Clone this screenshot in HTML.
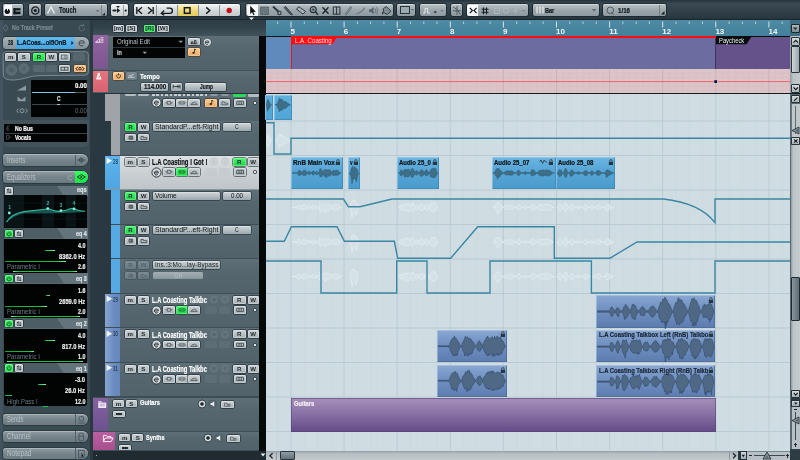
<!DOCTYPE html>
<html><head><meta charset="utf-8"><title>Project</title>
<style>
html,body{margin:0;padding:0;background:#33434c;}
body{width:800px;height:460px;position:relative;overflow:hidden;font-family:"Liberation Sans",sans-serif;}
div{position:absolute;box-sizing:border-box;}
svg{position:absolute;overflow:visible;}
.t{white-space:nowrap;font-size:9px;line-height:10px;color:#fff;font-weight:bold;letter-spacing:-0.2px;}
.b{border-radius:1.5px;background:linear-gradient(#cdd3d6,#a5afb4);box-shadow:0 0 0 0.7px rgba(24,34,40,.75),inset 0 0 0 0.7px rgba(255,255,255,.45);}
.bd{border-radius:1.5px;background:linear-gradient(#7d8c92,#6b7a81);box-shadow:0 0 0 0.7px rgba(60,75,82,.7);}
.bg{border-radius:1.5px;background:linear-gradient(#4cf672,#19d645);box-shadow:0 0 0 0.7px rgba(16,70,34,.8),inset 0 0 0 0.7px rgba(190,255,200,.5);}
.bo{border-radius:1.5px;background:linear-gradient(#f9cc94,#eda968);box-shadow:0 0 0 0.7px rgba(80,52,26,.8),inset 0 0 0 0.7px rgba(255,235,200,.5);}
.tb{border-radius:2px;background:linear-gradient(#b9c1c5,#9ca7ac 50%,#8d999e);box-shadow:0 0 0 0.8px #1a252b,inset 0 0.8px 0 rgba(255,255,255,.5);}
.pb{border-radius:1.5px;background:linear-gradient(#d0d6d9,#9ca8ad);box-shadow:0 0 0 0.7px rgba(34,46,52,.75),inset 0 0.7px 0 rgba(255,255,255,.4);}
.tab{border-radius:3px 6px 6px 3px;background:linear-gradient(#909ca1,#77858b 50%,#6b7a80);box-shadow:0 0 0 0.7px #27343b,inset 0 1px 0 rgba(255,255,255,.28);}
.bt{font-size:7px;line-height:7px;font-weight:bold;color:#1c262b;text-align:center;white-space:nowrap;letter-spacing:0;}
</style></head><body><div id="app" style="left:0;top:0;width:800px;height:460px;will-change:transform;">

<div style="left:0px;top:0px;width:800px;height:20px;background:linear-gradient(#26333b,#3a4a53 18%,#2f3e46 70%,#25323a);"></div>
<div style="left:0px;top:19px;width:800px;height:1px;background:#1b262c;"></div>
<div class="tb" style="left:3px;top:4.4px;width:20px;height:11.8px;"></div>
<div style="left:3.5px;top:5px;width:8px;height:11px;background:linear-gradient(#fff,#e4e8ea);border-radius:2px 0 0 2px;"></div>
<svg style="left:3px;top:3.6px" width="20" height="14" viewBox="0 0 20 14"><circle cx="4.3" cy="7.3" r="2.6" fill="#0c1114"/><rect x="4" y="4.2" width="1" height="2.4" fill="#fff"/><rect x="10.5" y="4.2" width="7" height="2.2" fill="#10171b"/><rect x="10.5" y="7.6" width="7" height="2.6" fill="#10171b"/><rect x="10.5" y="4.2" width="2" height="6" fill="#10171b"/></svg>
<div class="tb" style="left:28.5px;top:4.4px;width:12.5px;height:11.8px;"></div>
<svg style="left:28.5px;top:4.2px" width="13" height="13" viewBox="0 0 13 13"><circle cx="6.3" cy="6.5" r="3.6" fill="none" stroke="#151d21" stroke-width="1.3"/><circle cx="6.3" cy="6.5" r="1.6" fill="#151d21"/></svg>
<div class="tb" style="left:45px;top:4.4px;width:61.5px;height:11.8px;"></div>
<div style="left:100.6px;top:5px;width:0.8px;height:11px;background:#78868c;"></div>
<svg style="left:46px;top:4.2px" width="12" height="12" viewBox="0 0 12 12"><path d="M1.5 9.5 L5 3 L8.5 9.5" fill="none" stroke="#e6ebed" stroke-width="1.4"/></svg>
<div class="t" style="left:58.6px;top:5.61px;font-size:8.208px;letter-spacing:0;font-weight:bold;-webkit-text-stroke:0.2px;color:#10181c;transform-origin:0 0;transform:scaleX(0.725);">Touch</div>
<svg style="left:95px;top:8.5px" width="11" height="8" viewBox="0 0 11 8"><path d="M0.6 1 L4.6 1 L2.6 3.2Z" fill="#66757b"/><path d="M10 3.6 L10 6.6 L7 6.6Z" fill="#1b2428"/></svg>
<div class="tb" style="left:110.5px;top:4.4px;width:17.5px;height:11.8px;background:linear-gradient(#f4f6f7,#d8dddf 50%,#c9cfd2);"></div>
<div style="left:122.6px;top:5px;width:0.8px;height:11px;background:#98a3a8;"></div>
<svg style="left:110.5px;top:4.2px" width="18" height="13" viewBox="0 0 18 13"><path d="M2 6.5 h3 M4 5 l-0 0" stroke="#161e22" stroke-width="1.4"/><path d="M6 4 L9.2 6.5 L6 9Z" fill="#161e22"/><path d="M5 2 h4 l-2 2Z" fill="#161e22"/><rect x="1.5" y="5.7" width="4" height="1.6" fill="#161e22"/><circle cx="14.7" cy="6.6" r="1.1" fill="#161e22"/></svg>
<div class="tb" style="left:133.8px;top:4.4px;width:106.2px;height:11.8px;background:linear-gradient(#f4f6f7,#d5dadc 50%,#c3cacd);"></div>
<div style="left:177px;top:5px;width:20.5px;height:11px;background:linear-gradient(#fdf2b8,#ecd56f 60%,#e4cb63);"></div>
<div style="left:155.7px;top:5px;width:0.8px;height:11px;background:#8a959a;"></div>
<div style="left:177px;top:5px;width:0.8px;height:11px;background:#8a959a;"></div>
<div style="left:197.5px;top:5px;width:0.8px;height:11px;background:#8a959a;"></div>
<div style="left:218.5px;top:5px;width:0.8px;height:11px;background:#8a959a;"></div>
<svg style="left:133.8px;top:4.2px" width="107" height="13" viewBox="0 0 107 13"><path d="M2.8 3 v7 M8 3.2 L4.2 6.5 L8 9.8" fill="none" stroke="#12191d" stroke-width="1.3"/><path d="M19.2 3 v7 M14 3.2 L17.8 6.5 L14 9.8" fill="none" stroke="#12191d" stroke-width="1.3"/><path d="M27.5 9.3 h8.3 a2.6 2.6 0 0 0 0 -5.2 h-3.2 M30.2 6.6 L27.3 9.3 L30.2 11.2" fill="none" stroke="#12191d" stroke-width="1.3"/><rect x="50.4" y="3.7" width="5.6" height="5.6" fill="none" stroke="#12191d" stroke-width="1.5"/><path d="M72.2 3.4 L75.8 6.5 L72.2 9.6" fill="none" stroke="#12191d" stroke-width="1.4"/><circle cx="95.2" cy="6.5" r="2.7" fill="#c4101c"/></svg>
<div class="tb" style="left:246px;top:4.4px;width:147px;height:11.8px;"></div>
<div style="left:246.5px;top:5px;width:11.5px;height:11px;background:linear-gradient(#ffffff,#eef1f2);border-radius:2px 0 0 2px;"></div>
<svg style="left:246px;top:4.2px" width="147" height="13" viewBox="0 0 147 13"><path d="M4.2 1.8 L4.2 10 L6.1 8.3 L7.4 11.2 L8.5 10.7 L7.3 7.9 L9.8 7.7Z" fill="#0d1316"/><rect x="14.5" y="3" width="8" height="7.5" fill="#6a787e" stroke="#3d4b51" stroke-width="0.8" stroke-dasharray="1 0.6"/><path d="M27 2.6 L32.6 7.8" fill="none" stroke="#2d3a40" stroke-width="2"/><circle cx="33.4" cy="9" r="1.7" fill="none" stroke="#2d3a40" stroke-width="1.1"/><path d="M39.4 2.4 L45.4 9.2 L46.3 11 L44.2 10.2 L38.2 3.6Z" fill="#56646a" stroke="#27333a" stroke-width="0.9"/><path d="M50.5 5 L53 2.8 L59.5 7.5 L57 10.2Z" fill="#aab4b8" stroke="#2d393f" stroke-width="1"/><circle cx="67.2" cy="5.6" r="3" fill="none" stroke="#26323a" stroke-width="1.2"/><path d="M69.4 7.8 L72 10.8" stroke="#26323a" stroke-width="1.6"/><path d="M65.7 5.6 h3 M67.2 4.1 v3" stroke="#26323a" stroke-width="0.8"/><path d="M76.5 3.2 L82.5 9.8 M82.5 3.2 L76.5 9.8" stroke="#1b2529" stroke-width="1.3"/><rect x="87.3" y="3" width="6.6" height="7.2" fill="none" stroke="#27333a" stroke-width="1"/><path d="M90.6 3 v7.2" stroke="#27333a" stroke-width="1"/><path d="M104.5 2.5 L100 9 L99.6 11 L101.2 10 L105.8 3.5Z" fill="#8c989d" stroke="#55636a" stroke-width="0.7"/><path d="M110.5 9.8 Q115 9 118.8 3.6" fill="none" stroke="#6f7d84" stroke-width="1.3"/><path d="M123 5.2 h2 l2.6 -2.4 v7.6 l-2.6 -2.4 h-2Z" fill="#57656c"/><path d="M129 4.3 q1.6 2.3 0 4.6 M130.6 3.2 q2.4 3.4 0 6.8" fill="none" stroke="#57656c" stroke-width="0.8"/><path d="M137.3 4.5 L140.5 2.6 L145 7.2 L141.5 10.5 L137.5 8.5Z" fill="#7e8b91" stroke="#2a363c" stroke-width="0.9"/><path d="M136.3 8 q-1 1.8 0.4 2.8 q1.4 -1 0.4 -2.8" fill="#2a363c"/></svg>
<svg style="left:248px;top:17px" width="8" height="4" viewBox="0 0 8 4"><path d="M1 0.5 h5 l-2.5 2.6Z" fill="#e8edef"/></svg>
<div class="tb" style="left:397px;top:4.4px;width:18px;height:11.8px;"></div>
<div style="left:399.5px;top:6px;width:10px;height:8px;border:1px solid #27333a;background:#9ea9ae;"></div>
<svg style="left:410px;top:8px" width="5" height="4" viewBox="0 0 5 4"><path d="M0.8 1 h3.2 l-1.6 1.8Z" fill="#5b6a71"/></svg>
<div class="tb" style="left:419.5px;top:4.4px;width:26.5px;height:11.8px;"></div>
<svg style="left:419.5px;top:4.2px" width="27" height="13" viewBox="0 0 27 13"><path d="M3 9 h2 v-4.5 h2.6 v4.5 h2.4" fill="none" stroke="#dfe5e7" stroke-width="1"/><path d="M13.5 8.8 h3.4 l-1.7 -2.3Z" fill="#283338"/><path d="M20 6 h4 l-2 2Z" fill="#75848a"/></svg>
<div class="tb" style="left:450.6px;top:4.4px;width:11.9px;height:11.8px;"></div>
<svg style="left:450.6px;top:4.2px" width="12" height="13" viewBox="0 0 12 13"><path d="M2 3 Q6 4 9.5 10.5 M2 6.8 h8 M6 2 v9" fill="none" stroke="#47555b" stroke-width="0.9"/></svg>
<div class="tb" style="left:466.6px;top:4.4px;width:61.9px;height:11.8px;"></div>
<div style="left:467.1px;top:5px;width:11px;height:11px;background:linear-gradient(#ffffff,#eef1f2);border-radius:2px 0 0 2px;"></div>
<svg style="left:466.6px;top:4.2px" width="62" height="13" viewBox="0 0 62 13"><path d="M2.8 3.8 L5.4 6.5 L2.8 9.2 M9.6 3.8 L7 6.5 L9.6 9.2" fill="none" stroke="#0f161a" stroke-width="1.2"/><path d="M14.5 5.2 h7 M14.5 8.2 h7 M16.5 3.4 v6.8 M19.5 3.4 v6.8" stroke="#141c20" stroke-width="1.1"/><rect x="27.5" y="4" width="5" height="5.5" fill="none" stroke="#b0babe" stroke-width="0.9"/><circle cx="39" cy="6.7" r="2.6" fill="none" stroke="#aeb8bc" stroke-width="0.9"/><path d="M46 7 h4 M49 4 v5.6" stroke="#b0babe" stroke-width="0.9"/><path d="M54.5 6 h4 l-2 2Z" fill="#7d8b91"/></svg>
<div class="tb" style="left:533px;top:4.4px;width:66px;height:11.8px;"></div>
<svg style="left:536px;top:6px" width="9" height="8" viewBox="0 0 9 8"><path d="M1 0.5 v7 M4 0.5 v7 M7 0.5 v7" stroke="#eef2f3" stroke-width="1.1"/></svg>
<div class="t" style="left:544.5px;top:5.68px;font-size:7.992px;letter-spacing:0;font-weight:bold;-webkit-text-stroke:0.2px;color:#10181c;transform-origin:0 0;transform:scaleX(0.698);">Bar</div>
<svg style="left:591px;top:8px" width="7" height="5" viewBox="0 0 7 5"><path d="M0.8 1 h4.4 l-2.2 2.4Z" fill="#5b6a71"/></svg>
<div class="tb" style="left:603px;top:4.4px;width:63px;height:11.8px;"></div>
<svg style="left:605px;top:4.5px" width="12" height="12" viewBox="0 0 12 12"><circle cx="5.3" cy="5.3" r="3.3" fill="none" stroke="#4c5a61" stroke-width="1"/><path d="M6.4 7 L8.6 9.6" stroke="#4c5a61" stroke-width="1"/></svg>
<div class="t" style="left:617.5px;top:5.83px;font-size:7.56px;letter-spacing:0;font-weight:bold;-webkit-text-stroke:0.2px;color:#10181c;transform-origin:0 0;transform:scaleX(0.816);">1/16</div>
<div style="left:658.5px;top:4.5px;width:0.8px;height:11px;background:#737f85;"></div>
<svg style="left:660px;top:10px" width="6" height="6" viewBox="0 0 6 6"><path d="M4.5 1 v3.5 h-3.5Z" fill="#141c20"/></svg>
<div style="left:0px;top:20px;width:92px;height:440px;background:#3a4a53;"></div>
<div style="left:0px;top:20px;width:2.5px;height:440px;background:#44545f;"></div>
<div style="left:90px;top:20px;width:3px;height:440px;background:#2b3941;"></div>
<svg style="left:2px;top:22px" width="10" height="12" viewBox="0 0 10 12"><path d="M3.5 2.5 L1.5 6 L3.5 9.5 L6 6Z" fill="none" stroke="#5d6d76" stroke-width="1"/></svg>
<div class="t" style="left:12px;top:23.33px;font-size:7.56px;letter-spacing:0;font-weight:bold;-webkit-text-stroke:0.2px;color:#7d8c94;transform-origin:0 0;transform:scaleX(0.717);">No Track Preset</div>
<svg style="left:77px;top:23px" width="10" height="10" viewBox="0 0 10 10"><path d="M7.6 5 a2.8 2.8 0 1 1 -1.2 -2.3 M6.4 0.8 v2.2 h-2.2" fill="none" stroke="#5f6f78" stroke-width="1"/></svg>
<div style="left:3px;top:36.5px;width:85.5px;height:12px;border-radius:3px 6px 6px 3px;background:linear-gradient(#a9b4b9,#85929a);box-shadow:0 0 0 0.7px #27333a;"></div>
<div style="left:15.6px;top:36.5px;width:59px;height:12px;background:linear-gradient(#62b9ef,#46a6e2);"></div>
<div class="t" style="left:8.2px;top:38.22px;font-size:7.02px;letter-spacing:0;font-weight:bold;-webkit-text-stroke:0.2px;color:#11181c;transform-origin:0 0;transform:scaleX(0.640);">28</div>
<div class="t" style="left:17px;top:37.96px;font-size:7.776px;letter-spacing:0;font-weight:bold;-webkit-text-stroke:0.2px;color:#06141e;transform-origin:0 0;transform:scaleX(0.755);">L.ACoas...ol5OnB</div>
<svg style="left:70px;top:40px" width="5" height="6" viewBox="0 0 5 6"><path d="M1.3 1 L3.6 3 L1.3 5Z" fill="#10202c"/></svg>
<svg style="left:76px;top:37px" width="12" height="11" viewBox="0 0 12 11"><path d="M3.2 6 h5.2 a2.7 2.7 0 1 0 -1 2.4" fill="none" stroke="#49575e" stroke-width="1.2"/></svg>
<svg style="left:0;top:48px" width="92" height="36" viewBox="0 0 92 36"><path d="M6 3.7 H85.5 Q88.3 3.7 88.3 6.5 V24 Q88.3 27 85 27.2 L40 27.6 Q32 27.6 26 30 Q12 33.5 6 31 Q3.2 29.5 3.2 26 V6.5 Q3.2 3.7 6 3.7Z" fill="#47575f" stroke="#7a8991" stroke-width="1"/></svg>
<div class="b" style="left:5px;top:53.2px;width:11.4px;height:7.6px;"><div class="bt" style="left:0;right:0;top:-0.05px;font-size:6.1px;">m</div></div>
<div class="b" style="left:18px;top:53.2px;width:11.6px;height:7.6px;"><div class="bt" style="left:0;right:0;top:-0.05px;font-size:6.1px;">S</div></div>
<div class="bg" style="left:33px;top:53.2px;width:12px;height:7.6px;"><div class="bt" style="left:0;right:0;top:-0.05px;font-size:6.1px;">R</div></div>
<div class="b" style="left:46px;top:53.2px;width:11px;height:7.6px;"><div class="bt" style="left:0;right:0;top:-0.05px;font-size:6.1px;">W</div></div>
<div class="b" style="left:59px;top:53.2px;width:11px;height:7.6px;"></div>
<svg style="left:59px;top:53.2px" width="11" height="8" viewBox="0 0 11 8"><rect x="2.5" y="2" width="5.5" height="4" fill="none" stroke="#56646b" stroke-width="0.8"/><path d="M6 2 v4" stroke="#56646b" stroke-width="0.8"/></svg>
<div style="left:73px;top:53.2px;width:12px;height:7.6px;background:#56666e;border-radius:1.5px;"></div>
<svg style="left:4px;top:61px" width="30" height="18" viewBox="0 0 30 18"><circle cx="7.5" cy="9" r="5.2" fill="#5a6a72" stroke="#66767e" stroke-width="0.8"/><circle cx="7.5" cy="9" r="2.3" fill="#4d5d65"/><circle cx="20" cy="7.5" r="4.7" fill="#5a6a72" stroke="#66767e" stroke-width="0.8"/><path d="M18.4 7.5 l2.6 -2 v4Z" fill="#4d5d65"/></svg>
<div style="left:33px;top:64.6px;width:12px;height:7.4px;background:#586870;border-radius:1.5px;"></div>
<div style="left:46px;top:64.6px;width:11px;height:7.4px;background:#586870;border-radius:1.5px;"></div>
<div class="b" style="left:59px;top:64.6px;width:11px;height:7.4px;"></div>
<svg style="left:59px;top:64.6px" width="11" height="8" viewBox="0 0 11 8"><rect x="2" y="2.2" width="7" height="3" fill="none" stroke="#39474e" stroke-width="0.8"/><path d="M5.5 2.2 v3" stroke="#39474e" stroke-width="0.8"/></svg>
<div class="bo" style="left:73.5px;top:64.6px;width:12px;height:7.4px;"></div>
<svg style="left:73.5px;top:64.6px" width="12" height="8" viewBox="0 0 12 8"><path d="M3.8 1.8 L2 3.7 L3.8 5.6 M8.2 1.8 L10 3.7 L8.2 5.6" fill="none" stroke="#2a2016" stroke-width="1"/><circle cx="6" cy="3.7" r="1.3" fill="none" stroke="#2a2016" stroke-width="0.9"/></svg>
<svg style="left:14px;top:82px" width="16" height="36" viewBox="0 0 16 36"><path d="M3 8.5 L12 3.5 V8.5Z" fill="#8b989e"/><path d="M3.5 14.6 L7.5 17.8 L11.5 14.6 V19.2 H3.5Z" fill="#8b989e"/><path d="M4.6 26.5 L2.6 28.8 L4.6 31 M11.4 26.5 L13.4 28.8 L11.4 31" fill="none" stroke="#8b989e" stroke-width="1"/><circle cx="8" cy="28.8" r="2" fill="none" stroke="#8b989e" stroke-width="1"/></svg>
<div style="left:31px;top:80.4px;width:56px;height:36.8px;background:#020303;border-radius:1px;"></div>
<div class="t" style="left:74.6px;top:81.41px;font-size:7.344px;letter-spacing:0;font-weight:bold;-webkit-text-stroke:0.2px;color:#fff;transform-origin:0 0;transform:scaleX(0.833);">0.00</div>
<div style="left:31.5px;top:91.8px;width:43.5px;height:1.2px;background:#7cc6de;"></div>
<div style="left:75px;top:92.1px;width:11px;height:0.7px;background:#4b5960;"></div>
<div class="t" style="left:56.8px;top:93.52px;font-size:7.02px;letter-spacing:0;font-weight:bold;-webkit-text-stroke:0.2px;color:#dfe5e7;transform-origin:0 0;transform:scaleX(0.690);">C</div>
<div style="left:31.5px;top:104.1px;width:55px;height:0.7px;background:#3c4a50;"></div>
<div style="left:56.5px;top:103.8px;width:3.5px;height:1.2px;background:#8ed2c8;"></div>
<div class="t" style="left:74.6px;top:105.81px;font-size:7.344px;letter-spacing:0;font-weight:normal;color:#68747a;transform-origin:0 0;transform:scaleX(0.833);">0.00</div>
<div style="left:2.5px;top:119.5px;width:86.5px;height:27px;background:#43535c;border-radius:0 0 5px 5px;"></div>
<div style="left:4px;top:123.6px;width:83px;height:18.5px;background:#020303;border-radius:1px;"></div>
<div style="left:4.5px;top:132.8px;width:82px;height:0.7px;background:#39454b;"></div>
<svg style="left:5px;top:124px" width="8" height="18" viewBox="0 0 8 18"><path d="M4.5 2.2 h-2.5 v4 h2.5 M4.2 4.2 h-3" fill="none" stroke="#46545b" stroke-width="0.8"/><path d="M1.5 11.2 h2.5 v4 h-2.5Z M4.2 13.2 h2.4" fill="none" stroke="#46545b" stroke-width="0.8"/></svg>
<div class="t" style="left:14.9px;top:123.51px;font-size:7.344px;letter-spacing:0;font-weight:bold;-webkit-text-stroke:0.2px;color:#fff;transform-origin:0 0;transform:scaleX(0.696);">No Bus</div>
<div class="t" style="left:14.9px;top:132.91px;font-size:7.344px;letter-spacing:0;font-weight:bold;-webkit-text-stroke:0.2px;color:#fff;transform-origin:0 0;transform:scaleX(0.692);">Vocals</div>
<div class="tab" style="left:3px;top:154.2px;width:85px;height:11.6px;"></div>
<div style="left:74.5px;top:154.5px;width:0.8px;height:11px;background:#515f66;"></div>
<div class="t" style="left:7.3px;top:155.51px;font-size:8.208px;letter-spacing:0;font-weight:normal;color:#b9c3c8;transform-origin:0 0;transform:scaleX(0.747);">Inserts</div>
<svg style="left:75px;top:154.2px" width="13" height="12" viewBox="0 0 13 12"><circle cx="6.3" cy="6" r="2" fill="none" stroke="#3f4d54" stroke-width="1"/><path d="M2.5 6 h7.6 M6.3 4 v4" stroke="#3f4d54" stroke-width="0.9"/></svg>
<div class="tab" style="left:3px;top:171.2px;width:85px;height:11.6px;"></div>
<div style="left:74.5px;top:171.5px;width:0.8px;height:11px;background:#515f66;"></div>
<div style="left:75px;top:171.2px;width:13px;height:11.6px;background:linear-gradient(#3cf968,#16e548);border-radius:0 6px 6px 0;"></div>
<div class="t" style="left:7.3px;top:172.51px;font-size:8.208px;letter-spacing:0;font-weight:normal;color:#b9c3c8;transform-origin:0 0;transform:scaleX(0.746);">Equalizers</div>
<svg style="left:75px;top:171.2px" width="13" height="12" viewBox="0 0 13 12"><path d="M2.2 6 L6.3 3.6 L10.4 6 L6.3 8.4Z" fill="none" stroke="#0d4a1c" stroke-width="1"/><circle cx="6.3" cy="6" r="1.1" fill="#0d4a1c"/></svg>
<svg style="left:66px;top:173.5px" width="8" height="8" viewBox="0 0 8 8"><path d="M5.8 2.4 a2.2 2.2 0 1 0 0.2 2.6" fill="none" stroke="#9ca8ad" stroke-width="0.9"/></svg>
<div style="left:3.5px;top:185.5px;width:84px;height:10.5px;background:#64747c;"></div>
<svg style="left:3.5px;top:185.5px" width="84" height="10.5" viewBox="0 0 84 10.5"><path d="M0 0 H53 L60 10.5 H0Z" fill="#4d5d66"/></svg>
<div class="b" style="left:5px;top:187.1px;width:8.2px;height:7.8px;"></div>
<svg style="left:5px;top:187.1px" width="8.2" height="7.8" viewBox="0 0 8.2 7.8"><path d="M3 2 v4 M2 3 l1 -1 l1 0 M5.2 2 v4 M4.3 5 l0.9 1 l0.9 -1" fill="none" stroke="#222d32" stroke-width="0.8"/></svg>
<div class="t" style="left:77.2px;top:184.69px;font-size:6.804px;letter-spacing:0;font-weight:bold;-webkit-text-stroke:0.2px;color:#dfe5e8;transform-origin:0 0;transform:scaleX(0.819);">eqs</div>
<div style="left:4px;top:195.3px;width:83px;height:32.4px;background:#030607;"></div>
<svg style="left:4px;top:195.3px" width="83" height="32.4" viewBox="0 0 83 32.4"><rect x="0" y="0" width="20" height="32.4" fill="#0a1316"/><rect x="38" y="0" width="12" height="32.4" fill="#0a1417"/><rect x="62" y="0" width="10" height="32.4" fill="#091215"/><path d="M0 8 h83 M0 16 h83 M0 24 h83" stroke="#122024" stroke-width="0.6"/><path d="M2.5 27 Q8 18.5 20 16.6 Q34 15 41 14.2 Q44 13.2 47 14.8 Q52 16.8 57 16.2 Q63 15.5 66 13.8 Q69 12.8 72 14.6 Q76 16.5 81 16.2 L81 17 Q50 19 20 18.5 Q8 21 2.5 28Z" fill="#1d6b62" opacity=".75"/><path d="M2.5 27 Q8 18.5 20 16.6 Q34 15 41 14.2 Q44 13.2 47 14.8 Q52 16.8 57 16.2 Q63 15.5 66 13.8 Q69 12.8 72 14.6 Q76 16.5 81 16.2" fill="none" stroke="#36b7a0" stroke-width="1.1"/><circle cx="5.3" cy="18" r="1.4" fill="#8af0dc"/><circle cx="43.8" cy="13.6" r="1.4" fill="#8af0dc"/><circle cx="57" cy="15.6" r="1.4" fill="#8af0dc"/><circle cx="70" cy="13.8" r="1.4" fill="#8af0dc"/><text x="4.2" y="14.5" font-size="5.2" font-weight="bold" fill="#3bb5a0" font-family="Liberation Sans, sans-serif">1</text><text x="42.5" y="10" font-size="5.2" font-weight="bold" fill="#3bb5a0" font-family="Liberation Sans, sans-serif">2</text><text x="55.5" y="11.6" font-size="5.2" font-weight="bold" fill="#3bb5a0" font-family="Liberation Sans, sans-serif">3</text><text x="68.5" y="9.8" font-size="5.2" font-weight="bold" fill="#3bb5a0" font-family="Liberation Sans, sans-serif">4</text></svg>
<div style="left:3.5px;top:228px;width:84px;height:10.5px;background:#64747c;"></div>
<svg style="left:3.5px;top:228px" width="84" height="10.5" viewBox="0 0 84 10.5"><path d="M0 0 H53 L60 10.5 H0Z" fill="#4d5d66"/></svg>
<div class="bg" style="left:5px;top:229.6px;width:8.2px;height:7.8px;"></div>
<svg style="left:5px;top:229.6px" width="8.2" height="7.8" viewBox="0 0 8.2 7.8"><path d="M2.9 2.4 a2 2 0 1 0 2.4 0 M4.1 1.4 v2.4" fill="none" stroke="#0b4a1a" stroke-width="0.8"/></svg>
<div class="b" style="left:14.5px;top:229.6px;width:8.2px;height:7.8px;"></div>
<svg style="left:14.5px;top:229.6px" width="8.2" height="7.8" viewBox="0 0 8.2 7.8"><path d="M3 2 v4 M2 3 l1 -1 l1 0 M5.2 2 v4 M4.3 5 l0.9 1 l0.9 -1" fill="none" stroke="#222d32" stroke-width="0.8"/></svg>
<div class="t" style="left:75.7px;top:229.48px;font-size:7.128px;letter-spacing:0;font-weight:bold;-webkit-text-stroke:0.2px;color:#dfe5e8;transform-origin:0 0;transform:scaleX(0.750);">eq 4</div>
<div style="left:4px;top:238.5px;width:83px;height:34.5px;background:#020303;"></div>
<div class="t" style="left:77.75px;top:240.51px;font-size:7.344px;letter-spacing:0;font-weight:bold;-webkit-text-stroke:0.2px;color:#eef1f2;transform-origin:0 0;transform:scaleX(0.730);">4.0</div>
<div style="left:45px;top:249.8px;width:10px;height:1.2px;background:linear-gradient(90deg,#12b53a,#7df59a);"></div>
<div class="t" style="left:58.95px;top:251.81px;font-size:7.344px;letter-spacing:0;font-weight:bold;-webkit-text-stroke:0.2px;color:#eef1f2;transform-origin:0 0;transform:scaleX(0.784);">8362.0 Hz</div>
<div style="left:5px;top:260.7px;width:61px;height:1.3px;background:linear-gradient(90deg,#0fa834,#19c644 85%,#8cf7a6);"></div>
<div class="t" style="left:7px;top:262.16px;font-size:7.776px;letter-spacing:0;font-weight:normal;color:#6b7c88;transform-origin:0 0;transform:scaleX(0.787);">Parametric I</div>
<div class="t" style="left:77.75px;top:262.31px;font-size:7.344px;letter-spacing:0;font-weight:bold;-webkit-text-stroke:0.2px;color:#eef1f2;transform-origin:0 0;transform:scaleX(0.730);">2.6</div>
<div style="left:13px;top:271.2px;width:64px;height:1.3px;background:linear-gradient(90deg,#8cf7a6,#19c644 8%,#19c644 92%,#8cf7a6);"></div>
<div style="left:3.5px;top:273px;width:84px;height:10.5px;background:#64747c;"></div>
<svg style="left:3.5px;top:273px" width="84" height="10.5" viewBox="0 0 84 10.5"><path d="M0 0 H53 L60 10.5 H0Z" fill="#4d5d66"/></svg>
<div class="bg" style="left:5px;top:274.6px;width:8.2px;height:7.8px;"></div>
<svg style="left:5px;top:274.6px" width="8.2" height="7.8" viewBox="0 0 8.2 7.8"><path d="M2.9 2.4 a2 2 0 1 0 2.4 0 M4.1 1.4 v2.4" fill="none" stroke="#0b4a1a" stroke-width="0.8"/></svg>
<div class="b" style="left:14.5px;top:274.6px;width:8.2px;height:7.8px;"></div>
<svg style="left:14.5px;top:274.6px" width="8.2" height="7.8" viewBox="0 0 8.2 7.8"><path d="M3 2 v4 M2 3 l1 -1 l1 0 M5.2 2 v4 M4.3 5 l0.9 1 l0.9 -1" fill="none" stroke="#222d32" stroke-width="0.8"/></svg>
<div class="t" style="left:75.7px;top:274.48px;font-size:7.128px;letter-spacing:0;font-weight:bold;-webkit-text-stroke:0.2px;color:#dfe5e8;transform-origin:0 0;transform:scaleX(0.750);">eq 3</div>
<div style="left:4px;top:283.5px;width:83px;height:34.5px;background:#020303;"></div>
<div class="t" style="left:77.75px;top:285.51px;font-size:7.344px;letter-spacing:0;font-weight:bold;-webkit-text-stroke:0.2px;color:#eef1f2;transform-origin:0 0;transform:scaleX(0.730);">1.6</div>
<div style="left:46px;top:294.8px;width:4px;height:1.2px;background:linear-gradient(90deg,#12b53a,#7df59a);"></div>
<div class="t" style="left:58.95px;top:296.81px;font-size:7.344px;letter-spacing:0;font-weight:bold;-webkit-text-stroke:0.2px;color:#eef1f2;transform-origin:0 0;transform:scaleX(0.784);">2659.0 Hz</div>
<div style="left:5px;top:305.7px;width:42px;height:1.3px;background:linear-gradient(90deg,#0fa834,#19c644 85%,#8cf7a6);"></div>
<div class="t" style="left:7px;top:307.16px;font-size:7.776px;letter-spacing:0;font-weight:normal;color:#6b7c88;transform-origin:0 0;transform:scaleX(0.787);">Parametric I</div>
<div class="t" style="left:77.75px;top:307.31px;font-size:7.344px;letter-spacing:0;font-weight:bold;-webkit-text-stroke:0.2px;color:#eef1f2;transform-origin:0 0;transform:scaleX(0.730);">2.0</div>
<div style="left:11px;top:316.2px;width:69px;height:1.3px;background:linear-gradient(90deg,#8cf7a6,#19c644 8%,#19c644 92%,#8cf7a6);"></div>
<div style="left:3.5px;top:318px;width:84px;height:10.5px;background:#64747c;"></div>
<svg style="left:3.5px;top:318px" width="84" height="10.5" viewBox="0 0 84 10.5"><path d="M0 0 H53 L60 10.5 H0Z" fill="#4d5d66"/></svg>
<div class="bg" style="left:5px;top:319.6px;width:8.2px;height:7.8px;"></div>
<svg style="left:5px;top:319.6px" width="8.2" height="7.8" viewBox="0 0 8.2 7.8"><path d="M2.9 2.4 a2 2 0 1 0 2.4 0 M4.1 1.4 v2.4" fill="none" stroke="#0b4a1a" stroke-width="0.8"/></svg>
<div class="b" style="left:14.5px;top:319.6px;width:8.2px;height:7.8px;"></div>
<svg style="left:14.5px;top:319.6px" width="8.2" height="7.8" viewBox="0 0 8.2 7.8"><path d="M3 2 v4 M2 3 l1 -1 l1 0 M5.2 2 v4 M4.3 5 l0.9 1 l0.9 -1" fill="none" stroke="#222d32" stroke-width="0.8"/></svg>
<div class="t" style="left:75.7px;top:319.48px;font-size:7.128px;letter-spacing:0;font-weight:bold;-webkit-text-stroke:0.2px;color:#dfe5e8;transform-origin:0 0;transform:scaleX(0.750);">eq 2</div>
<div style="left:4px;top:328.5px;width:83px;height:34.5px;background:#020303;"></div>
<div class="t" style="left:77.75px;top:330.51px;font-size:7.344px;letter-spacing:0;font-weight:bold;-webkit-text-stroke:0.2px;color:#eef1f2;transform-origin:0 0;transform:scaleX(0.730);">4.0</div>
<div style="left:45px;top:339.8px;width:10px;height:1.2px;background:linear-gradient(90deg,#12b53a,#7df59a);"></div>
<div class="t" style="left:62.1px;top:341.81px;font-size:7.344px;letter-spacing:0;font-weight:bold;-webkit-text-stroke:0.2px;color:#eef1f2;transform-origin:0 0;transform:scaleX(0.786);">817.0 Hz</div>
<div style="left:5px;top:350.7px;width:29px;height:1.3px;background:linear-gradient(90deg,#0fa834,#19c644 85%,#8cf7a6);"></div>
<div class="t" style="left:7px;top:352.16px;font-size:7.776px;letter-spacing:0;font-weight:normal;color:#6b7c88;transform-origin:0 0;transform:scaleX(0.787);">Parametric I</div>
<div class="t" style="left:77.75px;top:352.31px;font-size:7.344px;letter-spacing:0;font-weight:bold;-webkit-text-stroke:0.2px;color:#eef1f2;transform-origin:0 0;transform:scaleX(0.730);">1.0</div>
<div style="left:7px;top:361.2px;width:76px;height:1.3px;background:linear-gradient(90deg,#8cf7a6,#19c644 8%,#19c644 92%,#8cf7a6);"></div>
<div style="left:3.5px;top:362.5px;width:84px;height:10.5px;background:#64747c;"></div>
<svg style="left:3.5px;top:362.5px" width="84" height="10.5" viewBox="0 0 84 10.5"><path d="M0 0 H53 L60 10.5 H0Z" fill="#4d5d66"/></svg>
<div class="bg" style="left:5px;top:364.1px;width:8.2px;height:7.8px;"></div>
<svg style="left:5px;top:364.1px" width="8.2" height="7.8" viewBox="0 0 8.2 7.8"><path d="M2.9 2.4 a2 2 0 1 0 2.4 0 M4.1 1.4 v2.4" fill="none" stroke="#0b4a1a" stroke-width="0.8"/></svg>
<div class="b" style="left:14.5px;top:364.1px;width:8.2px;height:7.8px;"></div>
<svg style="left:14.5px;top:364.1px" width="8.2" height="7.8" viewBox="0 0 8.2 7.8"><path d="M3 2 v4 M2 3 l1 -1 l1 0 M5.2 2 v4 M4.3 5 l0.9 1 l0.9 -1" fill="none" stroke="#222d32" stroke-width="0.8"/></svg>
<div class="t" style="left:75.7px;top:363.98px;font-size:7.128px;letter-spacing:0;font-weight:bold;-webkit-text-stroke:0.2px;color:#dfe5e8;transform-origin:0 0;transform:scaleX(0.750);">eq 1</div>
<div style="left:4px;top:373px;width:83px;height:33px;background:#020303;border-radius:0 0 3px 3px;"></div>
<div class="t" style="left:75.35px;top:375.01px;font-size:7.344px;letter-spacing:0;font-weight:bold;-webkit-text-stroke:0.2px;color:#eef1f2;transform-origin:0 0;transform:scaleX(0.778);">-3.0</div>
<div style="left:38px;top:384.3px;width:8px;height:1.2px;background:linear-gradient(90deg,#12b53a,#7df59a);"></div>
<div class="t" style="left:65.25px;top:386.31px;font-size:7.344px;letter-spacing:0;font-weight:bold;-webkit-text-stroke:0.2px;color:#eef1f2;transform-origin:0 0;transform:scaleX(0.788);">26.0 Hz</div>
<div style="left:5px;top:395.2px;width:7px;height:1.3px;background:linear-gradient(90deg,#0fa834,#19c644 85%,#8cf7a6);"></div>
<div class="t" style="left:7px;top:396.66px;font-size:7.776px;letter-spacing:0;font-weight:normal;color:#6b7c88;transform-origin:0 0;transform:scaleX(0.770);">High Pass I</div>
<div class="t" style="left:74.6px;top:396.81px;font-size:7.344px;letter-spacing:0;font-weight:bold;-webkit-text-stroke:0.2px;color:#eef1f2;transform-origin:0 0;transform:scaleX(0.742);">12.0</div>
<div style="left:43px;top:405.7px;width:5px;height:1.3px;background:linear-gradient(90deg,#8cf7a6,#19c644 8%,#19c644 92%,#8cf7a6);"></div>
<div class="tab" style="left:3px;top:413.7px;width:85px;height:11.6px;"></div>
<div style="left:74.5px;top:414px;width:0.8px;height:11px;background:#515f66;"></div>
<div class="t" style="left:7.3px;top:415.01px;font-size:8.208px;letter-spacing:0;font-weight:normal;color:#b9c3c8;transform-origin:0 0;transform:scaleX(0.705);">Sends</div>
<svg style="left:75px;top:413.7px" width="13" height="12" viewBox="0 0 13 12"><rect x="4" y="2.5" width="4.5" height="4.5" rx="1.5" fill="none" stroke="#46545b" stroke-width="0.9"/><path d="M3.5 9 h6" stroke="#46545b" stroke-width="0.9"/></svg>
<div class="tab" style="left:3px;top:430.7px;width:85px;height:11.6px;"></div>
<div style="left:74.5px;top:431px;width:0.8px;height:11px;background:#515f66;"></div>
<div class="t" style="left:7.3px;top:432.01px;font-size:8.208px;letter-spacing:0;font-weight:normal;color:#b9c3c8;transform-origin:0 0;transform:scaleX(0.772);">Channel</div>
<svg style="left:75px;top:430.7px" width="13" height="12" viewBox="0 0 13 12"><rect x="4" y="2.2" width="4.6" height="7.6" rx="1" fill="none" stroke="#46545b" stroke-width="0.9"/><path d="M4 5 h4.6" stroke="#46545b" stroke-width="0.9"/></svg>
<div class="tab" style="left:3px;top:447.7px;width:85px;height:11.6px;"></div>
<div style="left:74.5px;top:448px;width:0.8px;height:11px;background:#515f66;"></div>
<div class="t" style="left:7.3px;top:449.01px;font-size:8.208px;letter-spacing:0;font-weight:normal;color:#b9c3c8;transform-origin:0 0;transform:scaleX(0.786);">Notepad</div>
<svg style="left:75px;top:447.7px" width="13" height="12" viewBox="0 0 13 12"><rect x="3.6" y="2.4" width="5.6" height="7" fill="none" stroke="#46545b" stroke-width="0.9"/><path d="M6.5 5 v3.6 h2" stroke="#46545b" stroke-width="0.9"/></svg>
<div style="left:93px;top:20px;width:173px;height:15.5px;background:linear-gradient(#2c3b44,#33434c 50%,#43535c);"></div>
<div class="b" style="left:112.5px;top:24.5px;width:11.5px;height:7.6px;"><div class="bt" style="left:0;right:0;top:-0.1px;font-size:6.2px;">[m]</div></div>
<div class="b" style="left:125.5px;top:24.5px;width:11.5px;height:7.6px;"><div class="bt" style="left:0;right:0;top:-0.1px;font-size:6.2px;">[S]</div></div>
<div class="bg" style="left:143.7px;top:24.5px;width:11.8px;height:7.6px;"><div class="bt" style="left:0;right:0;top:-0.1px;font-size:6.2px;">[R]</div></div>
<div class="b" style="left:157px;top:24.5px;width:11.5px;height:7.6px;"><div class="bt" style="left:0;right:0;top:-0.1px;font-size:6.2px;">[W]</div></div>
<div style="left:93px;top:35.5px;width:166px;height:35px;background:linear-gradient(#5e6f77,#55666e 40%,#51626a);"></div>
<div style="left:93px;top:35.3px;width:15px;height:34px;background:linear-gradient(#91639f,#7c5690);"></div>
<svg style="left:94.2px;top:36.4px" width="11.2" height="8" viewBox="0 0 14 10"><path d="M2 7.8 L7 3.4 V7.8Z M2 7.8 H12 M8 2.2 H12 M8 4.2 H12 M8 6 H12" fill="none" stroke="#f1e6f4" stroke-width="0.9"/></svg>
<div style="left:112.5px;top:36.5px;width:72.5px;height:21.5px;background:#030404;"></div>
<div style="left:112.5px;top:47px;width:72.5px;height:0.8px;background:#2a363c;"></div>
<div class="t" style="left:116.6px;top:36.93px;font-size:7.56px;letter-spacing:0;font-weight:normal;color:#b9c3c8;transform-origin:0 0;transform:scaleX(0.804);">Original Edit</div>
<div class="t" style="left:116.6px;top:47.63px;font-size:7.56px;letter-spacing:0;font-weight:bold;-webkit-text-stroke:0.2px;color:#c3ccd0;transform-origin:0 0;transform:scaleX(0.729);">In</div>
<svg style="left:178px;top:40px" width="6" height="4" viewBox="0 0 6 4"><path d="M0.6 0.8 h4.4 l-2.2 2.2Z" fill="#9aa6ab"/></svg>
<svg style="left:142px;top:50.5px" width="6" height="4" viewBox="0 0 6 4"><path d="M0.6 0.8 h4.4 l-2.2 2.2Z" fill="#9aa6ab"/></svg>
<div class="b" style="left:188px;top:37.5px;width:11.7px;height:7.9px;"></div>
<svg style="left:188px;top:37.5px" width="11.7" height="7.9" viewBox="0 0 11.7 7.9"><path d="M2.5 5.8 h7 M3.5 5.8 v-2 h1.5 v2 M6.5 5.8 v-3.3 h1.5 v3.3" fill="none" stroke="#1f292e" stroke-width="0.8"/></svg>
<svg style="left:201.5px;top:36.5px" width="11" height="11" viewBox="0 0 11 11"><circle cx="5.3" cy="5.3" r="4.2" fill="#cfd6d9" stroke="#39464c" stroke-width="0.9"/><path d="M3.5 5.6 h3.4 a1.8 1.8 0 1 0 -0.7 1.5" fill="none" stroke="#1e282d" stroke-width="0.8"/></svg>
<div class="bo" style="left:188px;top:48.3px;width:11.7px;height:7.3px;"></div>
<svg style="left:188px;top:48.3px" width="11.7" height="7.3" viewBox="0 0 11.7 7.3"><path d="M6.5 1 v3.6 M6.5 1 l1.6 0.8" stroke="#2a2016" stroke-width="0.8" fill="none"/><ellipse cx="5.5" cy="4.8" rx="1.3" ry="0.9" fill="#2a2016"/></svg>
<div style="left:93px;top:70px;width:166px;height:0.8px;background:#3f4f57;"></div>
<div style="left:93px;top:70.5px;width:166px;height:23px;background:linear-gradient(#5e6f77,#55666e 40%,#51626a);"></div>
<div style="left:93px;top:70.6px;width:15px;height:21.8px;background:linear-gradient(#e67481,#d6626e);"></div>
<svg style="left:93.6px;top:71px" width="10" height="10" viewBox="0 0 10 10"><path d="M2 8.5 L4 1.8 H5.6 L7.6 8.5Z" fill="#fbeff0"/><path d="M4.6 6.6 L8 2.6" stroke="#d9626f" stroke-width="0.9"/></svg>
<div class="bo" style="left:112.5px;top:72.4px;width:11.3px;height:7.9px;"></div>
<svg style="left:112.5px;top:72.4px" width="11.3" height="7.9" viewBox="0 0 11.3 7.9"><path d="M4.4 2.3 a2 2 0 1 0 2.4 0 M5.6 1.3 v2.4" fill="none" stroke="#3a2a1a" stroke-width="0.8"/></svg>
<div class="bd" style="left:126px;top:72.4px;width:10.8px;height:7.9px;"></div>
<svg style="left:126px;top:72.4px" width="10.8" height="7.9" viewBox="0 0 10.8 7.9"><path d="M2 5.6 h7 M3 5.6 v-2.2 h2 v2.2 M6 5.6 v-3 h2" fill="none" stroke="#c6ced2" stroke-width="0.8"/></svg>
<div class="t" style="left:140px;top:71.78px;font-size:7.992px;letter-spacing:0;font-weight:bold;-webkit-text-stroke:0.2px;color:#fff;transform-origin:0 0;transform:scaleX(0.773);">Tempo</div>
<div class="pb" style="left:141.4px;top:83px;width:26.6px;height:7.6px;"></div>
<div class="t" style="left:143.6px;top:82.18px;font-size:7.128px;letter-spacing:0;font-weight:bold;-webkit-text-stroke:0.2px;color:#11181c;transform-origin:0 0;transform:scaleX(0.883);">114.000</div>
<div class="pb" style="left:171px;top:83px;width:11.3px;height:7.6px;"></div>
<svg style="left:171px;top:83px" width="11.3" height="7.6" viewBox="0 0 11.3 7.6"><path d="M2.2 1.6 v3.8 M9 1.6 v3.8 M2.2 3.5 h6.8 M7 1.8 v3.4" stroke="#1f292e" stroke-width="0.8" fill="none"/></svg>
<div class="pb" style="left:184.6px;top:83px;width:41.7px;height:7.6px;"></div>
<div class="t" style="left:199.7px;top:82.08px;font-size:7.128px;letter-spacing:0;font-weight:bold;-webkit-text-stroke:0.2px;color:#11181c;transform-origin:0 0;transform:scaleX(0.684);">Jump</div>
<div style="left:93px;top:93px;width:166px;height:1px;background:#26333a;"></div>
<div style="left:93px;top:94px;width:11.5px;height:303.5px;background:#2a3941;"></div>
<div style="left:105px;top:94px;width:154px;height:27px;background:linear-gradient(#5e6f77,#55666e 40%,#51626a);"></div>
<div style="left:104.5px;top:94px;width:15.5px;height:27px;background:#9fa4a8;"></div>
<div style="left:124.5px;top:94px;width:11px;height:2.4px;background:#b4bdc1;border-radius:0 0 1.5px 1.5px;"></div>
<div style="left:137.5px;top:94px;width:11.5px;height:2.4px;background:#b4bdc1;border-radius:0 0 1.5px 1.5px;"></div>
<div style="left:152px;top:94px;width:55px;height:2.2px;background:repeating-linear-gradient(90deg,#d8dfe2 0 2.6px,#66767e 2.6px 4.4px);opacity:.85;"></div>
<div style="left:210px;top:94px;width:8px;height:1.5px;background:#8c999f;border-radius:0 0 4px 4px;"></div>
<div style="left:221px;top:94px;width:8px;height:1.5px;background:#8c999f;border-radius:0 0 4px 4px;"></div>
<div style="left:233px;top:94px;width:12.5px;height:2.6px;background:#2edb55;border-radius:0 0 1.5px 1.5px;"></div>
<div style="left:247.5px;top:94px;width:11.5px;height:2.6px;background:#b4bdc1;border-radius:0 0 1.5px 1.5px;"></div>
<svg style="left:150.5px;top:97.25px" width="11" height="11" viewBox="0 0 11 11"><circle cx="5.5" cy="5.5" r="4.6" fill="#d3d9dc" stroke="#222d33" stroke-width="0.9"/><path d="M3.4 5.9 h4 a2 2 0 1 0 -0.7 1.6" fill="none" stroke="#1e282d" stroke-width="0.9"/></svg>
<div class="b" style="left:163px;top:98.75px;width:12px;height:7.75px;"></div>
<svg style="left:163px;top:98.75px" width="12" height="7.75" viewBox="0 0 12 7.75"><path d="M2.5 3.8 h1.6 M8 3.8 h1.6 M4.3 2.4 h3.4 v2.8 h-3.4Z" fill="none" stroke="#39464c" stroke-width="0.7"/></svg>
<div class="b" style="left:175.5px;top:98.75px;width:12px;height:7.75px;"></div>
<svg style="left:175.5px;top:98.75px" width="12" height="7.75" viewBox="0 0 12 7.75"><path d="M2.6 3.8 l1.6 -1.6 v3.2Z M9.4 3.8 l-1.6 -1.6 v3.2Z M6 1.6 v4.4" fill="none" stroke="#39464c" stroke-width="0.7"/></svg>
<div class="b" style="left:188px;top:98.75px;width:12px;height:7.75px;"></div>
<svg style="left:188px;top:98.75px" width="12" height="7.75" viewBox="0 0 12 7.75"><path d="M2.6 5.4 h6.8 M3.4 5.4 q0.8 -2.8 2.4 -1.6 q1.6 -2.6 2.6 1.6" fill="none" stroke="#39464c" stroke-width="0.7"/></svg>
<div class="bo" style="left:205px;top:98.75px;width:12px;height:7.75px;"></div>
<svg style="left:205px;top:98.75px" width="12" height="7.75" viewBox="0 0 12 7.75"><path d="M6.8 1.2 v3.6 M6.8 1.2 l1.6 0.8" stroke="#2a2016" stroke-width="0.8" fill="none"/><ellipse cx="5.8" cy="5" rx="1.3" ry="0.9" fill="#2a2016"/></svg>
<div class="b" style="left:218.75px;top:98.75px;width:11.5px;height:7.75px;"></div>
<svg style="left:218.75px;top:98.75px" width="11.5" height="7.75" viewBox="0 0 12 7.75"><path d="M3 5.8 v-3 h2.6 v1.2 h3.4 v1.8Z" fill="none" stroke="#39464c" stroke-width="0.7"/></svg>
<div class="b" style="left:233.75px;top:98.75px;width:12.25px;height:7.75px;"></div>
<svg style="left:233.75px;top:98.75px" width="12.25" height="7.75" viewBox="0 0 12 7.75"><path d="M2.6 2.2 h6.8 v3.2 h-6.8Z M4.9 2.2 v3.2 M7.1 2.2 v3.2" fill="none" stroke="#27333a" stroke-width="0.7"/></svg>
<svg style="left:252px;top:99.75px" width="6" height="6" viewBox="0 0 6 6"><circle cx="3" cy="3" r="1.7" fill="#dfe5e7" stroke="#27333a" stroke-width="0.8"/></svg>
<div style="left:105px;top:120.6px;width:154px;height:0.8px;background:#3c4b53;"></div>
<div style="left:105px;top:121px;width:154px;height:34.5px;background:linear-gradient(#5e6f77,#55666e 40%,#51626a);"></div>
<div style="left:105px;top:121px;width:6px;height:34.5px;background:#2a3941;"></div>
<div style="left:111px;top:121px;width:9px;height:34.5px;background:#a0a5a9;"></div>
<div class="bg" style="left:124.5px;top:122.5px;width:11.75px;height:8px;"><div class="bt" style="left:0;right:0;top:0.15px;font-size:6.1px;">R</div></div>
<div class="b" style="left:138.25px;top:122.5px;width:11px;height:8px;"><div class="bt" style="left:0;right:0;top:0.15px;font-size:6.1px;">W</div></div>
<div class="pb" style="left:152.5px;top:122.5px;width:67.5px;height:8px;"></div>
<div class="t" style="left:154.5px;top:121.56px;font-size:7.776px;letter-spacing:0;font-weight:normal;color:#0e1518;transform-origin:0 0;transform:scaleX(0.887);">StandardP...eft-Right</div>
<div class="pb" style="left:222.5px;top:122.5px;width:28.5px;height:8px;"></div>
<div class="t" style="left:234.95px;top:121.56px;font-size:7.776px;letter-spacing:0;font-weight:normal;color:#0e1518;transform-origin:0 0;transform:scaleX(0.641);">C</div>
<div class="b" style="left:124.5px;top:133.75px;width:11.75px;height:7.5px;"></div>
<div class="b" style="left:138.25px;top:133.75px;width:11px;height:7.5px;"></div>
<svg style="left:124.5px;top:133.75px" width="25" height="7.5" viewBox="0 0 25 7.5"><path d="M4 2.2 h3.6 v3 h-3.6Z M5.2 2.2 v3 M6.4 2.2 v3" fill="none" stroke="#2a363c" stroke-width="0.7"/><path d="M16 5.6 v-3.2 h2.4 v1.2 h3.4 v2Z" fill="none" stroke="#2a363c" stroke-width="0.7"/></svg>
<div style="left:111px;top:154.9px;width:148px;height:0.8px;background:#3f4e56;"></div>
<div style="left:105px;top:155.5px;width:154px;height:34.5px;background:linear-gradient(#dde1e3,#cad0d3 50%,#bec5c8);"></div>
<div style="left:104.5px;top:155.5px;width:15.5px;height:34.5px;background:linear-gradient(#5fb3ea,#4ca6e2);"></div>
<svg style="left:105.5px;top:157px" width="7" height="8" viewBox="0 0 7 8"><path d="M0.6 0.6 L6 3.8 L0.6 7Z" fill="#f3f8fb"/></svg>
<div class="t" style="left:113px;top:156.83px;font-size:6.696px;letter-spacing:0;font-weight:normal;color:#16242e;transform-origin:0 0;transform:scaleX(0.671);">28</div>
<div class="b" style="left:124.5px;top:157.5px;width:11.2px;height:8px;"><div class="bt" style="left:0;right:0;top:0.15px;font-size:6.1px;">m</div></div>
<div class="b" style="left:137.5px;top:157.5px;width:11.5px;height:8px;"><div class="bt" style="left:0;right:0;top:0.15px;font-size:6.1px;">S</div></div>
<div class="t" style="left:152px;top:157.07px;font-size:8.316px;letter-spacing:0;font-weight:bold;-webkit-text-stroke:0.2px;color:#0a0f12;transform-origin:0 0;transform:scaleX(0.718);">L.A Coasting I Got !</div>
<svg style="left:209px;top:157px" width="22" height="9" viewBox="0 0 22 9"><circle cx="5" cy="4.5" r="3.6" fill="#cdd3d6" stroke="#bcc4c7" stroke-width="0.7"/><circle cx="5" cy="4.5" r="1.5" fill="#bfc7ca"/><circle cx="16" cy="4.5" r="3.6" fill="#cdd3d6" stroke="#bcc4c7" stroke-width="0.7"/><path d="M14.6 4.5 l2.2 -1.7 v3.4Z" fill="#bfc7ca"/></svg>
<div class="bg" style="left:233px;top:157.5px;width:12.5px;height:8px;"><div class="bt" style="left:0;right:0;top:0.15px;font-size:6.1px;">R</div></div>
<div class="b" style="left:247.5px;top:157.5px;width:11.5px;height:8px;"><div class="bt" style="left:0;right:0;top:0.15px;font-size:6.1px;">W</div></div>
<svg style="left:150.5px;top:166.5px" width="11" height="11" viewBox="0 0 11 11"><circle cx="5.5" cy="5.5" r="4.6" fill="#d3d9dc" stroke="#222d33" stroke-width="0.9"/><path d="M3.4 5.9 h4 a2 2 0 1 0 -0.7 1.6" fill="none" stroke="#1e282d" stroke-width="0.9"/></svg>
<div class="b" style="left:163px;top:168px;width:12px;height:7.75px;"></div>
<svg style="left:163px;top:168px" width="12" height="7.75" viewBox="0 0 12 7.75"><path d="M2.5 3.8 h1.6 M8 3.8 h1.6 M4.3 2.4 h3.4 v2.8 h-3.4Z" fill="none" stroke="#39464c" stroke-width="0.7"/></svg>
<div class="bg" style="left:175.5px;top:168px;width:12px;height:7.75px;"></div>
<svg style="left:175.5px;top:168px" width="12" height="7.75" viewBox="0 0 12 7.75"><path d="M2.6 3.8 l1.6 -1.6 v3.2Z M9.4 3.8 l-1.6 -1.6 v3.2Z M6 1.6 v4.4" fill="none" stroke="#0c4a1b" stroke-width="0.7"/></svg>
<div class="b" style="left:188px;top:168px;width:12px;height:7.75px;"></div>
<svg style="left:188px;top:168px" width="12" height="7.75" viewBox="0 0 12 7.75"><path d="M2.6 5.4 h6.8 M3.4 5.4 q0.8 -2.8 2.4 -1.6 q1.6 -2.6 2.6 1.6" fill="none" stroke="#39464c" stroke-width="0.7"/></svg>
<div style="left:205px;top:168px;width:12px;height:7.75px;background:#c3cacd;border-radius:1.5px;opacity:.75;"></div>
<div style="left:218.75px;top:168px;width:11.5px;height:7.75px;background:#c3cacd;border-radius:1.5px;opacity:.75;"></div>
<div class="b" style="left:233.75px;top:168px;width:12.25px;height:7.75px;"></div>
<svg style="left:233.75px;top:168px" width="12.25" height="7.75" viewBox="0 0 12 7.75"><path d="M2.6 2.2 h6.8 v3.2 h-6.8Z M4.9 2.2 v3.2 M7.1 2.2 v3.2" fill="none" stroke="#27333a" stroke-width="0.7"/></svg>
<svg style="left:252px;top:169px" width="6" height="6" viewBox="0 0 6 6"><circle cx="3" cy="3" r="1.7" fill="#dfe5e7" stroke="#27333a" stroke-width="0.8"/></svg>
<div style="left:105px;top:189.4px;width:154px;height:0.8px;background:#8b969b;"></div>
<div style="left:105px;top:190px;width:154px;height:34.5px;background:linear-gradient(#5e6f77,#55666e 40%,#51626a);"></div>
<div style="left:105px;top:190px;width:6px;height:34.5px;background:#2a3941;"></div>
<div style="left:111px;top:190px;width:9px;height:34.5px;background:#55aae3;"></div>
<div class="bg" style="left:124.5px;top:191.5px;width:11.75px;height:8px;"><div class="bt" style="left:0;right:0;top:0.15px;font-size:6.1px;">R</div></div>
<div class="b" style="left:138.25px;top:191.5px;width:11px;height:8px;"><div class="bt" style="left:0;right:0;top:0.15px;font-size:6.1px;">W</div></div>
<div class="pb" style="left:152.5px;top:191.5px;width:67.5px;height:8px;"></div>
<div class="t" style="left:154.5px;top:190.56px;font-size:7.776px;letter-spacing:0;font-weight:normal;color:#0e1518;transform-origin:0 0;transform:scaleX(0.839);">Volume</div>
<div class="pb" style="left:222.5px;top:191.5px;width:28.5px;height:8px;"></div>
<div class="t" style="left:230.75px;top:190.56px;font-size:7.776px;letter-spacing:0;font-weight:normal;color:#0e1518;transform-origin:0 0;transform:scaleX(0.793);">0.00</div>
<div class="b" style="left:124.5px;top:202.75px;width:11.75px;height:7.5px;"></div>
<div class="b" style="left:138.25px;top:202.75px;width:11px;height:7.5px;"></div>
<svg style="left:124.5px;top:202.75px" width="25" height="7.5" viewBox="0 0 25 7.5"><path d="M4 2.2 h3.6 v3 h-3.6Z M5.2 2.2 v3 M6.4 2.2 v3" fill="none" stroke="#2a363c" stroke-width="0.7"/><path d="M16 5.6 v-3.2 h2.4 v1.2 h3.4 v2Z" fill="none" stroke="#2a363c" stroke-width="0.7"/></svg>
<div style="left:111px;top:223.9px;width:148px;height:0.8px;background:#3f4e56;"></div>
<div style="left:105px;top:224.5px;width:154px;height:34.5px;background:linear-gradient(#5e6f77,#55666e 40%,#51626a);"></div>
<div style="left:105px;top:224.5px;width:6px;height:34.5px;background:#2a3941;"></div>
<div style="left:111px;top:224.5px;width:9px;height:34.5px;background:#55aae3;"></div>
<div class="bg" style="left:124.5px;top:226px;width:11.75px;height:8px;"><div class="bt" style="left:0;right:0;top:0.15px;font-size:6.1px;">R</div></div>
<div class="b" style="left:138.25px;top:226px;width:11px;height:8px;"><div class="bt" style="left:0;right:0;top:0.15px;font-size:6.1px;">W</div></div>
<div class="pb" style="left:152.5px;top:226px;width:67.5px;height:8px;"></div>
<div class="t" style="left:154.5px;top:225.06px;font-size:7.776px;letter-spacing:0;font-weight:normal;color:#0e1518;transform-origin:0 0;transform:scaleX(0.887);">StandardP...eft-Right</div>
<div class="pb" style="left:222.5px;top:226px;width:28.5px;height:8px;"></div>
<div class="t" style="left:234.95px;top:225.06px;font-size:7.776px;letter-spacing:0;font-weight:normal;color:#0e1518;transform-origin:0 0;transform:scaleX(0.641);">C</div>
<div class="b" style="left:124.5px;top:237.25px;width:11.75px;height:7.5px;"></div>
<div class="b" style="left:138.25px;top:237.25px;width:11px;height:7.5px;"></div>
<svg style="left:124.5px;top:237.25px" width="25" height="7.5" viewBox="0 0 25 7.5"><path d="M4 2.2 h3.6 v3 h-3.6Z M5.2 2.2 v3 M6.4 2.2 v3" fill="none" stroke="#2a363c" stroke-width="0.7"/><path d="M16 5.6 v-3.2 h2.4 v1.2 h3.4 v2Z" fill="none" stroke="#2a363c" stroke-width="0.7"/></svg>
<div style="left:111px;top:258.4px;width:148px;height:0.8px;background:#3f4e56;"></div>
<div style="left:105px;top:259px;width:154px;height:34.5px;background:linear-gradient(#5e6f77,#55666e 40%,#51626a);"></div>
<div style="left:105px;top:259px;width:6px;height:34.5px;background:#2a3941;"></div>
<div style="left:111px;top:259px;width:9px;height:34.5px;background:#55aae3;"></div>
<div class="bd" style="left:124.5px;top:260.5px;width:11.75px;height:8px;"><div class="bt" style="left:0;right:0;top:0.15px;font-size:6.1px;color:#55656d;">R</div></div>
<div class="bd" style="left:138.25px;top:260.5px;width:11px;height:8px;"><div class="bt" style="left:0;right:0;top:0.15px;font-size:6.1px;color:#55656d;">W</div></div>
<div class="pb" style="left:152.5px;top:260.5px;width:67.5px;height:8px;"></div>
<div class="t" style="left:154.5px;top:259.56px;font-size:7.776px;letter-spacing:0;font-weight:normal;color:#1a2428;transform-origin:0 0;transform:scaleX(0.830);">Ins.:3:Mo...lay-Bypass</div>
<div class="bd" style="left:124.5px;top:271.75px;width:11.75px;height:7.5px;"></div>
<div class="bd" style="left:138.25px;top:271.75px;width:11px;height:7.5px;"></div>
<svg style="left:124.5px;top:271.75px" width="25" height="7.5" viewBox="0 0 25 7.5"><path d="M4 2.2 h3.6 v3 h-3.6Z M5.2 2.2 v3 M6.4 2.2 v3" fill="none" stroke="#56666e" stroke-width="0.7"/><path d="M16 5.6 v-3.2 h2.4 v1.2 h3.4 v2Z" fill="none" stroke="#56666e" stroke-width="0.7"/></svg>
<div style="left:152.5px;top:271.75px;width:50.5px;height:7.5px;background:linear-gradient(#a4afb4,#8a979c);box-shadow:0 0 0 0.7px #56656c;border-radius:1.5px;"></div>
<div class="t" style="left:173.5px;top:270.61px;font-size:7.776px;letter-spacing:0;font-weight:normal;color:#b9c3c7;transform-origin:0 0;transform:scaleX(0.771);">On</div>
<div style="left:111px;top:292.9px;width:148px;height:0.8px;background:#3f4e56;"></div>
<div style="left:105px;top:293.5px;width:154px;height:34.5px;background:linear-gradient(#5e6f77,#55666e 40%,#51626a);"></div>
<div style="left:104.5px;top:293.5px;width:15.5px;height:34.5px;background:linear-gradient(90deg,#88a4cf,#6a8cc0 60%,#6487bc);"></div>
<svg style="left:105.5px;top:295px" width="7" height="8" viewBox="0 0 7 8"><path d="M0.6 0.6 L6 3.8 L0.6 7Z" fill="#f3f6fb"/></svg>
<div class="t" style="left:113px;top:294.83px;font-size:6.696px;letter-spacing:0;font-weight:normal;color:#16202c;transform-origin:0 0;transform:scaleX(0.671);">29</div>
<div class="b" style="left:124.5px;top:295.5px;width:11.2px;height:8px;"><div class="bt" style="left:0;right:0;top:0.15px;font-size:6.1px;">m</div></div>
<div class="b" style="left:137.5px;top:295.5px;width:11.5px;height:8px;"><div class="bt" style="left:0;right:0;top:0.15px;font-size:6.1px;">S</div></div>
<div class="t" style="left:152px;top:295.07px;font-size:8.316px;letter-spacing:0;font-weight:bold;-webkit-text-stroke:0.2px;color:#ffffff;transform-origin:0 0;transform:scaleX(0.696);">L.A Coasting Talkbc</div>
<svg style="left:209px;top:295px" width="22" height="9" viewBox="0 0 22 9"><circle cx="5" cy="4.5" r="3.6" fill="#62727a" stroke="#6c7c84" stroke-width="0.7"/><circle cx="5" cy="4.5" r="1.5" fill="#56666e"/><circle cx="16" cy="4.5" r="3.6" fill="#62727a" stroke="#6c7c84" stroke-width="0.7"/><path d="M14.6 4.5 l2.2 -1.7 v3.4Z" fill="#56666e"/></svg>
<div class="b" style="left:233px;top:295.5px;width:12.5px;height:8px;"><div class="bt" style="left:0;right:0;top:0.15px;font-size:6.1px;">R</div></div>
<div class="b" style="left:247.5px;top:295.5px;width:11.5px;height:8px;"><div class="bt" style="left:0;right:0;top:0.15px;font-size:6.1px;">W</div></div>
<svg style="left:150.5px;top:304.5px" width="11" height="11" viewBox="0 0 11 11"><circle cx="5.5" cy="5.5" r="4.6" fill="#d3d9dc" stroke="#222d33" stroke-width="0.9"/><path d="M3.4 5.9 h4 a2 2 0 1 0 -0.7 1.6" fill="none" stroke="#1e282d" stroke-width="0.9"/></svg>
<div class="b" style="left:163px;top:306px;width:12px;height:7.75px;"></div>
<svg style="left:163px;top:306px" width="12" height="7.75" viewBox="0 0 12 7.75"><path d="M2.5 3.8 h1.6 M8 3.8 h1.6 M4.3 2.4 h3.4 v2.8 h-3.4Z" fill="none" stroke="#39464c" stroke-width="0.7"/></svg>
<div class="bg" style="left:175.5px;top:306px;width:12px;height:7.75px;"></div>
<svg style="left:175.5px;top:306px" width="12" height="7.75" viewBox="0 0 12 7.75"><path d="M2.6 3.8 l1.6 -1.6 v3.2Z M9.4 3.8 l-1.6 -1.6 v3.2Z M6 1.6 v4.4" fill="none" stroke="#0c4a1b" stroke-width="0.7"/></svg>
<div class="b" style="left:188px;top:306px;width:12px;height:7.75px;"></div>
<svg style="left:188px;top:306px" width="12" height="7.75" viewBox="0 0 12 7.75"><path d="M2.6 5.4 h6.8 M3.4 5.4 q0.8 -2.8 2.4 -1.6 q1.6 -2.6 2.6 1.6" fill="none" stroke="#39464c" stroke-width="0.7"/></svg>
<div style="left:205px;top:306px;width:12px;height:7.75px;background:#62727a;border-radius:1.5px;opacity:.75;"></div>
<div style="left:218.75px;top:306px;width:11.5px;height:7.75px;background:#62727a;border-radius:1.5px;opacity:.75;"></div>
<div class="b" style="left:233.75px;top:306px;width:12.25px;height:7.75px;"></div>
<svg style="left:233.75px;top:306px" width="12.25" height="7.75" viewBox="0 0 12 7.75"><path d="M2.6 2.2 h6.8 v3.2 h-6.8Z M4.9 2.2 v3.2 M7.1 2.2 v3.2" fill="none" stroke="#27333a" stroke-width="0.7"/></svg>
<svg style="left:252px;top:307px" width="6" height="6" viewBox="0 0 6 6"><circle cx="3" cy="3" r="1.7" fill="#dfe5e7" stroke="#27333a" stroke-width="0.8"/></svg>
<div style="left:105px;top:327.4px;width:154px;height:0.8px;background:#3f4e56;"></div>
<div style="left:105px;top:328px;width:154px;height:34.5px;background:linear-gradient(#5e6f77,#55666e 40%,#51626a);"></div>
<div style="left:104.5px;top:328px;width:15.5px;height:34.5px;background:linear-gradient(90deg,#88a4cf,#6a8cc0 60%,#6487bc);"></div>
<svg style="left:105.5px;top:329.5px" width="7" height="8" viewBox="0 0 7 8"><path d="M0.6 0.6 L6 3.8 L0.6 7Z" fill="#f3f6fb"/></svg>
<div class="t" style="left:113px;top:329.33px;font-size:6.696px;letter-spacing:0;font-weight:normal;color:#16202c;transform-origin:0 0;transform:scaleX(0.671);">30</div>
<div class="b" style="left:124.5px;top:330px;width:11.2px;height:8px;"><div class="bt" style="left:0;right:0;top:0.15px;font-size:6.1px;">m</div></div>
<div class="b" style="left:137.5px;top:330px;width:11.5px;height:8px;"><div class="bt" style="left:0;right:0;top:0.15px;font-size:6.1px;">S</div></div>
<div class="t" style="left:152px;top:329.57px;font-size:8.316px;letter-spacing:0;font-weight:bold;-webkit-text-stroke:0.2px;color:#ffffff;transform-origin:0 0;transform:scaleX(0.696);">L.A Coasting Talkbc</div>
<svg style="left:209px;top:329.5px" width="22" height="9" viewBox="0 0 22 9"><circle cx="5" cy="4.5" r="3.6" fill="#62727a" stroke="#6c7c84" stroke-width="0.7"/><circle cx="5" cy="4.5" r="1.5" fill="#56666e"/><circle cx="16" cy="4.5" r="3.6" fill="#62727a" stroke="#6c7c84" stroke-width="0.7"/><path d="M14.6 4.5 l2.2 -1.7 v3.4Z" fill="#56666e"/></svg>
<div class="b" style="left:233px;top:330px;width:12.5px;height:8px;"><div class="bt" style="left:0;right:0;top:0.15px;font-size:6.1px;">R</div></div>
<div class="b" style="left:247.5px;top:330px;width:11.5px;height:8px;"><div class="bt" style="left:0;right:0;top:0.15px;font-size:6.1px;">W</div></div>
<svg style="left:150.5px;top:339px" width="11" height="11" viewBox="0 0 11 11"><circle cx="5.5" cy="5.5" r="4.6" fill="#d3d9dc" stroke="#222d33" stroke-width="0.9"/><path d="M3.4 5.9 h4 a2 2 0 1 0 -0.7 1.6" fill="none" stroke="#1e282d" stroke-width="0.9"/></svg>
<div class="b" style="left:163px;top:340.5px;width:12px;height:7.75px;"></div>
<svg style="left:163px;top:340.5px" width="12" height="7.75" viewBox="0 0 12 7.75"><path d="M2.5 3.8 h1.6 M8 3.8 h1.6 M4.3 2.4 h3.4 v2.8 h-3.4Z" fill="none" stroke="#39464c" stroke-width="0.7"/></svg>
<div class="b" style="left:175.5px;top:340.5px;width:12px;height:7.75px;"></div>
<svg style="left:175.5px;top:340.5px" width="12" height="7.75" viewBox="0 0 12 7.75"><path d="M2.6 3.8 l1.6 -1.6 v3.2Z M9.4 3.8 l-1.6 -1.6 v3.2Z M6 1.6 v4.4" fill="none" stroke="#39464c" stroke-width="0.7"/></svg>
<div class="b" style="left:188px;top:340.5px;width:12px;height:7.75px;"></div>
<svg style="left:188px;top:340.5px" width="12" height="7.75" viewBox="0 0 12 7.75"><path d="M2.6 5.4 h6.8 M3.4 5.4 q0.8 -2.8 2.4 -1.6 q1.6 -2.6 2.6 1.6" fill="none" stroke="#39464c" stroke-width="0.7"/></svg>
<div style="left:205px;top:340.5px;width:12px;height:7.75px;background:#62727a;border-radius:1.5px;opacity:.75;"></div>
<div style="left:218.75px;top:340.5px;width:11.5px;height:7.75px;background:#62727a;border-radius:1.5px;opacity:.75;"></div>
<div class="b" style="left:233.75px;top:340.5px;width:12.25px;height:7.75px;"></div>
<svg style="left:233.75px;top:340.5px" width="12.25" height="7.75" viewBox="0 0 12 7.75"><path d="M2.6 2.2 h6.8 v3.2 h-6.8Z M4.9 2.2 v3.2 M7.1 2.2 v3.2" fill="none" stroke="#27333a" stroke-width="0.7"/></svg>
<svg style="left:252px;top:341.5px" width="6" height="6" viewBox="0 0 6 6"><circle cx="3" cy="3" r="1.7" fill="#dfe5e7" stroke="#27333a" stroke-width="0.8"/></svg>
<div style="left:105px;top:361.9px;width:154px;height:0.8px;background:#3f4e56;"></div>
<div style="left:105px;top:362.5px;width:154px;height:34.5px;background:linear-gradient(#5e6f77,#55666e 40%,#51626a);"></div>
<div style="left:104.5px;top:362.5px;width:15.5px;height:34.5px;background:linear-gradient(90deg,#88a4cf,#6a8cc0 60%,#6487bc);"></div>
<svg style="left:105.5px;top:364px" width="7" height="8" viewBox="0 0 7 8"><path d="M0.6 0.6 L6 3.8 L0.6 7Z" fill="#f3f6fb"/></svg>
<div class="t" style="left:113px;top:363.83px;font-size:6.696px;letter-spacing:0;font-weight:normal;color:#16202c;transform-origin:0 0;transform:scaleX(0.671);">31</div>
<div class="b" style="left:124.5px;top:364.5px;width:11.2px;height:8px;"><div class="bt" style="left:0;right:0;top:0.15px;font-size:6.1px;">m</div></div>
<div class="b" style="left:137.5px;top:364.5px;width:11.5px;height:8px;"><div class="bt" style="left:0;right:0;top:0.15px;font-size:6.1px;">S</div></div>
<div class="t" style="left:152px;top:364.07px;font-size:8.316px;letter-spacing:0;font-weight:bold;-webkit-text-stroke:0.2px;color:#ffffff;transform-origin:0 0;transform:scaleX(0.696);">L.A Coasting Talkbc</div>
<svg style="left:209px;top:364px" width="22" height="9" viewBox="0 0 22 9"><circle cx="5" cy="4.5" r="3.6" fill="#62727a" stroke="#6c7c84" stroke-width="0.7"/><circle cx="5" cy="4.5" r="1.5" fill="#56666e"/><circle cx="16" cy="4.5" r="3.6" fill="#62727a" stroke="#6c7c84" stroke-width="0.7"/><path d="M14.6 4.5 l2.2 -1.7 v3.4Z" fill="#56666e"/></svg>
<div class="b" style="left:233px;top:364.5px;width:12.5px;height:8px;"><div class="bt" style="left:0;right:0;top:0.15px;font-size:6.1px;">R</div></div>
<div class="b" style="left:247.5px;top:364.5px;width:11.5px;height:8px;"><div class="bt" style="left:0;right:0;top:0.15px;font-size:6.1px;">W</div></div>
<svg style="left:150.5px;top:373.5px" width="11" height="11" viewBox="0 0 11 11"><circle cx="5.5" cy="5.5" r="4.6" fill="#d3d9dc" stroke="#222d33" stroke-width="0.9"/><path d="M3.4 5.9 h4 a2 2 0 1 0 -0.7 1.6" fill="none" stroke="#1e282d" stroke-width="0.9"/></svg>
<div class="b" style="left:163px;top:375px;width:12px;height:7.75px;"></div>
<svg style="left:163px;top:375px" width="12" height="7.75" viewBox="0 0 12 7.75"><path d="M2.5 3.8 h1.6 M8 3.8 h1.6 M4.3 2.4 h3.4 v2.8 h-3.4Z" fill="none" stroke="#39464c" stroke-width="0.7"/></svg>
<div class="b" style="left:175.5px;top:375px;width:12px;height:7.75px;"></div>
<svg style="left:175.5px;top:375px" width="12" height="7.75" viewBox="0 0 12 7.75"><path d="M2.6 3.8 l1.6 -1.6 v3.2Z M9.4 3.8 l-1.6 -1.6 v3.2Z M6 1.6 v4.4" fill="none" stroke="#39464c" stroke-width="0.7"/></svg>
<div class="b" style="left:188px;top:375px;width:12px;height:7.75px;"></div>
<svg style="left:188px;top:375px" width="12" height="7.75" viewBox="0 0 12 7.75"><path d="M2.6 5.4 h6.8 M3.4 5.4 q0.8 -2.8 2.4 -1.6 q1.6 -2.6 2.6 1.6" fill="none" stroke="#39464c" stroke-width="0.7"/></svg>
<div style="left:205px;top:375px;width:12px;height:7.75px;background:#62727a;border-radius:1.5px;opacity:.75;"></div>
<div style="left:218.75px;top:375px;width:11.5px;height:7.75px;background:#62727a;border-radius:1.5px;opacity:.75;"></div>
<div class="b" style="left:233.75px;top:375px;width:12.25px;height:7.75px;"></div>
<svg style="left:233.75px;top:375px" width="12.25" height="7.75" viewBox="0 0 12 7.75"><path d="M2.6 2.2 h6.8 v3.2 h-6.8Z M4.9 2.2 v3.2 M7.1 2.2 v3.2" fill="none" stroke="#27333a" stroke-width="0.7"/></svg>
<svg style="left:252px;top:376px" width="6" height="6" viewBox="0 0 6 6"><circle cx="3" cy="3" r="1.7" fill="#dfe5e7" stroke="#27333a" stroke-width="0.8"/></svg>
<div style="left:105px;top:396.4px;width:154px;height:0.8px;background:#3f4e56;"></div>
<div style="left:93px;top:397px;width:166px;height:0.8px;background:#3f4e56;"></div>
<div style="left:93px;top:397.5px;width:166px;height:34.3px;background:linear-gradient(#5e6f77,#55666e 40%,#51626a);"></div>
<div style="left:93px;top:397.5px;width:15px;height:34.3px;background:linear-gradient(#84629f,#6d4f90);"></div>
<svg style="left:97px;top:399.7px" width="11" height="9" viewBox="0 0 11 9"><path d="M1.2 2.6 V1.2 H4.4 L5.2 2.6Z" fill="#f0e9f4"/><rect x="1.2" y="2.6" width="8" height="5.4" fill="#f0e9f4"/><path d="M2.6 4.2 h5.2 M2.6 5.8 h5.2" stroke="#8b6aa6" stroke-width="0.5"/></svg>
<div class="b" style="left:112.5px;top:400.1px;width:11.7px;height:6.9px;"><div class="bt" style="left:0;right:0;top:-0.4px;font-size:6.1px;">m</div></div>
<div class="b" style="left:126px;top:400.1px;width:10.8px;height:6.9px;"><div class="bt" style="left:0;right:0;top:-0.4px;font-size:6.1px;">S</div></div>
<div class="t" style="left:140px;top:398.46px;font-size:7.776px;letter-spacing:0;font-weight:bold;-webkit-text-stroke:0.2px;color:#fff;transform-origin:0 0;transform:scaleX(0.727);">Guitars</div>
<svg style="left:196.5px;top:399px" width="22" height="10" viewBox="0 0 22 10"><circle cx="5" cy="5" r="4" fill="#d0d6d9" stroke="#27333a" stroke-width="0.9"/><circle cx="5" cy="5" r="1.8" fill="#1a2328"/><circle cx="15.6" cy="5" r="4" fill="#56666e" stroke="#4a5a62" stroke-width="0.6"/><path d="M13.6 4 h1.4 l2.2 -1.8 v5.6 l-2.2 -1.8 h-1.4Z" fill="#e8edef"/></svg>
<div class="b" style="left:221px;top:400.5px;width:12.5px;height:7px;"></div>
<svg style="left:221px;top:400.5px" width="12.5" height="7" viewBox="0 0 12 7.75"><path d="M3 5.8 v-3.4 h2.6 v1.2 h3.4 v2.2Z M6 4.6 h2" fill="none" stroke="#39464c" stroke-width="0.7"/></svg>
<div class="b" style="left:112.5px;top:410.6px;width:12px;height:6.9px;"></div>
<div style="left:115.5px;top:413.1px;width:6px;height:1.8px;background:#222c31;"></div>
<div style="left:93px;top:431.2px;width:166px;height:0.8px;background:#3f4e56;"></div>
<div style="left:93px;top:431.8px;width:166px;height:18.7px;background:linear-gradient(#5e6f77,#55666e 40%,#51626a);"></div>
<div style="left:93px;top:431.8px;width:21.5px;height:18.7px;background:linear-gradient(#ba60a1,#a8508f);"></div>
<svg style="left:101.5px;top:434.3px" width="12" height="9" viewBox="0 0 12 9"><path d="M1.4 7.6 V1.4 H4.4 L5.2 2.6 H9 V4 M1.4 7.6 L3.2 4 H11 L9.2 7.6Z" fill="none" stroke="#fbeef7" stroke-width="1"/></svg>
<div class="b" style="left:118.8px;top:434.4px;width:11.7px;height:6.9px;"><div class="bt" style="left:0;right:0;top:-0.4px;font-size:6.1px;">m</div></div>
<div class="b" style="left:132.3px;top:434.4px;width:10.8px;height:6.9px;"><div class="bt" style="left:0;right:0;top:-0.4px;font-size:6.1px;">S</div></div>
<div class="t" style="left:146.3px;top:432.76px;font-size:7.776px;letter-spacing:0;font-weight:bold;-webkit-text-stroke:0.2px;color:#fff;transform-origin:0 0;transform:scaleX(0.714);">Synths</div>
<svg style="left:202.8px;top:433.3px" width="22" height="10" viewBox="0 0 22 10"><circle cx="5" cy="5" r="4" fill="#d0d6d9" stroke="#27333a" stroke-width="0.9"/><circle cx="5" cy="5" r="1.8" fill="#1a2328"/><circle cx="15.6" cy="5" r="4" fill="#56666e" stroke="#4a5a62" stroke-width="0.6"/><path d="M13.6 4 h1.4 l2.2 -1.8 v5.6 l-2.2 -1.8 h-1.4Z" fill="#e8edef"/></svg>
<div class="b" style="left:227.3px;top:434.8px;width:12.5px;height:7px;"></div>
<svg style="left:227.3px;top:434.8px" width="12.5" height="7" viewBox="0 0 12 7.75"><path d="M3 5.8 v-3.4 h2.6 v1.2 h3.4 v2.2Z M6 4.6 h2" fill="none" stroke="#39464c" stroke-width="0.7"/></svg>
<div class="b" style="left:118.8px;top:444.9px;width:12px;height:6.9px;"></div>
<div style="left:121.8px;top:447.4px;width:6px;height:1.8px;background:#222c31;"></div>
<div style="left:93px;top:449.9px;width:166px;height:0.8px;background:#3f4e56;"></div>
<div style="left:93px;top:450.5px;width:173px;height:9.5px;background:#1f2b31;"></div>
<svg style="left:260px;top:452px" width="6" height="6" viewBox="0 0 6 6"><path d="M0.6 1.4 h4.8 l-2.4 3Z" fill="#e8edef"/></svg>
<div style="left:96px;top:455px;width:1.2px;height:1.2px;background:#9aa6ab;"></div>
<div style="left:259px;top:35.5px;width:7px;height:415.5px;background:#06090a;"></div>
<div style="left:266px;top:20px;width:524px;height:16px;background:linear-gradient(#4d8aa4,#44809a);"></div>
<svg style="left:0;top:20px" width="800" height="16" viewBox="0 0 800 16"><path d="M277.7 1.5 v2.6" stroke="#cfe0e8" stroke-width="0.8"/><path d="M291.0 1.5 v6" stroke="#e3eef3" stroke-width="0.9"/><path d="M304.3 1.5 v2.6" stroke="#cfe0e8" stroke-width="0.8"/><path d="M317.6 1.5 v2.6" stroke="#cfe0e8" stroke-width="0.8"/><path d="M330.8 1.5 v2.6" stroke="#cfe0e8" stroke-width="0.8"/><path d="M344.1 1.5 v6" stroke="#e3eef3" stroke-width="0.9"/><path d="M357.4 1.5 v2.6" stroke="#cfe0e8" stroke-width="0.8"/><path d="M370.6 1.5 v2.6" stroke="#cfe0e8" stroke-width="0.8"/><path d="M383.9 1.5 v2.6" stroke="#cfe0e8" stroke-width="0.8"/><path d="M397.2 1.5 v6" stroke="#e3eef3" stroke-width="0.9"/><path d="M410.5 1.5 v2.6" stroke="#cfe0e8" stroke-width="0.8"/><path d="M423.8 1.5 v2.6" stroke="#cfe0e8" stroke-width="0.8"/><path d="M437.0 1.5 v2.6" stroke="#cfe0e8" stroke-width="0.8"/><path d="M450.3 1.5 v6" stroke="#e3eef3" stroke-width="0.9"/><path d="M463.6 1.5 v2.6" stroke="#cfe0e8" stroke-width="0.8"/><path d="M476.9 1.5 v2.6" stroke="#cfe0e8" stroke-width="0.8"/><path d="M490.1 1.5 v2.6" stroke="#cfe0e8" stroke-width="0.8"/><path d="M503.4 1.5 v6" stroke="#e3eef3" stroke-width="0.9"/><path d="M516.7 1.5 v2.6" stroke="#cfe0e8" stroke-width="0.8"/><path d="M530.0 1.5 v2.6" stroke="#cfe0e8" stroke-width="0.8"/><path d="M543.2 1.5 v2.6" stroke="#cfe0e8" stroke-width="0.8"/><path d="M556.5 1.5 v6" stroke="#e3eef3" stroke-width="0.9"/><path d="M569.8 1.5 v2.6" stroke="#cfe0e8" stroke-width="0.8"/><path d="M583.0 1.5 v2.6" stroke="#cfe0e8" stroke-width="0.8"/><path d="M596.3 1.5 v2.6" stroke="#cfe0e8" stroke-width="0.8"/><path d="M609.6 1.5 v6" stroke="#e3eef3" stroke-width="0.9"/><path d="M622.9 1.5 v2.6" stroke="#cfe0e8" stroke-width="0.8"/><path d="M636.2 1.5 v2.6" stroke="#cfe0e8" stroke-width="0.8"/><path d="M649.4 1.5 v2.6" stroke="#cfe0e8" stroke-width="0.8"/><path d="M662.7 1.5 v6" stroke="#e3eef3" stroke-width="0.9"/><path d="M676.0 1.5 v2.6" stroke="#cfe0e8" stroke-width="0.8"/><path d="M689.2 1.5 v2.6" stroke="#cfe0e8" stroke-width="0.8"/><path d="M702.5 1.5 v2.6" stroke="#cfe0e8" stroke-width="0.8"/><path d="M715.8 1.5 v6" stroke="#e3eef3" stroke-width="0.9"/><path d="M729.1 1.5 v2.6" stroke="#cfe0e8" stroke-width="0.8"/><path d="M742.4 1.5 v2.6" stroke="#cfe0e8" stroke-width="0.8"/><path d="M755.6 1.5 v2.6" stroke="#cfe0e8" stroke-width="0.8"/><path d="M768.9 1.5 v6" stroke="#e3eef3" stroke-width="0.9"/><path d="M782.2 1.5 v2.6" stroke="#cfe0e8" stroke-width="0.8"/><text x="290.6" y="14.1" font-size="8" font-weight="bold" fill="#f4f8fa" font-family="Liberation Sans, sans-serif">5</text><text x="343.7" y="14.1" font-size="8" font-weight="bold" fill="#f4f8fa" font-family="Liberation Sans, sans-serif">6</text><text x="396.8" y="14.1" font-size="8" font-weight="bold" fill="#f4f8fa" font-family="Liberation Sans, sans-serif">7</text><text x="449.9" y="14.1" font-size="8" font-weight="bold" fill="#f4f8fa" font-family="Liberation Sans, sans-serif">8</text><text x="503.0" y="14.1" font-size="8" font-weight="bold" fill="#f4f8fa" font-family="Liberation Sans, sans-serif">9</text><text x="556.1" y="14.1" font-size="8" font-weight="bold" fill="#f4f8fa" font-family="Liberation Sans, sans-serif">10</text><text x="609.2" y="14.1" font-size="8" font-weight="bold" fill="#f4f8fa" font-family="Liberation Sans, sans-serif">11</text><text x="662.3" y="14.1" font-size="8" font-weight="bold" fill="#f4f8fa" font-family="Liberation Sans, sans-serif">12</text><text x="715.4" y="14.1" font-size="8" font-weight="bold" fill="#f4f8fa" font-family="Liberation Sans, sans-serif">13</text><text x="768.5" y="14.1" font-size="8" font-weight="bold" fill="#f4f8fa" font-family="Liberation Sans, sans-serif">14</text></svg>
<div style="left:266px;top:36px;width:25px;height:33px;background:#6089bc;"></div>
<div style="left:291px;top:36px;width:424.8px;height:33px;background:#6b6da1;"></div>
<div style="left:715.8px;top:36px;width:74.2px;height:33px;background:#66528a;"></div>
<div style="left:715.3px;top:37px;width:0.8px;height:32px;background:#3c3560;"></div>
<div style="left:266px;top:35.5px;width:25px;height:1.2px;background:#10171b;"></div>
<div style="left:290.5px;top:35.5px;width:425.3px;height:2.2px;background:#fb0d12;"></div>
<div style="left:290.5px;top:37px;width:0.9px;height:32px;background:#e01a2a;"></div>
<svg style="left:290.5px;top:36px" width="52" height="9" viewBox="0 0 52 9"><path d="M0 0 H47 L41.5 8.2 H0Z" fill="#fb0d12"/></svg>
<div class="t" style="left:294.5px;top:36.48px;font-size:7.128px;letter-spacing:0;font-weight:normal;color:#ffdfe2;transform-origin:0 0;transform:scaleX(0.860);">L.A. Coasting</div>
<div style="left:715.8px;top:35.5px;width:74.2px;height:1.6px;background:#0a0d0f;"></div>
<svg style="left:715.8px;top:36px" width="40" height="9" viewBox="0 0 40 9"><path d="M0 0 H36 L30.5 8.2 H0Z" fill="#0a0d0f"/></svg>
<div class="t" style="left:718.7px;top:36.08px;font-size:7.128px;letter-spacing:0;font-weight:normal;color:#f1f3f4;transform-origin:0 0;transform:scaleX(0.819);">Paycheck</div>
<div style="left:266px;top:69px;width:524px;height:24px;background:#ddc4c9;"></div>
<svg style="left:0;top:69px" width="800" height="24" viewBox="0 0 800 24"><path d="M271.1 0 v24" stroke="#d6babf" stroke-width="0.5"/><path d="M277.7 0 v24" stroke="#d6babf" stroke-width="0.5"/><path d="M284.4 0 v24" stroke="#d6babf" stroke-width="0.5"/><path d="M291.0 0 v24" stroke="#c7acb3" stroke-width="0.8"/><path d="M297.6 0 v24" stroke="#d6babf" stroke-width="0.5"/><path d="M304.3 0 v24" stroke="#d6babf" stroke-width="0.5"/><path d="M310.9 0 v24" stroke="#d6babf" stroke-width="0.5"/><path d="M317.6 0 v24" stroke="#d6babf" stroke-width="0.5"/><path d="M324.2 0 v24" stroke="#d6babf" stroke-width="0.5"/><path d="M330.8 0 v24" stroke="#d6babf" stroke-width="0.5"/><path d="M337.5 0 v24" stroke="#d6babf" stroke-width="0.5"/><path d="M344.1 0 v24" stroke="#c7acb3" stroke-width="0.8"/><path d="M350.7 0 v24" stroke="#d6babf" stroke-width="0.5"/><path d="M357.4 0 v24" stroke="#d6babf" stroke-width="0.5"/><path d="M364.0 0 v24" stroke="#d6babf" stroke-width="0.5"/><path d="M370.6 0 v24" stroke="#d6babf" stroke-width="0.5"/><path d="M377.3 0 v24" stroke="#d6babf" stroke-width="0.5"/><path d="M383.9 0 v24" stroke="#d6babf" stroke-width="0.5"/><path d="M390.6 0 v24" stroke="#d6babf" stroke-width="0.5"/><path d="M397.2 0 v24" stroke="#c7acb3" stroke-width="0.8"/><path d="M403.8 0 v24" stroke="#d6babf" stroke-width="0.5"/><path d="M410.5 0 v24" stroke="#d6babf" stroke-width="0.5"/><path d="M417.1 0 v24" stroke="#d6babf" stroke-width="0.5"/><path d="M423.8 0 v24" stroke="#d6babf" stroke-width="0.5"/><path d="M430.4 0 v24" stroke="#d6babf" stroke-width="0.5"/><path d="M437.0 0 v24" stroke="#d6babf" stroke-width="0.5"/><path d="M443.7 0 v24" stroke="#d6babf" stroke-width="0.5"/><path d="M450.3 0 v24" stroke="#c7acb3" stroke-width="0.8"/><path d="M456.9 0 v24" stroke="#d6babf" stroke-width="0.5"/><path d="M463.6 0 v24" stroke="#d6babf" stroke-width="0.5"/><path d="M470.2 0 v24" stroke="#d6babf" stroke-width="0.5"/><path d="M476.9 0 v24" stroke="#d6babf" stroke-width="0.5"/><path d="M483.5 0 v24" stroke="#d6babf" stroke-width="0.5"/><path d="M490.1 0 v24" stroke="#d6babf" stroke-width="0.5"/><path d="M496.8 0 v24" stroke="#d6babf" stroke-width="0.5"/><path d="M503.4 0 v24" stroke="#c7acb3" stroke-width="0.8"/><path d="M510.0 0 v24" stroke="#d6babf" stroke-width="0.5"/><path d="M516.7 0 v24" stroke="#d6babf" stroke-width="0.5"/><path d="M523.3 0 v24" stroke="#d6babf" stroke-width="0.5"/><path d="M530.0 0 v24" stroke="#d6babf" stroke-width="0.5"/><path d="M536.6 0 v24" stroke="#d6babf" stroke-width="0.5"/><path d="M543.2 0 v24" stroke="#d6babf" stroke-width="0.5"/><path d="M549.9 0 v24" stroke="#d6babf" stroke-width="0.5"/><path d="M556.5 0 v24" stroke="#c7acb3" stroke-width="0.8"/><path d="M563.1 0 v24" stroke="#d6babf" stroke-width="0.5"/><path d="M569.8 0 v24" stroke="#d6babf" stroke-width="0.5"/><path d="M576.4 0 v24" stroke="#d6babf" stroke-width="0.5"/><path d="M583.0 0 v24" stroke="#d6babf" stroke-width="0.5"/><path d="M589.7 0 v24" stroke="#d6babf" stroke-width="0.5"/><path d="M596.3 0 v24" stroke="#d6babf" stroke-width="0.5"/><path d="M603.0 0 v24" stroke="#d6babf" stroke-width="0.5"/><path d="M609.6 0 v24" stroke="#c7acb3" stroke-width="0.8"/><path d="M616.2 0 v24" stroke="#d6babf" stroke-width="0.5"/><path d="M622.9 0 v24" stroke="#d6babf" stroke-width="0.5"/><path d="M629.5 0 v24" stroke="#d6babf" stroke-width="0.5"/><path d="M636.2 0 v24" stroke="#d6babf" stroke-width="0.5"/><path d="M642.8 0 v24" stroke="#d6babf" stroke-width="0.5"/><path d="M649.4 0 v24" stroke="#d6babf" stroke-width="0.5"/><path d="M656.1 0 v24" stroke="#d6babf" stroke-width="0.5"/><path d="M662.7 0 v24" stroke="#c7acb3" stroke-width="0.8"/><path d="M669.3 0 v24" stroke="#d6babf" stroke-width="0.5"/><path d="M676.0 0 v24" stroke="#d6babf" stroke-width="0.5"/><path d="M682.6 0 v24" stroke="#d6babf" stroke-width="0.5"/><path d="M689.2 0 v24" stroke="#d6babf" stroke-width="0.5"/><path d="M695.9 0 v24" stroke="#d6babf" stroke-width="0.5"/><path d="M702.5 0 v24" stroke="#d6babf" stroke-width="0.5"/><path d="M709.2 0 v24" stroke="#d6babf" stroke-width="0.5"/><path d="M715.8 0 v24" stroke="#c7acb3" stroke-width="0.8"/><path d="M722.4 0 v24" stroke="#d6babf" stroke-width="0.5"/><path d="M729.1 0 v24" stroke="#d6babf" stroke-width="0.5"/><path d="M735.7 0 v24" stroke="#d6babf" stroke-width="0.5"/><path d="M742.4 0 v24" stroke="#d6babf" stroke-width="0.5"/><path d="M749.0 0 v24" stroke="#d6babf" stroke-width="0.5"/><path d="M755.6 0 v24" stroke="#d6babf" stroke-width="0.5"/><path d="M762.3 0 v24" stroke="#d6babf" stroke-width="0.5"/><path d="M768.9 0 v24" stroke="#c7acb3" stroke-width="0.8"/><path d="M775.5 0 v24" stroke="#d6babf" stroke-width="0.5"/><path d="M782.2 0 v24" stroke="#d6babf" stroke-width="0.5"/><path d="M788.8 0 v24" stroke="#d6babf" stroke-width="0.5"/><path d="M266 4 H790" stroke="#d6b9bf" stroke-width="0.5"/><path d="M266 8.5 H790" stroke="#d6b9bf" stroke-width="0.5"/><path d="M266 17 H790" stroke="#d6b9bf" stroke-width="0.5"/><path d="M266 21 H790" stroke="#d6b9bf" stroke-width="0.5"/><path d="M266 12.6 H713.8 M718.3 12.6 H790" stroke="#ef5963" stroke-width="0.9"/><rect x="714.3" y="11.2" width="2.8" height="2.8" fill="#14143a"/></svg>
<div style="left:266px;top:92.6px;width:534px;height:1.6px;background:#141c20;"></div>
<div style="left:266px;top:94px;width:524px;height:356.5px;background:#cfdde2;"></div>
<svg style="left:0;top:94px" width="800" height="356.5" viewBox="0 0 800 356.5"><path d="M277.7 0 V356.5" stroke="#c7d6db" stroke-width="0.6"/><path d="M291.0 0 V356.5" stroke="#b9c9cf" stroke-width="0.9"/><path d="M304.3 0 V356.5" stroke="#c7d6db" stroke-width="0.6"/><path d="M317.6 0 V356.5" stroke="#c7d6db" stroke-width="0.6"/><path d="M330.8 0 V356.5" stroke="#c7d6db" stroke-width="0.6"/><path d="M344.1 0 V356.5" stroke="#b9c9cf" stroke-width="0.9"/><path d="M357.4 0 V356.5" stroke="#c7d6db" stroke-width="0.6"/><path d="M370.6 0 V356.5" stroke="#c7d6db" stroke-width="0.6"/><path d="M383.9 0 V356.5" stroke="#c7d6db" stroke-width="0.6"/><path d="M397.2 0 V356.5" stroke="#b9c9cf" stroke-width="0.9"/><path d="M410.5 0 V356.5" stroke="#c7d6db" stroke-width="0.6"/><path d="M423.8 0 V356.5" stroke="#c7d6db" stroke-width="0.6"/><path d="M437.0 0 V356.5" stroke="#c7d6db" stroke-width="0.6"/><path d="M450.3 0 V356.5" stroke="#b9c9cf" stroke-width="0.9"/><path d="M463.6 0 V356.5" stroke="#c7d6db" stroke-width="0.6"/><path d="M476.9 0 V356.5" stroke="#c7d6db" stroke-width="0.6"/><path d="M490.1 0 V356.5" stroke="#c7d6db" stroke-width="0.6"/><path d="M503.4 0 V356.5" stroke="#b9c9cf" stroke-width="0.9"/><path d="M516.7 0 V356.5" stroke="#c7d6db" stroke-width="0.6"/><path d="M530.0 0 V356.5" stroke="#c7d6db" stroke-width="0.6"/><path d="M543.2 0 V356.5" stroke="#c7d6db" stroke-width="0.6"/><path d="M556.5 0 V356.5" stroke="#b9c9cf" stroke-width="0.9"/><path d="M569.8 0 V356.5" stroke="#c7d6db" stroke-width="0.6"/><path d="M583.0 0 V356.5" stroke="#c7d6db" stroke-width="0.6"/><path d="M596.3 0 V356.5" stroke="#c7d6db" stroke-width="0.6"/><path d="M609.6 0 V356.5" stroke="#b9c9cf" stroke-width="0.9"/><path d="M622.9 0 V356.5" stroke="#c7d6db" stroke-width="0.6"/><path d="M636.2 0 V356.5" stroke="#c7d6db" stroke-width="0.6"/><path d="M649.4 0 V356.5" stroke="#c7d6db" stroke-width="0.6"/><path d="M662.7 0 V356.5" stroke="#b9c9cf" stroke-width="0.9"/><path d="M676.0 0 V356.5" stroke="#c7d6db" stroke-width="0.6"/><path d="M689.2 0 V356.5" stroke="#c7d6db" stroke-width="0.6"/><path d="M702.5 0 V356.5" stroke="#c7d6db" stroke-width="0.6"/><path d="M715.8 0 V356.5" stroke="#b9c9cf" stroke-width="0.9"/><path d="M729.1 0 V356.5" stroke="#c7d6db" stroke-width="0.6"/><path d="M742.4 0 V356.5" stroke="#c7d6db" stroke-width="0.6"/><path d="M755.6 0 V356.5" stroke="#c7d6db" stroke-width="0.6"/><path d="M768.9 0 V356.5" stroke="#b9c9cf" stroke-width="0.9"/><path d="M782.2 0 V356.5" stroke="#c7d6db" stroke-width="0.6"/><path d="M266 27 H790" stroke="#b4c5cc" stroke-width="0.8"/><path d="M266 61.5 H790" stroke="#b4c5cc" stroke-width="0.8"/><path d="M266 96 H790" stroke="#b4c5cc" stroke-width="0.8"/><path d="M266 130.5 H790" stroke="#b4c5cc" stroke-width="0.8"/><path d="M266 165 H790" stroke="#b4c5cc" stroke-width="0.8"/><path d="M266 199.5 H790" stroke="#b4c5cc" stroke-width="0.8"/><path d="M266 234 H790" stroke="#b4c5cc" stroke-width="0.8"/><path d="M266 268.5 H790" stroke="#b4c5cc" stroke-width="0.8"/><path d="M266 303 H790" stroke="#b4c5cc" stroke-width="0.8"/><path d="M266 337.5 H790" stroke="#b4c5cc" stroke-width="0.8"/></svg>
<div style="left:265.3px;top:94.7px;width:7.5px;height:25.6px;background:linear-gradient(#5fb0df,#4fa5d7);box-shadow:inset 0.8px 0.8px 0 rgba(255,255,255,.35),inset -0.8px -0.8px 0 #3f88b4;"></div>
<svg style="left:0;top:0" width="800" height="460" viewBox="0 0 800 460"><path d="M266.5 104.8 L266.5 104.5 L267.1 101.4 L267.7 99.8 L268.3 99.5 L268.9 101.5 L269.5 101.9 L270.1 103.3 L270.7 104.4 L271.3 104.5 L271.3 105.1 L270.7 105.2 L270.1 106.7 L269.5 107.9 L268.9 108.8 L268.3 109.5 L267.7 111.3 L267.1 109.4 L266.5 105.1Z" fill="#3f6f88" stroke="#2f566d" stroke-width="0.5" stroke-linejoin="round"/></svg>
<div style="left:274px;top:94.7px;width:17.5px;height:25.6px;background:linear-gradient(#5fb0df,#4fa5d7);box-shadow:inset 0.8px 0.8px 0 rgba(255,255,255,.35),inset -0.8px -0.8px 0 #3f88b4;"></div>
<svg style="left:0;top:0" width="800" height="460" viewBox="0 0 800 460"><path d="M275.2 104.8 L275.2 104.5 L275.8 104.5 L276.4 104.5 L277.0 104.2 L277.6 102.9 L278.2 100.8 L278.8 100.1 L279.4 97.9 L280.0 98.8 L280.6 100.2 L281.2 99.0 L281.8 100.5 L282.4 99.6 L283.0 100.7 L283.6 101.4 L284.2 101.3 L284.8 101.4 L285.4 101.6 L286.0 101.8 L286.6 102.3 L287.2 102.7 L287.8 103.3 L288.4 103.5 L289.0 104.2 L289.6 104.5 L290.2 104.5 L290.2 105.1 L289.6 105.1 L289.0 105.4 L288.4 106.1 L287.8 106.3 L287.2 107.1 L286.6 107.4 L286.0 107.6 L285.4 108.7 L284.8 108.6 L284.2 108.3 L283.6 108.4 L283.0 109.2 L282.4 109.9 L281.8 110.2 L281.2 110.5 L280.6 110.0 L280.0 111.0 L279.4 111.8 L278.8 110.1 L278.2 108.7 L277.6 107.3 L277.0 105.4 L276.4 105.1 L275.8 105.1 L275.2 105.1Z" fill="#3f6f88" stroke="#2f566d" stroke-width="0.5" stroke-linejoin="round"/></svg>
<div style="left:291.3px;top:156.7px;width:51.4px;height:32.7px;background:linear-gradient(#6cb6e2,#57a6d6 40%,#4a9bcd);box-shadow:inset 0.8px 0.8px 0 rgba(255,255,255,.35),inset -0.8px -0.8px 0 #3f88b4;"></div>
<svg style="left:0;top:0" width="800" height="460" viewBox="0 0 800 460"><path d="M292.5 173.0 L292.5 172.8 L293.1 172.8 L293.7 172.8 L294.3 172.8 L294.9 172.8 L295.5 172.8 L296.1 172.8 L296.7 172.8 L297.3 172.8 L297.9 171.7 L298.5 170.8 L299.1 170.1 L299.7 170.3 L300.3 170.9 L300.9 171.3 L301.5 171.8 L302.1 172.7 L302.7 171.4 L303.3 170.5 L303.9 170.5 L304.5 169.7 L305.1 170.4 L305.7 170.9 L306.3 171.6 L306.9 172.3 L307.5 172.8 L308.1 172.0 L308.7 171.2 L309.3 171.4 L309.9 171.5 L310.5 172.3 L311.1 172.8 L311.7 172.6 L312.3 171.6 L312.9 170.9 L313.5 170.7 L314.1 171.3 L314.7 172.3 L315.3 172.8 L315.9 172.1 L316.5 171.5 L317.1 171.3 L317.7 172.2 L318.3 172.7 L318.9 172.8 L319.5 170.3 L320.1 168.4 L320.7 168.9 L321.3 169.2 L321.9 170.2 L322.5 171.1 L323.1 171.8 L323.7 170.8 L324.3 169.6 L324.9 169.5 L325.5 170.2 L326.1 169.5 L326.7 169.8 L327.3 170.1 L327.9 169.9 L328.5 169.9 L329.1 169.7 L329.7 169.8 L330.3 170.1 L330.9 171.1 L331.5 172.2 L332.1 171.7 L332.7 171.1 L333.3 170.5 L333.9 170.3 L334.5 170.6 L335.1 170.6 L335.7 170.7 L336.3 170.3 L336.9 170.1 L337.5 170.2 L338.1 170.9 L338.7 171.1 L339.3 172.2 L339.9 172.8 L340.5 172.8 L341.1 172.8 L341.1 173.2 L340.5 173.2 L339.9 173.2 L339.3 173.8 L338.7 174.9 L338.1 175.3 L337.5 175.3 L336.9 175.7 L336.3 175.2 L335.7 175.1 L335.1 175.5 L334.5 175.2 L333.9 175.0 L333.3 175.9 L332.7 175.1 L332.1 174.3 L331.5 173.7 L330.9 174.8 L330.3 175.9 L329.7 176.2 L329.1 175.6 L328.5 176.0 L327.9 176.3 L327.3 176.6 L326.7 176.1 L326.1 178.1 L325.5 175.8 L324.9 176.4 L324.3 176.5 L323.7 174.9 L323.1 174.2 L322.5 175.1 L321.9 176.4 L321.3 177.1 L320.7 176.3 L320.1 177.1 L319.5 175.3 L318.9 173.2 L318.3 173.3 L317.7 174.2 L317.1 174.6 L316.5 174.9 L315.9 174.1 L315.3 173.2 L314.7 173.7 L314.1 174.4 L313.5 174.9 L312.9 175.0 L312.3 174.7 L311.7 173.4 L311.1 173.2 L310.5 173.7 L309.9 174.3 L309.3 174.7 L308.7 174.6 L308.1 174.0 L307.5 173.2 L306.9 173.6 L306.3 174.7 L305.7 175.5 L305.1 175.5 L304.5 175.6 L303.9 175.8 L303.3 175.7 L302.7 174.3 L302.1 173.4 L301.5 174.6 L300.9 175.0 L300.3 174.9 L299.7 175.4 L299.1 175.9 L298.5 175.0 L297.9 174.4 L297.3 173.2 L296.7 173.2 L296.1 173.2 L295.5 173.2 L294.9 173.2 L294.3 173.2 L293.7 173.2 L293.1 173.2 L292.5 173.2Z" fill="#3f6f88" stroke="#2f566d" stroke-width="0.5" stroke-linejoin="round"/></svg>
<div class="t" style="left:293px;top:157.58px;font-size:7.128px;letter-spacing:0;font-weight:bold;-webkit-text-stroke:0.2px;color:#0c1418;transform-origin:0 0;transform:scaleX(0.886);">RnB Main Vox</div>
<svg style="left:335.2px;top:158.5px" width="6" height="7" viewBox="0 0 6 7"><rect x="0.8" y="2.8" width="4.2" height="3.2" fill="#2a3640"/><path d="M1.7 2.8 v-1 a1.2 1.2 0 0 1 2.4 0 v1" fill="none" stroke="#2a3640" stroke-width="0.8"/></svg>
<div style="left:348.4px;top:156.7px;width:11.6px;height:32.7px;background:linear-gradient(#6cb6e2,#57a6d6 40%,#4a9bcd);box-shadow:inset 0.8px 0.8px 0 rgba(255,255,255,.35),inset -0.8px -0.8px 0 #3f88b4;"></div>
<svg style="left:0;top:0" width="800" height="460" viewBox="0 0 800 460"><path d="M349.6 173.5 L349.6 173.2 L350.2 173.2 L350.8 170.9 L351.4 168.3 L352.0 167.5 L352.6 165.9 L353.2 167.5 L353.8 168.2 L354.4 167.1 L355.0 166.7 L355.6 168.6 L356.2 168.5 L356.8 168.8 L357.4 170.0 L358.0 172.6 L358.6 173.2 L358.6 173.8 L358.0 174.2 L357.4 177.3 L356.8 179.5 L356.2 181.9 L355.6 178.8 L355.0 178.4 L354.4 179.0 L353.8 178.9 L353.2 179.7 L352.6 179.4 L352.0 183.9 L351.4 177.9 L350.8 176.0 L350.2 173.8 L349.6 173.8Z" fill="#3f6f88" stroke="#2f566d" stroke-width="0.5" stroke-linejoin="round"/></svg>
<div class="t" style="left:349.6px;top:157.58px;font-size:7.128px;letter-spacing:0;font-weight:bold;-webkit-text-stroke:0.2px;color:#0c1418;transform-origin:0 0;transform:scaleX(0.656);">v</div>
<svg style="left:352.5px;top:158.5px" width="6" height="7" viewBox="0 0 6 7"><rect x="0.8" y="2.8" width="4.2" height="3.2" fill="#2a3640"/><path d="M1.7 2.8 v-1 a1.2 1.2 0 0 1 2.4 0 v1" fill="none" stroke="#2a3640" stroke-width="0.8"/></svg>
<div style="left:397.4px;top:156.7px;width:41.6px;height:32.7px;background:linear-gradient(#6cb6e2,#57a6d6 40%,#4a9bcd);box-shadow:inset 0.8px 0.8px 0 rgba(255,255,255,.35),inset -0.8px -0.8px 0 #3f88b4;"></div>
<svg style="left:0;top:0" width="800" height="460" viewBox="0 0 800 460"><path d="M398.6 173.0 L398.6 172.8 L399.2 172.8 L399.8 172.8 L400.4 170.6 L401.0 170.1 L401.6 170.2 L402.2 170.8 L402.8 171.7 L403.4 172.1 L404.0 170.2 L404.6 169.6 L405.2 169.0 L405.8 169.8 L406.4 169.7 L407.0 169.9 L407.6 169.5 L408.2 170.0 L408.8 168.9 L409.4 170.2 L410.0 171.2 L410.6 171.7 L411.2 169.0 L411.8 169.0 L412.4 168.2 L413.0 168.9 L413.6 169.3 L414.2 171.1 L414.8 172.2 L415.4 172.0 L416.0 170.7 L416.6 170.9 L417.2 170.9 L417.8 171.6 L418.4 171.9 L419.0 172.8 L419.6 172.0 L420.2 170.6 L420.8 170.2 L421.4 169.9 L422.0 169.7 L422.6 170.1 L423.2 171.0 L423.8 171.8 L424.4 172.8 L425.0 171.1 L425.6 170.5 L426.2 169.5 L426.8 170.3 L427.4 170.9 L428.0 171.2 L428.6 172.2 L429.2 172.8 L429.8 171.7 L430.4 170.4 L431.0 169.4 L431.6 169.0 L432.2 168.6 L432.8 168.4 L433.4 168.0 L434.0 168.4 L434.6 169.2 L435.2 168.2 L435.8 168.6 L436.4 170.8 L437.0 172.7 L437.6 172.8 L437.6 173.2 L437.0 173.3 L436.4 175.2 L435.8 176.6 L435.2 177.4 L434.6 176.9 L434.0 177.9 L433.4 177.3 L432.8 178.0 L432.2 176.6 L431.6 176.8 L431.0 177.4 L430.4 176.0 L429.8 174.1 L429.2 173.2 L428.6 174.0 L428.0 175.2 L427.4 175.2 L426.8 175.8 L426.2 175.7 L425.6 175.6 L425.0 175.0 L424.4 173.2 L423.8 174.5 L423.2 175.5 L422.6 175.6 L422.0 176.3 L421.4 176.5 L420.8 176.3 L420.2 175.7 L419.6 174.2 L419.0 173.2 L418.4 173.9 L417.8 174.6 L417.2 175.0 L416.6 175.3 L416.0 174.7 L415.4 174.2 L414.8 173.6 L414.2 175.4 L413.6 176.0 L413.0 177.0 L412.4 177.5 L411.8 177.6 L411.2 176.6 L410.6 174.5 L410.0 174.4 L409.4 176.3 L408.8 176.9 L408.2 176.2 L407.6 177.0 L407.0 176.9 L406.4 176.3 L405.8 176.7 L405.2 177.2 L404.6 176.9 L404.0 175.6 L403.4 173.9 L402.8 174.4 L402.2 175.0 L401.6 175.8 L401.0 176.2 L400.4 175.0 L399.8 173.2 L399.2 173.2 L398.6 173.2Z" fill="#3f6f88" stroke="#2f566d" stroke-width="0.5" stroke-linejoin="round"/></svg>
<div class="t" style="left:399.4px;top:157.58px;font-size:7.128px;letter-spacing:0;font-weight:bold;-webkit-text-stroke:0.2px;color:#0c1418;transform-origin:0 0;transform:scaleX(0.841);">Audio 25_0</div>
<svg style="left:431.5px;top:158.5px" width="6" height="7" viewBox="0 0 6 7"><rect x="0.8" y="2.8" width="4.2" height="3.2" fill="#2a3640"/><path d="M1.7 2.8 v-1 a1.2 1.2 0 0 1 2.4 0 v1" fill="none" stroke="#2a3640" stroke-width="0.8"/></svg>
<div style="left:491.7px;top:156.7px;width:64.2px;height:32.7px;background:linear-gradient(#6cb6e2,#57a6d6 40%,#4a9bcd);box-shadow:inset 0.8px 0.8px 0 rgba(255,255,255,.35),inset -0.8px -0.8px 0 #3f88b4;"></div>
<svg style="left:0;top:0" width="800" height="460" viewBox="0 0 800 460"><path d="M492.9 173.0 L492.9 172.8 L493.5 172.8 L494.1 172.8 L494.7 172.8 L495.3 171.0 L495.9 169.5 L496.5 168.9 L497.1 168.3 L497.7 168.7 L498.3 168.0 L498.9 169.2 L499.5 168.9 L500.1 169.9 L500.7 170.5 L501.3 170.9 L501.9 171.9 L502.5 172.8 L503.1 172.8 L503.7 172.8 L504.3 172.3 L504.9 171.8 L505.5 171.5 L506.1 170.9 L506.7 171.0 L507.3 170.6 L507.9 170.7 L508.5 171.3 L509.1 171.1 L509.7 171.1 L510.3 171.1 L510.9 170.9 L511.5 170.7 L512.1 171.0 L512.7 171.3 L513.3 171.6 L513.9 172.2 L514.5 172.8 L515.1 172.8 L515.7 172.8 L516.3 172.8 L516.9 172.2 L517.5 170.8 L518.1 170.3 L518.7 169.9 L519.3 170.6 L519.9 171.5 L520.5 172.1 L521.1 172.8 L521.7 172.8 L522.3 172.8 L522.9 172.8 L523.5 172.8 L524.1 172.8 L524.7 172.0 L525.3 171.4 L525.9 171.7 L526.5 172.2 L527.1 172.8 L527.7 172.8 L528.3 172.8 L528.9 172.8 L529.5 172.8 L530.1 172.8 L530.7 171.7 L531.3 171.1 L531.9 169.7 L532.5 169.5 L533.1 170.1 L533.7 170.1 L534.3 170.4 L534.9 171.4 L535.5 172.0 L536.1 172.8 L536.7 172.8 L537.3 172.4 L537.9 171.7 L538.5 171.5 L539.1 170.7 L539.7 170.4 L540.3 170.1 L540.9 170.6 L541.5 170.3 L542.1 170.3 L542.7 170.3 L543.3 169.8 L543.9 170.1 L544.5 170.4 L545.1 170.4 L545.7 170.1 L546.3 169.9 L546.9 170.2 L547.5 170.0 L548.1 170.2 L548.7 170.2 L549.3 170.4 L549.9 170.8 L550.5 171.2 L551.1 171.2 L551.7 172.0 L552.3 172.8 L552.9 172.8 L553.5 172.8 L554.1 172.8 L554.1 173.2 L553.5 173.2 L552.9 173.2 L552.3 173.2 L551.7 174.1 L551.1 174.6 L550.5 175.3 L549.9 175.1 L549.3 175.7 L548.7 175.7 L548.1 176.1 L547.5 176.1 L546.9 175.6 L546.3 176.0 L545.7 175.4 L545.1 175.5 L544.5 175.6 L543.9 175.5 L543.3 175.9 L542.7 176.4 L542.1 176.0 L541.5 175.9 L540.9 175.8 L540.3 175.5 L539.7 175.5 L539.1 174.6 L538.5 174.6 L537.9 174.3 L537.3 173.5 L536.7 173.2 L536.1 173.2 L535.5 174.4 L534.9 175.0 L534.3 175.3 L533.7 175.3 L533.1 175.7 L532.5 175.6 L531.9 176.2 L531.3 175.5 L530.7 174.4 L530.1 173.2 L529.5 173.2 L528.9 173.2 L528.3 173.2 L527.7 173.2 L527.1 173.2 L526.5 173.8 L525.9 174.2 L525.3 175.1 L524.7 173.9 L524.1 173.2 L523.5 173.2 L522.9 173.2 L522.3 173.2 L521.7 173.2 L521.1 173.2 L520.5 173.8 L519.9 174.8 L519.3 175.2 L518.7 175.6 L518.1 175.8 L517.5 174.8 L516.9 173.7 L516.3 173.2 L515.7 173.2 L515.1 173.2 L514.5 173.2 L513.9 173.7 L513.3 174.3 L512.7 174.9 L512.1 175.0 L511.5 175.1 L510.9 175.2 L510.3 175.3 L509.7 175.1 L509.1 175.3 L508.5 174.8 L507.9 174.9 L507.3 175.1 L506.7 174.7 L506.1 175.0 L505.5 174.6 L504.9 174.3 L504.3 173.7 L503.7 173.2 L503.1 173.2 L502.5 173.2 L501.9 174.4 L501.3 174.5 L500.7 175.3 L500.1 176.3 L499.5 177.0 L498.9 177.4 L498.3 177.1 L497.7 179.2 L497.1 177.1 L496.5 176.7 L495.9 176.2 L495.3 174.7 L494.7 173.2 L494.1 173.2 L493.5 173.2 L492.9 173.2Z" fill="#3f6f88" stroke="#2f566d" stroke-width="0.5" stroke-linejoin="round"/></svg>
<div class="t" style="left:494.2px;top:157.58px;font-size:7.128px;letter-spacing:0;font-weight:bold;-webkit-text-stroke:0.2px;color:#0c1418;transform-origin:0 0;transform:scaleX(0.845);">Audio 25_07</div>
<svg style="left:548.4px;top:158.5px" width="6" height="7" viewBox="0 0 6 7"><rect x="0.8" y="2.8" width="4.2" height="3.2" fill="#2a3640"/><path d="M1.7 2.8 v-1 a1.2 1.2 0 0 1 2.4 0 v1" fill="none" stroke="#2a3640" stroke-width="0.8"/></svg>
<svg style="left:538.9px;top:159.2px" width="9" height="6" viewBox="0 0 9 6"><path d="M0.6 3 l1.4 -2 l1.6 3.6 l1.6 -3.6 l1.4 2 h1.4" fill="none" stroke="#1d2a32" stroke-width="0.7"/></svg>
<div style="left:555.9px;top:156.7px;width:59.1px;height:32.7px;background:linear-gradient(#6cb6e2,#57a6d6 40%,#4a9bcd);box-shadow:inset 0.8px 0.8px 0 rgba(255,255,255,.35),inset -0.8px -0.8px 0 #3f88b4;"></div>
<svg style="left:0;top:0" width="800" height="460" viewBox="0 0 800 460"><path d="M557.1 173.0 L557.1 172.8 L557.7 172.8 L558.3 171.6 L558.9 170.7 L559.5 169.5 L560.1 169.6 L560.7 170.3 L561.3 170.2 L561.9 171.3 L562.5 172.4 L563.1 172.8 L563.7 172.8 L564.3 170.5 L564.9 169.4 L565.5 168.0 L566.1 169.5 L566.7 169.5 L567.3 171.4 L567.9 172.8 L568.5 172.8 L569.1 172.8 L569.7 172.3 L570.3 171.0 L570.9 170.7 L571.5 169.9 L572.1 169.7 L572.7 170.7 L573.3 171.1 L573.9 171.7 L574.5 172.6 L575.1 172.8 L575.7 172.8 L576.3 172.8 L576.9 172.1 L577.5 171.9 L578.1 171.8 L578.7 171.8 L579.3 172.1 L579.9 172.4 L580.5 172.8 L581.1 172.8 L581.7 172.8 L582.3 172.8 L582.9 172.8 L583.5 172.3 L584.1 171.4 L584.7 170.8 L585.3 170.9 L585.9 170.4 L586.5 170.9 L587.1 171.3 L587.7 172.1 L588.3 172.8 L588.9 172.8 L589.5 172.8 L590.1 172.5 L590.7 171.5 L591.3 171.1 L591.9 171.1 L592.5 171.2 L593.1 171.6 L593.7 172.6 L594.3 172.8 L594.9 172.8 L595.5 172.8 L596.1 172.1 L596.7 171.0 L597.3 171.0 L597.9 170.3 L598.5 170.7 L599.1 171.0 L599.7 170.8 L600.3 171.6 L600.9 172.2 L601.5 172.8 L602.1 172.8 L602.7 172.8 L603.3 172.8 L603.9 172.8 L604.5 172.8 L605.1 172.8 L605.7 171.5 L606.3 170.3 L606.9 169.9 L607.5 169.5 L608.1 170.1 L608.7 170.4 L609.3 170.4 L609.9 170.8 L610.5 171.4 L611.1 171.8 L611.7 172.3 L612.3 172.6 L612.9 172.8 L613.5 172.8 L613.5 173.2 L612.9 173.2 L612.3 173.4 L611.7 173.9 L611.1 174.2 L610.5 174.6 L609.9 174.8 L609.3 175.3 L608.7 175.9 L608.1 175.5 L607.5 176.8 L606.9 176.8 L606.3 177.6 L605.7 174.8 L605.1 173.2 L604.5 173.2 L603.9 173.2 L603.3 173.2 L602.7 173.2 L602.1 173.2 L601.5 173.2 L600.9 173.9 L600.3 174.4 L599.7 174.9 L599.1 175.3 L598.5 175.2 L597.9 175.5 L597.3 175.4 L596.7 174.6 L596.1 174.2 L595.5 173.2 L594.9 173.2 L594.3 173.2 L593.7 173.4 L593.1 174.3 L592.5 175.1 L591.9 175.4 L591.3 175.2 L590.7 174.7 L590.1 173.5 L589.5 173.2 L588.9 173.2 L588.3 173.2 L587.7 173.9 L587.1 174.4 L586.5 176.2 L585.9 175.5 L585.3 175.3 L584.7 175.6 L584.1 175.0 L583.5 173.9 L582.9 173.2 L582.3 173.2 L581.7 173.2 L581.1 173.2 L580.5 173.2 L579.9 173.8 L579.3 173.9 L578.7 174.4 L578.1 174.2 L577.5 174.1 L576.9 173.6 L576.3 173.2 L575.7 173.2 L575.1 173.2 L574.5 173.4 L573.9 174.3 L573.3 174.9 L572.7 175.6 L572.1 175.9 L571.5 176.4 L570.9 176.0 L570.3 176.1 L569.7 173.5 L569.1 173.2 L568.5 173.2 L567.9 173.2 L567.3 174.4 L566.7 176.6 L566.1 177.0 L565.5 177.8 L564.9 176.8 L564.3 175.1 L563.7 173.2 L563.1 173.2 L562.5 173.6 L561.9 174.5 L561.3 175.6 L560.7 175.7 L560.1 176.8 L559.5 176.5 L558.9 175.3 L558.3 175.2 L557.7 173.2 L557.1 173.2Z" fill="#3f6f88" stroke="#2f566d" stroke-width="0.5" stroke-linejoin="round"/></svg>
<div class="t" style="left:558px;top:157.58px;font-size:7.128px;letter-spacing:0;font-weight:bold;-webkit-text-stroke:0.2px;color:#0c1418;transform-origin:0 0;transform:scaleX(0.843);">Audio 25_08</div>
<svg style="left:607.5px;top:158.5px" width="6" height="7" viewBox="0 0 6 7"><rect x="0.8" y="2.8" width="4.2" height="3.2" fill="#2a3640"/><path d="M1.7 2.8 v-1 a1.2 1.2 0 0 1 2.4 0 v1" fill="none" stroke="#2a3640" stroke-width="0.8"/></svg>
<svg style="left:0;top:0" width="800" height="460" viewBox="0 0 800 460"><path d="M266.5 140.5 L266.5 140.3 L267.1 137.1 L267.7 135.5 L268.3 135.2 L268.9 137.2 L269.5 137.6 L270.1 139.0 L270.7 140.1 L271.3 140.3 L271.3 140.7 L270.7 140.9 L270.1 142.4 L269.5 143.6 L268.9 144.5 L268.3 145.2 L267.7 147.0 L267.1 145.1 L266.5 140.7Z" fill="#d4e1e6" stroke="#e7eef1" stroke-width="0.7" stroke-linejoin="round"/></svg>
<svg style="left:0;top:0" width="800" height="460" viewBox="0 0 800 460"><path d="M275.2 140.5 L275.2 140.3 L275.8 140.3 L276.4 140.3 L277.0 139.7 L277.6 138.4 L278.2 136.3 L278.8 135.6 L279.4 133.7 L280.0 134.5 L280.6 136.0 L281.2 134.8 L281.8 136.3 L282.4 135.4 L283.0 136.5 L283.6 137.2 L284.2 137.2 L284.8 137.2 L285.4 137.6 L286.0 137.7 L286.6 138.3 L287.2 138.7 L287.8 139.3 L288.4 139.6 L289.0 140.3 L289.6 140.3 L289.6 140.7 L289.0 140.7 L288.4 141.4 L287.8 141.7 L287.2 142.4 L286.6 142.8 L286.0 143.1 L285.4 144.1 L284.8 144.0 L284.2 143.8 L283.6 144.0 L283.0 144.8 L282.4 145.5 L281.8 145.8 L281.2 146.0 L280.6 145.6 L280.0 146.6 L279.4 147.4 L278.8 146.1 L278.2 144.7 L277.6 143.2 L277.0 141.2 L276.4 140.7 L275.8 140.7 L275.2 140.7Z" fill="#d4e1e6" stroke="#e7eef1" stroke-width="0.7" stroke-linejoin="round"/></svg>
<svg style="left:0;top:0" width="800" height="460" viewBox="0 0 800 460"><path d="M292.2 207.4 L292.2 207.2 L292.8 207.2 L293.4 207.2 L294.0 207.2 L294.6 207.2 L295.2 207.2 L295.8 207.2 L296.4 207.2 L297.0 207.2 L297.6 206.1 L298.2 205.2 L298.8 204.6 L299.4 204.7 L300.0 205.3 L300.6 205.6 L301.2 206.1 L301.8 207.0 L302.4 206.0 L303.0 205.0 L303.6 204.9 L304.2 204.1 L304.8 204.8 L305.4 205.2 L306.0 205.9 L306.6 206.6 L307.2 207.2 L307.8 206.5 L308.4 205.6 L309.0 205.8 L309.6 205.8 L310.2 206.6 L310.8 207.2 L311.4 207.2 L312.0 206.2 L312.6 205.3 L313.2 205.0 L313.8 205.5 L314.4 206.4 L315.0 207.2 L315.6 206.7 L316.2 206.0 L316.8 205.7 L317.4 206.4 L318.0 206.9 L318.6 207.2 L319.2 205.6 L319.8 202.5 L320.4 203.3 L321.0 203.8 L321.6 204.7 L322.2 205.3 L322.8 205.8 L323.4 205.3 L324.0 204.4 L324.6 204.6 L325.2 203.9 L325.8 203.9 L326.4 204.5 L327.0 204.3 L327.6 204.1 L328.2 204.1 L328.8 204.2 L329.4 204.3 L330.0 204.4 L330.6 205.2 L331.2 205.9 L331.8 206.8 L332.4 205.8 L333.0 204.8 L333.6 205.0 L334.2 205.0 L334.8 205.2 L335.4 204.7 L336.0 204.5 L336.6 204.5 L337.2 205.2 L337.8 204.6 L338.4 205.3 L339.0 206.1 L339.6 207.2 L340.2 207.2 L340.8 207.2 L341.4 207.2 L341.4 207.6 L340.8 207.6 L340.2 207.6 L339.6 207.6 L339.0 208.9 L338.4 209.3 L337.8 210.2 L337.2 209.8 L336.6 209.7 L336.0 210.1 L335.4 209.6 L334.8 209.4 L334.2 209.9 L333.6 209.6 L333.0 209.3 L332.4 209.3 L331.8 208.1 L331.2 208.9 L330.6 209.2 L330.0 210.1 L329.4 210.6 L328.8 210.6 L328.2 210.0 L327.6 210.7 L327.0 210.7 L326.4 211.0 L325.8 210.7 L325.2 212.5 L324.6 210.2 L324.0 210.3 L323.4 209.6 L322.8 208.8 L322.2 209.6 L321.6 210.4 L321.0 211.8 L320.4 211.9 L319.8 211.3 L319.2 209.0 L318.6 207.6 L318.0 207.8 L317.4 208.7 L316.8 209.0 L316.2 209.2 L315.6 208.2 L315.0 207.6 L314.4 208.4 L313.8 208.9 L313.2 209.4 L312.6 209.3 L312.0 208.9 L311.4 207.6 L310.8 207.6 L310.2 208.2 L309.6 208.7 L309.0 209.1 L308.4 208.9 L307.8 208.3 L307.2 207.6 L306.6 208.1 L306.0 209.3 L305.4 209.9 L304.8 210.0 L304.2 210.0 L303.6 210.1 L303.0 210.0 L302.4 208.6 L301.8 207.9 L301.2 209.1 L300.6 209.4 L300.0 209.4 L299.4 209.8 L298.8 210.2 L298.2 209.4 L297.6 208.7 L297.0 207.6 L296.4 207.6 L295.8 207.6 L295.2 207.6 L294.6 207.6 L294.0 207.6 L293.4 207.6 L292.8 207.6 L292.2 207.6Z" fill="#d4e1e6" stroke="#e7eef1" stroke-width="0.7" stroke-linejoin="round"/></svg>
<svg style="left:0;top:0" width="800" height="460" viewBox="0 0 800 460"><path d="M349.6 207.4 L349.6 207.2 L350.2 207.2 L350.8 204.8 L351.4 202.2 L352.0 201.4 L352.6 199.8 L353.2 201.4 L353.8 202.1 L354.4 201.0 L355.0 200.6 L355.6 202.5 L356.2 202.4 L356.8 202.7 L357.4 203.9 L358.0 206.5 L358.6 207.2 L358.6 207.6 L358.0 208.1 L357.4 211.2 L356.8 213.4 L356.2 215.8 L355.6 212.7 L355.0 212.3 L354.4 212.9 L353.8 212.8 L353.2 213.6 L352.6 213.3 L352.0 217.8 L351.4 211.8 L350.8 209.9 L350.2 207.6 L349.6 207.6Z" fill="#d4e1e6" stroke="#e7eef1" stroke-width="0.7" stroke-linejoin="round"/></svg>
<svg style="left:0;top:0" width="800" height="460" viewBox="0 0 800 460"><path d="M398.6 207.4 L398.6 207.2 L399.2 207.2 L399.8 207.2 L400.4 205.2 L401.0 204.5 L401.6 204.7 L402.2 204.9 L402.8 206.2 L403.4 206.5 L404.0 205.0 L404.6 203.6 L405.2 203.9 L405.8 204.1 L406.4 204.3 L407.0 203.9 L407.6 204.4 L408.2 203.3 L408.8 203.9 L409.4 204.2 L410.0 205.9 L410.6 205.8 L411.2 204.3 L411.8 202.8 L412.4 203.0 L413.0 202.8 L413.6 204.5 L414.2 205.1 L414.8 206.7 L415.4 206.2 L416.0 205.6 L416.6 205.2 L417.2 205.6 L417.8 205.5 L418.4 206.4 L419.0 207.2 L419.6 206.4 L420.2 205.2 L420.8 204.6 L421.4 204.3 L422.0 204.0 L422.6 204.7 L423.2 205.5 L423.8 206.0 L424.4 207.2 L425.0 205.6 L425.6 204.4 L426.2 204.6 L426.8 204.9 L427.4 204.9 L428.0 205.8 L428.6 206.3 L429.2 207.2 L429.8 206.2 L430.4 205.0 L431.0 203.5 L431.6 203.0 L432.2 203.1 L432.8 202.4 L433.4 202.8 L434.0 203.5 L434.6 202.6 L435.2 202.4 L435.8 204.1 L436.4 205.1 L437.0 207.1 L437.6 207.2 L437.6 207.6 L437.0 207.7 L436.4 210.2 L435.8 210.7 L435.2 211.5 L434.6 211.8 L434.0 211.3 L433.4 212.3 L432.8 211.7 L432.2 212.0 L431.6 211.0 L431.0 211.2 L430.4 210.4 L429.8 208.8 L429.2 207.6 L428.6 208.4 L428.0 209.3 L427.4 210.3 L426.8 210.0 L426.2 210.3 L425.6 209.7 L425.0 209.3 L424.4 207.6 L423.8 208.8 L423.2 209.9 L422.6 210.7 L422.0 210.4 L421.4 210.5 L420.8 210.6 L420.2 209.9 L419.6 208.5 L419.0 207.6 L418.4 208.5 L417.8 209.1 L417.2 209.4 L416.6 209.6 L416.0 209.4 L415.4 208.3 L414.8 208.3 L414.2 209.3 L413.6 211.0 L413.0 211.1 L412.4 211.8 L411.8 211.6 L411.2 211.0 L410.6 208.9 L410.0 209.1 L409.4 210.0 L408.8 211.6 L408.2 211.3 L407.6 210.6 L407.0 211.4 L406.4 211.3 L405.8 210.7 L405.2 211.4 L404.6 211.4 L404.0 210.1 L403.4 208.2 L402.8 208.7 L402.2 210.0 L401.6 209.9 L401.0 210.2 L400.4 209.8 L399.8 207.6 L399.2 207.6 L398.6 207.6Z" fill="#d4e1e6" stroke="#e7eef1" stroke-width="0.7" stroke-linejoin="round"/></svg>
<svg style="left:0;top:0" width="800" height="460" viewBox="0 0 800 460"><path d="M492.9 207.4 L492.9 207.2 L493.5 207.2 L494.1 207.2 L494.7 207.2 L495.3 205.4 L495.9 203.9 L496.5 203.3 L497.1 202.7 L497.7 203.1 L498.3 202.4 L498.9 203.6 L499.5 203.3 L500.1 204.3 L500.7 204.9 L501.3 205.3 L501.9 206.3 L502.5 207.2 L503.1 207.2 L503.7 207.2 L504.3 206.7 L504.9 206.2 L505.5 205.9 L506.1 205.3 L506.7 205.4 L507.3 205.0 L507.9 205.1 L508.5 205.7 L509.1 205.5 L509.7 205.5 L510.3 205.5 L510.9 205.3 L511.5 205.1 L512.1 205.4 L512.7 205.7 L513.3 206.0 L513.9 206.6 L514.5 207.2 L515.1 207.2 L515.7 207.2 L516.3 207.2 L516.9 206.6 L517.5 205.2 L518.1 204.7 L518.7 204.3 L519.3 205.0 L519.9 205.9 L520.5 206.5 L521.1 207.2 L521.7 207.2 L522.3 207.2 L522.9 207.2 L523.5 207.2 L524.1 207.2 L524.7 206.4 L525.3 205.8 L525.9 206.1 L526.5 206.6 L527.1 207.2 L527.7 207.2 L528.3 207.2 L528.9 207.2 L529.5 207.2 L530.1 207.2 L530.7 206.1 L531.3 205.5 L531.9 204.1 L532.5 203.9 L533.1 204.5 L533.7 204.5 L534.3 204.8 L534.9 205.8 L535.5 206.4 L536.1 207.2 L536.7 207.2 L537.3 206.8 L537.9 206.1 L538.5 205.9 L539.1 205.1 L539.7 204.8 L540.3 204.5 L540.9 205.0 L541.5 204.7 L542.1 204.7 L542.7 204.7 L543.3 204.2 L543.9 204.5 L544.5 204.8 L545.1 204.8 L545.7 204.5 L546.3 204.3 L546.9 204.6 L547.5 204.4 L548.1 204.6 L548.7 204.6 L549.3 204.8 L549.9 205.2 L550.5 205.6 L551.1 205.6 L551.7 206.4 L552.3 207.2 L552.9 207.2 L553.5 207.2 L554.1 207.2 L554.1 207.6 L553.5 207.6 L552.9 207.6 L552.3 207.6 L551.7 208.5 L551.1 209.0 L550.5 209.7 L549.9 209.5 L549.3 210.1 L548.7 210.1 L548.1 210.5 L547.5 210.5 L546.9 210.0 L546.3 210.4 L545.7 209.8 L545.1 209.9 L544.5 210.0 L543.9 209.9 L543.3 210.3 L542.7 210.8 L542.1 210.4 L541.5 210.3 L540.9 210.2 L540.3 209.9 L539.7 209.9 L539.1 209.0 L538.5 209.0 L537.9 208.7 L537.3 207.9 L536.7 207.6 L536.1 207.6 L535.5 208.8 L534.9 209.4 L534.3 209.7 L533.7 209.7 L533.1 210.1 L532.5 210.0 L531.9 210.6 L531.3 209.9 L530.7 208.8 L530.1 207.6 L529.5 207.6 L528.9 207.6 L528.3 207.6 L527.7 207.6 L527.1 207.6 L526.5 208.2 L525.9 208.6 L525.3 209.5 L524.7 208.3 L524.1 207.6 L523.5 207.6 L522.9 207.6 L522.3 207.6 L521.7 207.6 L521.1 207.6 L520.5 208.2 L519.9 209.2 L519.3 209.6 L518.7 210.0 L518.1 210.2 L517.5 209.2 L516.9 208.1 L516.3 207.6 L515.7 207.6 L515.1 207.6 L514.5 207.6 L513.9 208.1 L513.3 208.7 L512.7 209.3 L512.1 209.4 L511.5 209.5 L510.9 209.6 L510.3 209.7 L509.7 209.5 L509.1 209.7 L508.5 209.2 L507.9 209.3 L507.3 209.5 L506.7 209.1 L506.1 209.4 L505.5 209.0 L504.9 208.7 L504.3 208.1 L503.7 207.6 L503.1 207.6 L502.5 207.6 L501.9 208.8 L501.3 208.9 L500.7 209.7 L500.1 210.7 L499.5 211.4 L498.9 211.8 L498.3 211.5 L497.7 213.6 L497.1 211.5 L496.5 211.1 L495.9 210.6 L495.3 209.1 L494.7 207.6 L494.1 207.6 L493.5 207.6 L492.9 207.6Z" fill="#d4e1e6" stroke="#e7eef1" stroke-width="0.7" stroke-linejoin="round"/></svg>
<svg style="left:0;top:0" width="800" height="460" viewBox="0 0 800 460"><path d="M557.1 207.4 L557.1 207.2 L557.7 207.2 L558.3 206.0 L558.9 205.1 L559.5 203.9 L560.1 204.0 L560.7 204.7 L561.3 204.6 L561.9 205.7 L562.5 206.8 L563.1 207.2 L563.7 207.2 L564.3 204.9 L564.9 203.8 L565.5 202.4 L566.1 203.9 L566.7 203.9 L567.3 205.8 L567.9 207.2 L568.5 207.2 L569.1 207.2 L569.7 206.7 L570.3 205.4 L570.9 205.1 L571.5 204.3 L572.1 204.1 L572.7 205.1 L573.3 205.5 L573.9 206.1 L574.5 207.0 L575.1 207.2 L575.7 207.2 L576.3 207.2 L576.9 206.5 L577.5 206.3 L578.1 206.2 L578.7 206.2 L579.3 206.5 L579.9 206.8 L580.5 207.2 L581.1 207.2 L581.7 207.2 L582.3 207.2 L582.9 207.2 L583.5 206.7 L584.1 205.8 L584.7 205.2 L585.3 205.3 L585.9 204.8 L586.5 205.3 L587.1 205.7 L587.7 206.5 L588.3 207.2 L588.9 207.2 L589.5 207.2 L590.1 206.9 L590.7 205.9 L591.3 205.5 L591.9 205.5 L592.5 205.6 L593.1 206.0 L593.7 207.0 L594.3 207.2 L594.9 207.2 L595.5 207.2 L596.1 206.5 L596.7 205.4 L597.3 205.4 L597.9 204.7 L598.5 205.1 L599.1 205.4 L599.7 205.2 L600.3 206.0 L600.9 206.6 L601.5 207.2 L602.1 207.2 L602.7 207.2 L603.3 207.2 L603.9 207.2 L604.5 207.2 L605.1 207.2 L605.7 206.0 L606.3 204.6 L606.9 203.9 L607.5 204.2 L608.1 204.5 L608.7 204.5 L609.3 204.9 L609.9 205.4 L610.5 205.7 L611.1 206.3 L611.7 206.5 L612.3 207.1 L612.9 207.2 L613.5 207.2 L613.5 207.6 L612.9 207.6 L612.3 207.8 L611.7 208.3 L611.1 208.7 L610.5 209.1 L609.9 209.4 L609.3 209.5 L608.7 210.0 L608.1 210.7 L607.5 210.2 L606.9 211.3 L606.3 210.7 L605.7 209.8 L605.1 207.6 L604.5 207.6 L603.9 207.6 L603.3 207.6 L602.7 207.6 L602.1 207.6 L601.5 207.6 L600.9 208.3 L600.3 208.8 L599.7 209.3 L599.1 209.7 L598.5 209.6 L597.9 209.9 L597.3 209.8 L596.7 209.0 L596.1 208.6 L595.5 207.6 L594.9 207.6 L594.3 207.6 L593.7 207.8 L593.1 208.7 L592.5 209.5 L591.9 209.8 L591.3 209.6 L590.7 209.1 L590.1 207.9 L589.5 207.6 L588.9 207.6 L588.3 207.6 L587.7 208.3 L587.1 208.8 L586.5 210.6 L585.9 209.9 L585.3 209.7 L584.7 210.0 L584.1 209.4 L583.5 208.3 L582.9 207.6 L582.3 207.6 L581.7 207.6 L581.1 207.6 L580.5 207.6 L579.9 208.2 L579.3 208.3 L578.7 208.8 L578.1 208.6 L577.5 208.5 L576.9 208.0 L576.3 207.6 L575.7 207.6 L575.1 207.6 L574.5 207.8 L573.9 208.7 L573.3 209.3 L572.7 210.0 L572.1 210.3 L571.5 210.8 L570.9 210.4 L570.3 210.5 L569.7 207.9 L569.1 207.6 L568.5 207.6 L567.9 207.6 L567.3 208.8 L566.7 211.0 L566.1 211.4 L565.5 212.2 L564.9 211.2 L564.3 209.5 L563.7 207.6 L563.1 207.6 L562.5 208.0 L561.9 208.9 L561.3 210.0 L560.7 210.1 L560.1 211.2 L559.5 210.9 L558.9 209.7 L558.3 209.6 L557.7 207.6 L557.1 207.6Z" fill="#d4e1e6" stroke="#e7eef1" stroke-width="0.7" stroke-linejoin="round"/></svg>
<svg style="left:0;top:0" width="800" height="460" viewBox="0 0 800 460"><path d="M292.2 242.0 L292.2 241.8 L292.8 241.8 L293.4 241.8 L294.0 241.8 L294.6 241.8 L295.2 241.8 L295.8 241.8 L296.4 241.8 L297.0 241.8 L297.6 240.7 L298.2 239.8 L298.8 239.2 L299.4 239.3 L300.0 239.9 L300.6 240.2 L301.2 240.7 L301.8 241.6 L302.4 240.6 L303.0 239.6 L303.6 239.5 L304.2 238.7 L304.8 239.4 L305.4 239.8 L306.0 240.5 L306.6 241.2 L307.2 241.8 L307.8 241.1 L308.4 240.2 L309.0 240.4 L309.6 240.4 L310.2 241.2 L310.8 241.8 L311.4 241.8 L312.0 240.8 L312.6 239.9 L313.2 239.6 L313.8 240.1 L314.4 241.0 L315.0 241.8 L315.6 241.3 L316.2 240.6 L316.8 240.3 L317.4 241.0 L318.0 241.5 L318.6 241.8 L319.2 240.2 L319.8 237.1 L320.4 237.9 L321.0 238.4 L321.6 239.3 L322.2 239.9 L322.8 240.4 L323.4 239.9 L324.0 239.0 L324.6 239.2 L325.2 238.5 L325.8 238.5 L326.4 239.1 L327.0 238.9 L327.6 238.7 L328.2 238.7 L328.8 238.8 L329.4 238.9 L330.0 239.0 L330.6 239.8 L331.2 240.5 L331.8 241.4 L332.4 240.4 L333.0 239.4 L333.6 239.6 L334.2 239.6 L334.8 239.8 L335.4 239.3 L336.0 239.1 L336.6 239.1 L337.2 239.8 L337.8 239.2 L338.4 239.9 L339.0 240.7 L339.6 241.8 L340.2 241.8 L340.8 241.8 L341.4 241.8 L341.4 242.2 L340.8 242.2 L340.2 242.2 L339.6 242.2 L339.0 243.5 L338.4 243.9 L337.8 244.8 L337.2 244.4 L336.6 244.3 L336.0 244.7 L335.4 244.2 L334.8 244.0 L334.2 244.5 L333.6 244.2 L333.0 243.9 L332.4 243.9 L331.8 242.7 L331.2 243.5 L330.6 243.8 L330.0 244.7 L329.4 245.2 L328.8 245.2 L328.2 244.6 L327.6 245.3 L327.0 245.3 L326.4 245.6 L325.8 245.3 L325.2 247.1 L324.6 244.8 L324.0 244.9 L323.4 244.2 L322.8 243.4 L322.2 244.2 L321.6 245.0 L321.0 246.4 L320.4 246.5 L319.8 245.9 L319.2 243.6 L318.6 242.2 L318.0 242.4 L317.4 243.3 L316.8 243.6 L316.2 243.8 L315.6 242.8 L315.0 242.2 L314.4 243.0 L313.8 243.5 L313.2 244.0 L312.6 243.9 L312.0 243.5 L311.4 242.2 L310.8 242.2 L310.2 242.8 L309.6 243.3 L309.0 243.7 L308.4 243.5 L307.8 242.9 L307.2 242.2 L306.6 242.7 L306.0 243.9 L305.4 244.5 L304.8 244.6 L304.2 244.6 L303.6 244.7 L303.0 244.6 L302.4 243.2 L301.8 242.5 L301.2 243.7 L300.6 244.0 L300.0 244.0 L299.4 244.4 L298.8 244.8 L298.2 244.0 L297.6 243.3 L297.0 242.2 L296.4 242.2 L295.8 242.2 L295.2 242.2 L294.6 242.2 L294.0 242.2 L293.4 242.2 L292.8 242.2 L292.2 242.2Z" fill="#d4e1e6" stroke="#e7eef1" stroke-width="0.7" stroke-linejoin="round"/></svg>
<svg style="left:0;top:0" width="800" height="460" viewBox="0 0 800 460"><path d="M349.6 242.0 L349.6 241.8 L350.2 241.8 L350.8 239.4 L351.4 236.8 L352.0 236.0 L352.6 234.4 L353.2 236.0 L353.8 236.7 L354.4 235.6 L355.0 235.2 L355.6 237.1 L356.2 237.0 L356.8 237.3 L357.4 238.5 L358.0 241.1 L358.6 241.8 L358.6 242.2 L358.0 242.7 L357.4 245.8 L356.8 248.0 L356.2 250.4 L355.6 247.3 L355.0 246.9 L354.4 247.5 L353.8 247.4 L353.2 248.2 L352.6 247.9 L352.0 252.4 L351.4 246.4 L350.8 244.5 L350.2 242.2 L349.6 242.2Z" fill="#d4e1e6" stroke="#e7eef1" stroke-width="0.7" stroke-linejoin="round"/></svg>
<svg style="left:0;top:0" width="800" height="460" viewBox="0 0 800 460"><path d="M398.6 242.0 L398.6 241.8 L399.2 241.8 L399.8 241.8 L400.4 239.8 L401.0 239.1 L401.6 239.3 L402.2 239.5 L402.8 240.8 L403.4 241.1 L404.0 239.6 L404.6 238.2 L405.2 238.5 L405.8 238.7 L406.4 238.9 L407.0 238.5 L407.6 239.0 L408.2 237.9 L408.8 238.5 L409.4 238.8 L410.0 240.5 L410.6 240.4 L411.2 238.9 L411.8 237.4 L412.4 237.6 L413.0 237.4 L413.6 239.1 L414.2 239.7 L414.8 241.3 L415.4 240.8 L416.0 240.2 L416.6 239.8 L417.2 240.2 L417.8 240.1 L418.4 241.0 L419.0 241.8 L419.6 241.0 L420.2 239.8 L420.8 239.2 L421.4 238.9 L422.0 238.6 L422.6 239.3 L423.2 240.1 L423.8 240.6 L424.4 241.8 L425.0 240.2 L425.6 239.0 L426.2 239.2 L426.8 239.5 L427.4 239.5 L428.0 240.4 L428.6 240.9 L429.2 241.8 L429.8 240.8 L430.4 239.6 L431.0 238.1 L431.6 237.6 L432.2 237.7 L432.8 237.0 L433.4 237.4 L434.0 238.1 L434.6 237.2 L435.2 237.0 L435.8 238.7 L436.4 239.7 L437.0 241.7 L437.6 241.8 L437.6 242.2 L437.0 242.3 L436.4 244.8 L435.8 245.3 L435.2 246.1 L434.6 246.4 L434.0 245.9 L433.4 246.9 L432.8 246.3 L432.2 246.6 L431.6 245.6 L431.0 245.8 L430.4 245.0 L429.8 243.4 L429.2 242.2 L428.6 243.0 L428.0 243.9 L427.4 244.9 L426.8 244.6 L426.2 244.9 L425.6 244.3 L425.0 243.9 L424.4 242.2 L423.8 243.4 L423.2 244.5 L422.6 245.3 L422.0 245.0 L421.4 245.1 L420.8 245.2 L420.2 244.5 L419.6 243.1 L419.0 242.2 L418.4 243.1 L417.8 243.7 L417.2 244.0 L416.6 244.2 L416.0 244.0 L415.4 242.9 L414.8 242.9 L414.2 243.9 L413.6 245.6 L413.0 245.7 L412.4 246.4 L411.8 246.2 L411.2 245.6 L410.6 243.5 L410.0 243.7 L409.4 244.6 L408.8 246.2 L408.2 245.9 L407.6 245.2 L407.0 246.0 L406.4 245.9 L405.8 245.3 L405.2 246.0 L404.6 246.0 L404.0 244.7 L403.4 242.8 L402.8 243.3 L402.2 244.6 L401.6 244.5 L401.0 244.8 L400.4 244.4 L399.8 242.2 L399.2 242.2 L398.6 242.2Z" fill="#d4e1e6" stroke="#e7eef1" stroke-width="0.7" stroke-linejoin="round"/></svg>
<svg style="left:0;top:0" width="800" height="460" viewBox="0 0 800 460"><path d="M492.9 242.0 L492.9 241.8 L493.5 241.8 L494.1 241.8 L494.7 241.8 L495.3 240.0 L495.9 238.5 L496.5 237.9 L497.1 237.3 L497.7 237.7 L498.3 237.0 L498.9 238.2 L499.5 237.9 L500.1 238.9 L500.7 239.5 L501.3 239.9 L501.9 240.9 L502.5 241.8 L503.1 241.8 L503.7 241.8 L504.3 241.3 L504.9 240.8 L505.5 240.5 L506.1 239.9 L506.7 240.0 L507.3 239.6 L507.9 239.7 L508.5 240.3 L509.1 240.1 L509.7 240.1 L510.3 240.1 L510.9 239.9 L511.5 239.7 L512.1 240.0 L512.7 240.3 L513.3 240.6 L513.9 241.2 L514.5 241.8 L515.1 241.8 L515.7 241.8 L516.3 241.8 L516.9 241.2 L517.5 239.8 L518.1 239.3 L518.7 238.9 L519.3 239.6 L519.9 240.5 L520.5 241.1 L521.1 241.8 L521.7 241.8 L522.3 241.8 L522.9 241.8 L523.5 241.8 L524.1 241.8 L524.7 241.0 L525.3 240.4 L525.9 240.7 L526.5 241.2 L527.1 241.8 L527.7 241.8 L528.3 241.8 L528.9 241.8 L529.5 241.8 L530.1 241.8 L530.7 240.7 L531.3 240.1 L531.9 238.7 L532.5 238.5 L533.1 239.1 L533.7 239.1 L534.3 239.4 L534.9 240.4 L535.5 241.0 L536.1 241.8 L536.7 241.8 L537.3 241.4 L537.9 240.7 L538.5 240.5 L539.1 239.7 L539.7 239.4 L540.3 239.1 L540.9 239.6 L541.5 239.3 L542.1 239.3 L542.7 239.3 L543.3 238.8 L543.9 239.1 L544.5 239.4 L545.1 239.4 L545.7 239.1 L546.3 238.9 L546.9 239.2 L547.5 239.0 L548.1 239.2 L548.7 239.2 L549.3 239.4 L549.9 239.8 L550.5 240.2 L551.1 240.2 L551.7 241.0 L552.3 241.8 L552.9 241.8 L553.5 241.8 L554.1 241.8 L554.1 242.2 L553.5 242.2 L552.9 242.2 L552.3 242.2 L551.7 243.1 L551.1 243.6 L550.5 244.3 L549.9 244.1 L549.3 244.7 L548.7 244.7 L548.1 245.1 L547.5 245.1 L546.9 244.6 L546.3 245.0 L545.7 244.4 L545.1 244.5 L544.5 244.6 L543.9 244.5 L543.3 244.9 L542.7 245.4 L542.1 245.0 L541.5 244.9 L540.9 244.8 L540.3 244.5 L539.7 244.5 L539.1 243.6 L538.5 243.6 L537.9 243.3 L537.3 242.5 L536.7 242.2 L536.1 242.2 L535.5 243.4 L534.9 244.0 L534.3 244.3 L533.7 244.3 L533.1 244.7 L532.5 244.6 L531.9 245.2 L531.3 244.5 L530.7 243.4 L530.1 242.2 L529.5 242.2 L528.9 242.2 L528.3 242.2 L527.7 242.2 L527.1 242.2 L526.5 242.8 L525.9 243.2 L525.3 244.1 L524.7 242.9 L524.1 242.2 L523.5 242.2 L522.9 242.2 L522.3 242.2 L521.7 242.2 L521.1 242.2 L520.5 242.8 L519.9 243.8 L519.3 244.2 L518.7 244.6 L518.1 244.8 L517.5 243.8 L516.9 242.7 L516.3 242.2 L515.7 242.2 L515.1 242.2 L514.5 242.2 L513.9 242.7 L513.3 243.3 L512.7 243.9 L512.1 244.0 L511.5 244.1 L510.9 244.2 L510.3 244.3 L509.7 244.1 L509.1 244.3 L508.5 243.8 L507.9 243.9 L507.3 244.1 L506.7 243.7 L506.1 244.0 L505.5 243.6 L504.9 243.3 L504.3 242.7 L503.7 242.2 L503.1 242.2 L502.5 242.2 L501.9 243.4 L501.3 243.5 L500.7 244.3 L500.1 245.3 L499.5 246.0 L498.9 246.4 L498.3 246.1 L497.7 248.2 L497.1 246.1 L496.5 245.7 L495.9 245.2 L495.3 243.7 L494.7 242.2 L494.1 242.2 L493.5 242.2 L492.9 242.2Z" fill="#d4e1e6" stroke="#e7eef1" stroke-width="0.7" stroke-linejoin="round"/></svg>
<svg style="left:0;top:0" width="800" height="460" viewBox="0 0 800 460"><path d="M557.1 242.0 L557.1 241.8 L557.7 241.8 L558.3 240.6 L558.9 239.7 L559.5 238.5 L560.1 238.6 L560.7 239.3 L561.3 239.2 L561.9 240.3 L562.5 241.4 L563.1 241.8 L563.7 241.8 L564.3 239.5 L564.9 238.4 L565.5 237.0 L566.1 238.5 L566.7 238.5 L567.3 240.4 L567.9 241.8 L568.5 241.8 L569.1 241.8 L569.7 241.3 L570.3 240.0 L570.9 239.7 L571.5 238.9 L572.1 238.7 L572.7 239.7 L573.3 240.1 L573.9 240.7 L574.5 241.6 L575.1 241.8 L575.7 241.8 L576.3 241.8 L576.9 241.1 L577.5 240.9 L578.1 240.8 L578.7 240.8 L579.3 241.1 L579.9 241.4 L580.5 241.8 L581.1 241.8 L581.7 241.8 L582.3 241.8 L582.9 241.8 L583.5 241.3 L584.1 240.4 L584.7 239.8 L585.3 239.9 L585.9 239.4 L586.5 239.9 L587.1 240.3 L587.7 241.1 L588.3 241.8 L588.9 241.8 L589.5 241.8 L590.1 241.5 L590.7 240.5 L591.3 240.1 L591.9 240.1 L592.5 240.2 L593.1 240.6 L593.7 241.6 L594.3 241.8 L594.9 241.8 L595.5 241.8 L596.1 241.1 L596.7 240.0 L597.3 240.0 L597.9 239.3 L598.5 239.7 L599.1 240.0 L599.7 239.8 L600.3 240.6 L600.9 241.2 L601.5 241.8 L602.1 241.8 L602.7 241.8 L603.3 241.8 L603.9 241.8 L604.5 241.8 L605.1 241.8 L605.7 240.6 L606.3 239.2 L606.9 238.5 L607.5 238.8 L608.1 239.1 L608.7 239.1 L609.3 239.5 L609.9 240.0 L610.5 240.3 L611.1 240.9 L611.7 241.1 L612.3 241.7 L612.9 241.8 L613.5 241.8 L613.5 242.2 L612.9 242.2 L612.3 242.4 L611.7 242.9 L611.1 243.3 L610.5 243.7 L609.9 244.0 L609.3 244.1 L608.7 244.6 L608.1 245.3 L607.5 244.8 L606.9 245.9 L606.3 245.3 L605.7 244.4 L605.1 242.2 L604.5 242.2 L603.9 242.2 L603.3 242.2 L602.7 242.2 L602.1 242.2 L601.5 242.2 L600.9 242.9 L600.3 243.4 L599.7 243.9 L599.1 244.3 L598.5 244.2 L597.9 244.5 L597.3 244.4 L596.7 243.6 L596.1 243.2 L595.5 242.2 L594.9 242.2 L594.3 242.2 L593.7 242.4 L593.1 243.3 L592.5 244.1 L591.9 244.4 L591.3 244.2 L590.7 243.7 L590.1 242.5 L589.5 242.2 L588.9 242.2 L588.3 242.2 L587.7 242.9 L587.1 243.4 L586.5 245.2 L585.9 244.5 L585.3 244.3 L584.7 244.6 L584.1 244.0 L583.5 242.9 L582.9 242.2 L582.3 242.2 L581.7 242.2 L581.1 242.2 L580.5 242.2 L579.9 242.8 L579.3 242.9 L578.7 243.4 L578.1 243.2 L577.5 243.1 L576.9 242.6 L576.3 242.2 L575.7 242.2 L575.1 242.2 L574.5 242.4 L573.9 243.3 L573.3 243.9 L572.7 244.6 L572.1 244.9 L571.5 245.4 L570.9 245.0 L570.3 245.1 L569.7 242.5 L569.1 242.2 L568.5 242.2 L567.9 242.2 L567.3 243.4 L566.7 245.6 L566.1 246.0 L565.5 246.8 L564.9 245.8 L564.3 244.1 L563.7 242.2 L563.1 242.2 L562.5 242.6 L561.9 243.5 L561.3 244.6 L560.7 244.7 L560.1 245.8 L559.5 245.5 L558.9 244.3 L558.3 244.2 L557.7 242.2 L557.1 242.2Z" fill="#d4e1e6" stroke="#e7eef1" stroke-width="0.7" stroke-linejoin="round"/></svg>
<svg style="left:0;top:0" width="800" height="460" viewBox="0 0 800 460"><path d="M292.2 276.5 L292.2 276.3 L292.8 276.3 L293.4 276.3 L294.0 276.3 L294.6 276.3 L295.2 276.3 L295.8 276.3 L296.4 276.3 L297.0 276.3 L297.6 275.2 L298.2 274.3 L298.8 273.7 L299.4 273.8 L300.0 274.4 L300.6 274.7 L301.2 275.2 L301.8 276.1 L302.4 275.1 L303.0 274.1 L303.6 274.0 L304.2 273.2 L304.8 273.9 L305.4 274.3 L306.0 275.0 L306.6 275.7 L307.2 276.3 L307.8 275.6 L308.4 274.7 L309.0 274.9 L309.6 274.9 L310.2 275.7 L310.8 276.3 L311.4 276.3 L312.0 275.3 L312.6 274.4 L313.2 274.1 L313.8 274.6 L314.4 275.5 L315.0 276.3 L315.6 275.8 L316.2 275.1 L316.8 274.8 L317.4 275.5 L318.0 276.0 L318.6 276.3 L319.2 274.7 L319.8 271.6 L320.4 272.4 L321.0 272.9 L321.6 273.8 L322.2 274.4 L322.8 274.9 L323.4 274.4 L324.0 273.5 L324.6 273.7 L325.2 273.0 L325.8 273.0 L326.4 273.6 L327.0 273.4 L327.6 273.2 L328.2 273.2 L328.8 273.3 L329.4 273.4 L330.0 273.5 L330.6 274.3 L331.2 275.0 L331.8 275.9 L332.4 274.9 L333.0 273.9 L333.6 274.1 L334.2 274.1 L334.8 274.3 L335.4 273.8 L336.0 273.6 L336.6 273.6 L337.2 274.3 L337.8 273.7 L338.4 274.4 L339.0 275.2 L339.6 276.3 L340.2 276.3 L340.8 276.3 L341.4 276.3 L341.4 276.7 L340.8 276.7 L340.2 276.7 L339.6 276.7 L339.0 278.0 L338.4 278.4 L337.8 279.3 L337.2 278.9 L336.6 278.8 L336.0 279.2 L335.4 278.7 L334.8 278.5 L334.2 279.0 L333.6 278.7 L333.0 278.4 L332.4 278.4 L331.8 277.2 L331.2 278.0 L330.6 278.3 L330.0 279.2 L329.4 279.7 L328.8 279.7 L328.2 279.1 L327.6 279.8 L327.0 279.8 L326.4 280.1 L325.8 279.8 L325.2 281.6 L324.6 279.3 L324.0 279.4 L323.4 278.7 L322.8 277.9 L322.2 278.7 L321.6 279.5 L321.0 280.9 L320.4 281.0 L319.8 280.4 L319.2 278.1 L318.6 276.7 L318.0 276.9 L317.4 277.8 L316.8 278.1 L316.2 278.3 L315.6 277.3 L315.0 276.7 L314.4 277.5 L313.8 278.0 L313.2 278.5 L312.6 278.4 L312.0 278.0 L311.4 276.7 L310.8 276.7 L310.2 277.3 L309.6 277.8 L309.0 278.2 L308.4 278.0 L307.8 277.4 L307.2 276.7 L306.6 277.2 L306.0 278.4 L305.4 279.0 L304.8 279.1 L304.2 279.1 L303.6 279.2 L303.0 279.1 L302.4 277.7 L301.8 277.0 L301.2 278.2 L300.6 278.5 L300.0 278.5 L299.4 278.9 L298.8 279.3 L298.2 278.5 L297.6 277.8 L297.0 276.7 L296.4 276.7 L295.8 276.7 L295.2 276.7 L294.6 276.7 L294.0 276.7 L293.4 276.7 L292.8 276.7 L292.2 276.7Z" fill="#d4e1e6" stroke="#e7eef1" stroke-width="0.7" stroke-linejoin="round"/></svg>
<svg style="left:0;top:0" width="800" height="460" viewBox="0 0 800 460"><path d="M349.6 276.5 L349.6 276.3 L350.2 276.3 L350.8 273.9 L351.4 271.3 L352.0 270.5 L352.6 268.9 L353.2 270.5 L353.8 271.2 L354.4 270.1 L355.0 269.7 L355.6 271.6 L356.2 271.5 L356.8 271.8 L357.4 273.0 L358.0 275.6 L358.6 276.3 L358.6 276.7 L358.0 277.2 L357.4 280.3 L356.8 282.5 L356.2 284.9 L355.6 281.8 L355.0 281.4 L354.4 282.0 L353.8 281.9 L353.2 282.7 L352.6 282.4 L352.0 286.9 L351.4 280.9 L350.8 279.0 L350.2 276.7 L349.6 276.7Z" fill="#d4e1e6" stroke="#e7eef1" stroke-width="0.7" stroke-linejoin="round"/></svg>
<svg style="left:0;top:0" width="800" height="460" viewBox="0 0 800 460"><path d="M398.6 276.5 L398.6 276.3 L399.2 276.3 L399.8 276.3 L400.4 274.3 L401.0 273.6 L401.6 273.8 L402.2 274.0 L402.8 275.3 L403.4 275.6 L404.0 274.1 L404.6 272.7 L405.2 273.0 L405.8 273.2 L406.4 273.4 L407.0 273.0 L407.6 273.5 L408.2 272.4 L408.8 273.0 L409.4 273.3 L410.0 275.0 L410.6 274.9 L411.2 273.4 L411.8 271.9 L412.4 272.1 L413.0 271.9 L413.6 273.6 L414.2 274.2 L414.8 275.8 L415.4 275.3 L416.0 274.7 L416.6 274.3 L417.2 274.7 L417.8 274.6 L418.4 275.5 L419.0 276.3 L419.6 275.5 L420.2 274.3 L420.8 273.7 L421.4 273.4 L422.0 273.1 L422.6 273.8 L423.2 274.6 L423.8 275.1 L424.4 276.3 L425.0 274.7 L425.6 273.5 L426.2 273.7 L426.8 274.0 L427.4 274.0 L428.0 274.9 L428.6 275.4 L429.2 276.3 L429.8 275.3 L430.4 274.1 L431.0 272.6 L431.6 272.1 L432.2 272.2 L432.8 271.5 L433.4 271.9 L434.0 272.6 L434.6 271.7 L435.2 271.5 L435.8 273.2 L436.4 274.2 L437.0 276.2 L437.6 276.3 L437.6 276.7 L437.0 276.8 L436.4 279.3 L435.8 279.8 L435.2 280.6 L434.6 280.9 L434.0 280.4 L433.4 281.4 L432.8 280.8 L432.2 281.1 L431.6 280.1 L431.0 280.3 L430.4 279.5 L429.8 277.9 L429.2 276.7 L428.6 277.5 L428.0 278.4 L427.4 279.4 L426.8 279.1 L426.2 279.4 L425.6 278.8 L425.0 278.4 L424.4 276.7 L423.8 277.9 L423.2 279.0 L422.6 279.8 L422.0 279.5 L421.4 279.6 L420.8 279.7 L420.2 279.0 L419.6 277.6 L419.0 276.7 L418.4 277.6 L417.8 278.2 L417.2 278.5 L416.6 278.7 L416.0 278.5 L415.4 277.4 L414.8 277.4 L414.2 278.4 L413.6 280.1 L413.0 280.2 L412.4 280.9 L411.8 280.7 L411.2 280.1 L410.6 278.0 L410.0 278.2 L409.4 279.1 L408.8 280.7 L408.2 280.4 L407.6 279.7 L407.0 280.5 L406.4 280.4 L405.8 279.8 L405.2 280.5 L404.6 280.5 L404.0 279.2 L403.4 277.3 L402.8 277.8 L402.2 279.1 L401.6 279.0 L401.0 279.3 L400.4 278.9 L399.8 276.7 L399.2 276.7 L398.6 276.7Z" fill="#d4e1e6" stroke="#e7eef1" stroke-width="0.7" stroke-linejoin="round"/></svg>
<svg style="left:0;top:0" width="800" height="460" viewBox="0 0 800 460"><path d="M492.9 276.5 L492.9 276.3 L493.5 276.3 L494.1 276.3 L494.7 276.3 L495.3 274.5 L495.9 273.0 L496.5 272.4 L497.1 271.8 L497.7 272.2 L498.3 271.5 L498.9 272.7 L499.5 272.4 L500.1 273.4 L500.7 274.0 L501.3 274.4 L501.9 275.4 L502.5 276.3 L503.1 276.3 L503.7 276.3 L504.3 275.8 L504.9 275.3 L505.5 275.0 L506.1 274.4 L506.7 274.5 L507.3 274.1 L507.9 274.2 L508.5 274.8 L509.1 274.6 L509.7 274.6 L510.3 274.6 L510.9 274.4 L511.5 274.2 L512.1 274.5 L512.7 274.8 L513.3 275.1 L513.9 275.7 L514.5 276.3 L515.1 276.3 L515.7 276.3 L516.3 276.3 L516.9 275.7 L517.5 274.3 L518.1 273.8 L518.7 273.4 L519.3 274.1 L519.9 275.0 L520.5 275.6 L521.1 276.3 L521.7 276.3 L522.3 276.3 L522.9 276.3 L523.5 276.3 L524.1 276.3 L524.7 275.5 L525.3 274.9 L525.9 275.2 L526.5 275.7 L527.1 276.3 L527.7 276.3 L528.3 276.3 L528.9 276.3 L529.5 276.3 L530.1 276.3 L530.7 275.2 L531.3 274.6 L531.9 273.2 L532.5 273.0 L533.1 273.6 L533.7 273.6 L534.3 273.9 L534.9 274.9 L535.5 275.5 L536.1 276.3 L536.7 276.3 L537.3 275.9 L537.9 275.2 L538.5 275.0 L539.1 274.2 L539.7 273.9 L540.3 273.6 L540.9 274.1 L541.5 273.8 L542.1 273.8 L542.7 273.8 L543.3 273.3 L543.9 273.6 L544.5 273.9 L545.1 273.9 L545.7 273.6 L546.3 273.4 L546.9 273.7 L547.5 273.5 L548.1 273.7 L548.7 273.7 L549.3 273.9 L549.9 274.3 L550.5 274.7 L551.1 274.7 L551.7 275.5 L552.3 276.3 L552.9 276.3 L553.5 276.3 L554.1 276.3 L554.1 276.7 L553.5 276.7 L552.9 276.7 L552.3 276.7 L551.7 277.6 L551.1 278.1 L550.5 278.8 L549.9 278.6 L549.3 279.2 L548.7 279.2 L548.1 279.6 L547.5 279.6 L546.9 279.1 L546.3 279.5 L545.7 278.9 L545.1 279.0 L544.5 279.1 L543.9 279.0 L543.3 279.4 L542.7 279.9 L542.1 279.5 L541.5 279.4 L540.9 279.3 L540.3 279.0 L539.7 279.0 L539.1 278.1 L538.5 278.1 L537.9 277.8 L537.3 277.0 L536.7 276.7 L536.1 276.7 L535.5 277.9 L534.9 278.5 L534.3 278.8 L533.7 278.8 L533.1 279.2 L532.5 279.1 L531.9 279.7 L531.3 279.0 L530.7 277.9 L530.1 276.7 L529.5 276.7 L528.9 276.7 L528.3 276.7 L527.7 276.7 L527.1 276.7 L526.5 277.3 L525.9 277.7 L525.3 278.6 L524.7 277.4 L524.1 276.7 L523.5 276.7 L522.9 276.7 L522.3 276.7 L521.7 276.7 L521.1 276.7 L520.5 277.3 L519.9 278.3 L519.3 278.7 L518.7 279.1 L518.1 279.3 L517.5 278.3 L516.9 277.2 L516.3 276.7 L515.7 276.7 L515.1 276.7 L514.5 276.7 L513.9 277.2 L513.3 277.8 L512.7 278.4 L512.1 278.5 L511.5 278.6 L510.9 278.7 L510.3 278.8 L509.7 278.6 L509.1 278.8 L508.5 278.3 L507.9 278.4 L507.3 278.6 L506.7 278.2 L506.1 278.5 L505.5 278.1 L504.9 277.8 L504.3 277.2 L503.7 276.7 L503.1 276.7 L502.5 276.7 L501.9 277.9 L501.3 278.0 L500.7 278.8 L500.1 279.8 L499.5 280.5 L498.9 280.9 L498.3 280.6 L497.7 282.7 L497.1 280.6 L496.5 280.2 L495.9 279.7 L495.3 278.2 L494.7 276.7 L494.1 276.7 L493.5 276.7 L492.9 276.7Z" fill="#d4e1e6" stroke="#e7eef1" stroke-width="0.7" stroke-linejoin="round"/></svg>
<svg style="left:0;top:0" width="800" height="460" viewBox="0 0 800 460"><path d="M557.1 276.5 L557.1 276.4 L557.7 276.4 L558.3 275.1 L558.9 274.2 L559.5 273.0 L560.1 273.1 L560.7 273.8 L561.3 273.7 L561.9 274.8 L562.5 275.9 L563.1 276.4 L563.7 276.4 L564.3 274.0 L564.9 272.9 L565.5 271.5 L566.1 273.0 L566.7 273.0 L567.3 274.9 L567.9 276.4 L568.5 276.4 L569.1 276.4 L569.7 275.8 L570.3 274.5 L570.9 274.2 L571.5 273.4 L572.1 273.2 L572.7 274.2 L573.3 274.6 L573.9 275.2 L574.5 276.1 L575.1 276.4 L575.7 276.4 L576.3 276.4 L576.9 275.6 L577.5 275.4 L578.1 275.3 L578.7 275.3 L579.3 275.6 L579.9 275.9 L580.5 276.4 L581.1 276.4 L581.7 276.4 L582.3 276.4 L582.9 276.4 L583.5 275.8 L584.1 274.9 L584.7 274.3 L585.3 274.4 L585.9 273.9 L586.5 274.4 L587.1 274.8 L587.7 275.6 L588.3 276.4 L588.9 276.4 L589.5 276.4 L590.1 276.0 L590.7 275.0 L591.3 274.6 L591.9 274.6 L592.5 274.7 L593.1 275.1 L593.7 276.1 L594.3 276.4 L594.9 276.4 L595.5 276.4 L596.1 275.6 L596.7 274.5 L597.3 274.5 L597.9 273.8 L598.5 274.2 L599.1 274.5 L599.7 274.3 L600.3 275.1 L600.9 275.7 L601.5 276.3 L602.1 276.4 L602.7 276.4 L603.3 276.4 L603.9 276.4 L604.5 276.4 L605.1 276.3 L605.7 275.1 L606.3 273.7 L606.9 273.0 L607.5 273.3 L608.1 273.6 L608.7 273.6 L609.3 274.0 L609.9 274.5 L610.5 274.8 L611.1 275.4 L611.7 275.6 L612.3 276.2 L612.9 276.4 L613.5 276.4 L613.5 276.6 L612.9 276.6 L612.3 276.9 L611.7 277.4 L611.1 277.8 L610.5 278.2 L609.9 278.5 L609.3 278.6 L608.7 279.1 L608.1 279.8 L607.5 279.3 L606.9 280.4 L606.3 279.8 L605.7 278.9 L605.1 276.7 L604.5 276.6 L603.9 276.6 L603.3 276.6 L602.7 276.6 L602.1 276.6 L601.5 276.7 L600.9 277.4 L600.3 277.9 L599.7 278.4 L599.1 278.8 L598.5 278.7 L597.9 279.0 L597.3 278.9 L596.7 278.1 L596.1 277.7 L595.5 276.6 L594.9 276.6 L594.3 276.6 L593.7 276.9 L593.1 277.8 L592.5 278.6 L591.9 278.9 L591.3 278.7 L590.7 278.2 L590.1 277.0 L589.5 276.6 L588.9 276.6 L588.3 276.6 L587.7 277.4 L587.1 277.9 L586.5 279.7 L585.9 279.0 L585.3 278.8 L584.7 279.1 L584.1 278.5 L583.5 277.4 L582.9 276.6 L582.3 276.6 L581.7 276.6 L581.1 276.6 L580.5 276.6 L579.9 277.3 L579.3 277.4 L578.7 277.9 L578.1 277.7 L577.5 277.6 L576.9 277.1 L576.3 276.6 L575.7 276.6 L575.1 276.6 L574.5 276.9 L573.9 277.8 L573.3 278.4 L572.7 279.1 L572.1 279.4 L571.5 279.9 L570.9 279.5 L570.3 279.6 L569.7 277.0 L569.1 276.6 L568.5 276.6 L567.9 276.6 L567.3 277.9 L566.7 280.1 L566.1 280.5 L565.5 281.3 L564.9 280.3 L564.3 278.6 L563.7 276.6 L563.1 276.6 L562.5 277.1 L561.9 278.0 L561.3 279.1 L560.7 279.2 L560.1 280.3 L559.5 280.0 L558.9 278.8 L558.3 278.7 L557.7 276.6 L557.1 276.6Z" fill="#d4e1e6" stroke="#e7eef1" stroke-width="0.7" stroke-linejoin="round"/></svg>
<div style="left:596.3px;top:295px;width:118.9px;height:33px;background:linear-gradient(#8ba8d2,#7797c6 30%,#6685b8 75%,#5c7cb0);box-shadow:inset 0.8px 0.8px 0 rgba(205,224,250,.5),inset -0.8px -0.8px 0 #4d6c9b;"></div>
<svg style="left:0;top:0" width="800" height="460" viewBox="0 0 800 460"><path d="M597.5 311.5 L597.5 310.8 L598.1 310.8 L598.7 310.8 L599.3 310.8 L599.9 310.8 L600.5 310.8 L601.1 310.8 L601.7 310.8 L602.3 310.8 L602.9 310.8 L603.5 310.8 L604.1 310.8 L604.7 310.8 L605.3 310.8 L605.9 310.8 L606.5 310.8 L607.1 310.8 L607.7 310.8 L608.3 310.8 L608.9 310.8 L609.5 310.8 L610.1 309.7 L610.7 307.6 L611.3 307.2 L611.9 306.8 L612.5 308.0 L613.1 308.4 L613.7 309.3 L614.3 310.8 L614.9 310.8 L615.5 310.8 L616.1 309.3 L616.7 307.9 L617.3 307.8 L617.9 308.0 L618.5 307.9 L619.1 309.1 L619.7 310.2 L620.3 310.8 L620.9 310.8 L621.5 310.8 L622.1 310.8 L622.7 310.8 L623.3 308.1 L623.9 306.7 L624.5 305.9 L625.1 305.9 L625.7 304.1 L626.3 305.2 L626.9 305.8 L627.5 307.6 L628.1 307.9 L628.7 308.2 L629.3 310.1 L629.9 310.8 L630.5 310.8 L631.1 308.4 L631.7 307.0 L632.3 304.2 L632.9 304.1 L633.5 304.7 L634.1 304.4 L634.7 305.6 L635.3 305.5 L635.9 306.9 L636.5 308.4 L637.1 309.1 L637.7 310.6 L638.3 310.8 L638.9 310.8 L639.5 310.4 L640.1 308.5 L640.7 308.1 L641.3 307.9 L641.9 307.2 L642.5 306.3 L643.1 306.6 L643.7 308.3 L644.3 308.3 L644.9 308.9 L645.5 310.0 L646.1 310.8 L646.7 310.8 L647.3 310.8 L647.9 310.8 L648.5 310.8 L649.1 310.0 L649.7 308.3 L650.3 307.6 L650.9 307.0 L651.5 307.2 L652.1 306.0 L652.7 306.3 L653.3 306.0 L653.9 307.4 L654.5 307.5 L655.1 308.1 L655.7 309.6 L656.3 310.4 L656.9 310.8 L657.5 310.8 L658.1 310.8 L658.7 307.3 L659.3 306.5 L659.9 304.8 L660.5 302.3 L661.1 302.4 L661.7 302.2 L662.3 300.6 L662.9 298.7 L663.5 299.8 L664.1 299.5 L664.7 297.1 L665.3 297.5 L665.9 299.4 L666.5 299.3 L667.1 300.6 L667.7 301.9 L668.3 303.8 L668.9 303.7 L669.5 305.1 L670.1 305.6 L670.7 306.9 L671.3 309.2 L671.9 310.2 L672.5 310.8 L673.1 310.8 L673.7 309.3 L674.3 306.7 L674.9 305.3 L675.5 302.8 L676.1 303.1 L676.7 301.9 L677.3 301.7 L677.9 298.8 L678.5 297.6 L679.1 298.4 L679.7 300.8 L680.3 301.2 L680.9 299.2 L681.5 300.2 L682.1 300.4 L682.7 303.1 L683.3 303.0 L683.9 304.5 L684.5 304.6 L685.1 306.1 L685.7 306.8 L686.3 308.3 L686.9 309.4 L687.5 310.8 L688.1 310.8 L688.7 310.8 L689.3 307.1 L689.9 305.8 L690.5 302.8 L691.1 301.7 L691.7 298.8 L692.3 299.4 L692.9 298.4 L693.5 299.9 L694.1 297.7 L694.7 298.9 L695.3 300.5 L695.9 300.6 L696.5 300.4 L697.1 301.9 L697.7 304.2 L698.3 304.8 L698.9 305.7 L699.5 307.9 L700.1 310.0 L700.7 310.8 L701.3 310.8 L701.9 310.2 L702.5 307.7 L703.1 305.6 L703.7 306.3 L704.3 304.1 L704.9 304.2 L705.5 305.1 L706.1 306.0 L706.7 306.1 L707.3 304.2 L707.9 305.1 L708.5 305.4 L709.1 303.3 L709.7 302.9 L710.3 303.3 L710.9 304.0 L711.5 304.4 L712.1 306.2 L712.7 307.8 L713.3 309.6 L713.9 310.8 L713.9 312.2 L713.3 313.0 L712.7 315.3 L712.1 317.5 L711.5 318.6 L710.9 320.1 L710.3 319.4 L709.7 322.4 L709.1 319.0 L708.5 319.5 L707.9 318.6 L707.3 317.6 L706.7 316.9 L706.1 318.0 L705.5 316.8 L704.9 316.9 L704.3 317.2 L703.7 317.8 L703.1 317.2 L702.5 315.3 L701.9 312.8 L701.3 312.2 L700.7 312.2 L700.1 313.2 L699.5 315.2 L698.9 315.9 L698.3 318.0 L697.7 321.5 L697.1 321.1 L696.5 321.7 L695.9 325.8 L695.3 322.9 L694.7 322.4 L694.1 325.8 L693.5 323.6 L692.9 326.2 L692.3 323.2 L691.7 322.1 L691.1 321.0 L690.5 321.0 L689.9 317.9 L689.3 316.1 L688.7 312.2 L688.1 312.2 L687.5 312.2 L686.9 313.3 L686.3 315.1 L685.7 315.5 L685.1 316.9 L684.5 316.7 L683.9 319.9 L683.3 321.2 L682.7 321.7 L682.1 322.9 L681.5 321.5 L680.9 322.0 L680.3 323.0 L679.7 325.2 L679.1 324.8 L678.5 323.8 L677.9 322.3 L677.3 323.0 L676.7 324.8 L676.1 321.3 L675.5 320.9 L674.9 317.9 L674.3 316.7 L673.7 313.5 L673.1 312.2 L672.5 312.2 L671.9 312.9 L671.3 314.6 L670.7 314.9 L670.1 317.5 L669.5 318.2 L668.9 318.1 L668.3 321.2 L667.7 322.6 L667.1 320.8 L666.5 325.6 L665.9 321.7 L665.3 329.1 L664.7 321.9 L664.1 323.0 L663.5 321.8 L662.9 322.3 L662.3 321.1 L661.7 322.8 L661.1 320.4 L660.5 319.4 L659.9 318.5 L659.3 318.2 L658.7 315.4 L658.1 312.2 L657.5 312.2 L656.9 312.2 L656.3 312.5 L655.7 313.5 L655.1 313.9 L654.5 315.7 L653.9 316.6 L653.3 316.8 L652.7 317.0 L652.1 317.3 L651.5 316.5 L650.9 316.3 L650.3 315.1 L649.7 314.9 L649.1 313.2 L648.5 312.2 L647.9 312.2 L647.3 312.2 L646.7 312.2 L646.1 312.2 L645.5 313.0 L644.9 313.9 L644.3 316.0 L643.7 315.7 L643.1 315.1 L642.5 315.7 L641.9 315.0 L641.3 315.7 L640.7 315.2 L640.1 313.7 L639.5 312.7 L638.9 312.2 L638.3 312.2 L637.7 312.3 L637.1 314.3 L636.5 315.3 L635.9 315.4 L635.3 319.7 L634.7 318.9 L634.1 319.4 L633.5 318.2 L632.9 318.4 L632.3 318.4 L631.7 316.7 L631.1 314.6 L630.5 312.2 L629.9 312.2 L629.3 313.1 L628.7 314.5 L628.1 315.9 L627.5 316.7 L626.9 316.6 L626.3 318.4 L625.7 318.2 L625.1 318.5 L624.5 319.7 L623.9 315.9 L623.3 314.9 L622.7 312.2 L622.1 312.2 L621.5 312.2 L620.9 312.2 L620.3 312.2 L619.7 312.8 L619.1 313.9 L618.5 317.0 L617.9 316.0 L617.3 316.1 L616.7 314.6 L616.1 313.7 L615.5 312.2 L614.9 312.2 L614.3 312.2 L613.7 313.8 L613.1 315.0 L612.5 316.1 L611.9 315.7 L611.3 316.7 L610.7 314.8 L610.1 313.6 L609.5 312.2 L608.9 312.2 L608.3 312.2 L607.7 312.2 L607.1 312.2 L606.5 312.2 L605.9 312.2 L605.3 312.2 L604.7 312.2 L604.1 312.2 L603.5 312.2 L602.9 312.2 L602.3 312.2 L601.7 312.2 L601.1 312.2 L600.5 312.2 L599.9 312.2 L599.3 312.2 L598.7 312.2 L598.1 312.2 L597.5 312.2Z" fill="#4e6886" stroke="#2f4560" stroke-width="0.5" stroke-linejoin="round"/></svg>
<svg style="left:707.7px;top:296.8px" width="6" height="7" viewBox="0 0 6 7"><rect x="0.8" y="2.8" width="4.2" height="3.2" fill="#2a3640"/><path d="M1.7 2.8 v-1 a1.2 1.2 0 0 1 2.4 0 v1" fill="none" stroke="#2a3640" stroke-width="0.8"/></svg>
<div style="left:437px;top:329.6px;width:70px;height:32.8px;background:linear-gradient(#8ba8d2,#7797c6 30%,#6685b8 75%,#5c7cb0);box-shadow:inset 0.8px 0.8px 0 rgba(205,224,250,.5),inset -0.8px -0.8px 0 #4d6c9b;"></div>
<svg style="left:0;top:0" width="800" height="460" viewBox="0 0 800 460"><path d="M438.2 346.2 L438.2 345.7 L438.8 345.7 L439.4 345.7 L440.0 345.7 L440.6 345.7 L441.2 345.7 L441.8 345.7 L442.4 345.7 L443.0 345.7 L443.6 345.7 L444.2 345.7 L444.8 345.7 L445.4 345.7 L446.0 345.7 L446.6 345.7 L447.2 345.7 L447.8 345.7 L448.4 345.7 L449.0 345.7 L449.6 344.9 L450.2 341.9 L450.8 340.9 L451.4 339.9 L452.0 339.0 L452.6 338.1 L453.2 338.7 L453.8 337.5 L454.4 335.9 L455.0 338.7 L455.6 337.8 L456.2 338.7 L456.8 339.0 L457.4 340.6 L458.0 341.3 L458.6 342.3 L459.2 343.3 L459.8 344.3 L460.4 345.7 L461.0 345.7 L461.6 345.7 L462.2 344.1 L462.8 341.8 L463.4 341.5 L464.0 339.7 L464.6 338.5 L465.2 336.2 L465.8 337.7 L466.4 337.5 L467.0 337.5 L467.6 336.6 L468.2 338.9 L468.8 338.8 L469.4 338.1 L470.0 338.3 L470.6 338.8 L471.2 339.7 L471.8 340.6 L472.4 341.8 L473.0 341.5 L473.6 342.3 L474.2 344.0 L474.8 344.9 L475.4 345.7 L476.0 345.7 L476.6 345.2 L477.2 343.2 L477.8 342.4 L478.4 342.0 L479.0 340.8 L479.6 340.9 L480.2 341.9 L480.8 342.6 L481.4 343.6 L482.0 344.5 L482.6 345.6 L483.2 344.3 L483.8 342.4 L484.4 342.0 L485.0 339.8 L485.6 340.4 L486.2 337.5 L486.8 337.8 L487.4 336.3 L488.0 336.5 L488.6 338.1 L489.2 338.8 L489.8 338.9 L490.4 338.2 L491.0 338.1 L491.6 337.2 L492.2 336.6 L492.8 339.0 L493.4 338.5 L494.0 338.2 L494.6 336.2 L495.2 337.7 L495.8 339.0 L496.4 336.6 L497.0 337.5 L497.6 336.2 L498.2 337.7 L498.8 338.0 L499.4 338.0 L500.0 336.8 L500.6 337.2 L501.2 338.6 L501.8 340.1 L502.4 340.8 L503.0 340.9 L503.6 342.1 L504.2 343.6 L504.8 345.7 L505.4 345.7 L505.4 346.7 L504.8 346.7 L504.2 348.7 L503.6 349.6 L503.0 350.6 L502.4 352.6 L501.8 352.7 L501.2 354.4 L500.6 354.4 L500.0 353.8 L499.4 355.1 L498.8 355.2 L498.2 353.9 L497.6 355.8 L497.0 353.3 L496.4 354.8 L495.8 354.1 L495.2 355.6 L494.6 355.7 L494.0 356.4 L493.4 353.7 L492.8 356.0 L492.2 356.0 L491.6 353.8 L491.0 354.1 L490.4 353.8 L489.8 354.3 L489.2 356.0 L488.6 354.2 L488.0 355.6 L487.4 356.0 L486.8 354.9 L486.2 354.8 L485.6 352.3 L485.0 352.7 L484.4 351.8 L483.8 350.0 L483.2 348.4 L482.6 346.8 L482.0 348.0 L481.4 348.7 L480.8 350.1 L480.2 351.1 L479.6 351.7 L479.0 351.1 L478.4 350.5 L477.8 350.7 L477.2 349.3 L476.6 347.3 L476.0 346.7 L475.4 346.7 L474.8 347.9 L474.2 348.1 L473.6 349.9 L473.0 349.7 L472.4 353.2 L471.8 352.7 L471.2 354.4 L470.6 353.1 L470.0 353.5 L469.4 355.4 L468.8 354.1 L468.2 354.6 L467.6 356.4 L467.0 354.1 L466.4 355.2 L465.8 354.8 L465.2 354.5 L464.6 356.1 L464.0 352.3 L463.4 351.8 L462.8 350.4 L462.2 348.1 L461.6 346.7 L461.0 346.7 L460.4 346.7 L459.8 348.0 L459.2 349.2 L458.6 350.7 L458.0 351.8 L457.4 355.2 L456.8 354.0 L456.2 355.7 L455.6 354.1 L455.0 356.1 L454.4 355.2 L453.8 354.8 L453.2 356.3 L452.6 354.9 L452.0 354.1 L451.4 352.7 L450.8 352.0 L450.2 349.9 L449.6 348.3 L449.0 346.7 L448.4 346.7 L447.8 346.7 L447.2 346.7 L446.6 346.7 L446.0 346.7 L445.4 346.7 L444.8 346.7 L444.2 346.7 L443.6 346.7 L443.0 346.7 L442.4 346.7 L441.8 346.7 L441.2 346.7 L440.6 346.7 L440.0 346.7 L439.4 346.7 L438.8 346.7 L438.2 346.7Z" fill="#4e6886" stroke="#2f4560" stroke-width="0.5" stroke-linejoin="round"/></svg>
<svg style="left:499.5px;top:331.4px" width="6" height="7" viewBox="0 0 6 7"><rect x="0.8" y="2.8" width="4.2" height="3.2" fill="#2a3640"/><path d="M1.7 2.8 v-1 a1.2 1.2 0 0 1 2.4 0 v1" fill="none" stroke="#2a3640" stroke-width="0.8"/></svg>
<div style="left:596.3px;top:329.6px;width:118.9px;height:32.8px;background:linear-gradient(#8ba8d2,#7797c6 30%,#6685b8 75%,#5c7cb0);box-shadow:inset 0.8px 0.8px 0 rgba(205,224,250,.5),inset -0.8px -0.8px 0 #4d6c9b;"></div>
<svg style="left:0;top:0" width="800" height="460" viewBox="0 0 800 460"><path d="M597.5 346.6 L597.5 346.0 L598.1 346.0 L598.7 346.0 L599.3 346.0 L599.9 346.0 L600.5 346.0 L601.1 346.0 L601.7 346.0 L602.3 346.0 L602.9 346.0 L603.5 346.0 L604.1 346.0 L604.7 346.0 L605.3 346.0 L605.9 346.0 L606.5 346.0 L607.1 346.0 L607.7 346.0 L608.3 346.0 L608.9 346.0 L609.5 346.0 L610.1 345.1 L610.7 342.6 L611.3 342.4 L611.9 342.4 L612.5 343.0 L613.1 343.7 L613.7 344.7 L614.3 345.9 L614.9 346.0 L615.5 346.0 L616.1 344.0 L616.7 342.0 L617.3 341.1 L617.9 340.4 L618.5 341.5 L619.1 342.6 L619.7 344.5 L620.3 346.0 L620.9 346.0 L621.5 346.0 L622.1 343.3 L622.7 340.6 L623.3 339.6 L623.9 341.0 L624.5 340.8 L625.1 340.3 L625.7 340.6 L626.3 339.6 L626.9 341.9 L627.5 343.4 L628.1 344.7 L628.7 346.0 L629.3 346.0 L629.9 345.6 L630.5 344.1 L631.1 342.4 L631.7 340.8 L632.3 341.0 L632.9 341.0 L633.5 339.6 L634.1 340.7 L634.7 340.8 L635.3 340.3 L635.9 341.1 L636.5 339.6 L637.1 340.8 L637.7 341.3 L638.3 340.6 L638.9 340.9 L639.5 339.7 L640.1 340.2 L640.7 341.8 L641.3 344.4 L641.9 346.0 L642.5 346.0 L643.1 345.6 L643.7 343.9 L644.3 342.7 L644.9 342.7 L645.5 342.3 L646.1 341.7 L646.7 342.3 L647.3 342.3 L647.9 342.7 L648.5 344.3 L649.1 344.8 L649.7 346.0 L650.3 346.0 L650.9 346.0 L651.5 345.1 L652.1 344.3 L652.7 343.3 L653.3 342.2 L653.9 342.2 L654.5 342.3 L655.1 340.3 L655.7 341.4 L656.3 340.7 L656.9 342.6 L657.5 342.6 L658.1 343.2 L658.7 343.8 L659.3 345.0 L659.9 345.7 L660.5 346.0 L661.1 346.0 L661.7 345.6 L662.3 343.2 L662.9 340.6 L663.5 340.3 L664.1 339.4 L664.7 340.3 L665.3 340.6 L665.9 339.1 L666.5 340.6 L667.1 339.3 L667.7 337.9 L668.3 340.2 L668.9 338.7 L669.5 339.5 L670.1 338.5 L670.7 340.6 L671.3 341.7 L671.9 341.6 L672.5 342.1 L673.1 342.0 L673.7 343.6 L674.3 345.2 L674.9 346.0 L675.5 346.0 L676.1 346.0 L676.7 343.6 L677.3 342.0 L677.9 341.4 L678.5 339.5 L679.1 339.3 L679.7 339.6 L680.3 339.3 L680.9 339.0 L681.5 338.0 L682.1 339.9 L682.7 338.9 L683.3 340.4 L683.9 340.8 L684.5 339.7 L685.1 340.7 L685.7 341.5 L686.3 341.9 L686.9 341.6 L687.5 343.2 L688.1 344.6 L688.7 345.8 L689.3 346.0 L689.9 346.0 L690.5 344.0 L691.1 340.4 L691.7 340.2 L692.3 339.8 L692.9 339.3 L693.5 338.5 L694.1 338.8 L694.7 339.3 L695.3 338.7 L695.9 338.9 L696.5 339.4 L697.1 339.3 L697.7 338.8 L698.3 339.3 L698.9 340.6 L699.5 340.6 L700.1 341.8 L700.7 343.0 L701.3 345.2 L701.9 346.0 L702.5 346.0 L703.1 344.2 L703.7 342.1 L704.3 340.1 L704.9 339.0 L705.5 338.2 L706.1 338.8 L706.7 339.3 L707.3 340.4 L707.9 338.6 L708.5 340.2 L709.1 338.4 L709.7 338.9 L710.3 338.7 L710.9 339.4 L711.5 338.8 L712.1 340.2 L712.7 340.7 L713.3 344.0 L713.9 346.0 L713.9 347.2 L713.3 350.2 L712.7 352.7 L712.1 354.9 L711.5 356.7 L710.9 357.3 L710.3 356.6 L709.7 356.2 L709.1 356.3 L708.5 355.5 L707.9 355.5 L707.3 356.3 L706.7 357.0 L706.1 357.4 L705.5 355.5 L704.9 355.9 L704.3 353.0 L703.7 350.9 L703.1 348.6 L702.5 347.2 L701.9 347.2 L701.3 348.3 L700.7 350.4 L700.1 352.3 L699.5 352.2 L698.9 353.3 L698.3 355.5 L697.7 355.7 L697.1 357.3 L696.5 357.6 L695.9 355.7 L695.3 359.1 L694.7 358.4 L694.1 358.6 L693.5 355.5 L692.9 355.3 L692.3 356.5 L691.7 354.3 L691.1 352.0 L690.5 349.7 L689.9 347.2 L689.3 347.2 L688.7 347.4 L688.1 348.3 L687.5 350.1 L686.9 351.5 L686.3 352.4 L685.7 353.3 L685.1 355.2 L684.5 353.8 L683.9 355.7 L683.3 356.9 L682.7 359.0 L682.1 358.0 L681.5 359.2 L680.9 358.1 L680.3 357.7 L679.7 357.9 L679.1 354.4 L678.5 353.8 L677.9 353.2 L677.3 352.0 L676.7 349.5 L676.1 347.2 L675.5 347.2 L674.9 347.2 L674.3 348.4 L673.7 349.8 L673.1 351.1 L672.5 355.0 L671.9 351.8 L671.3 354.7 L670.7 356.3 L670.1 356.9 L669.5 356.3 L668.9 359.7 L668.3 356.7 L667.7 357.0 L667.1 356.0 L666.5 358.2 L665.9 357.4 L665.3 362.1 L664.7 355.8 L664.1 354.0 L663.5 353.3 L662.9 353.0 L662.3 350.7 L661.7 347.6 L661.1 347.2 L660.5 347.2 L659.9 347.5 L659.3 348.5 L658.7 349.4 L658.1 350.6 L657.5 351.4 L656.9 351.8 L656.3 351.9 L655.7 352.1 L655.1 352.1 L654.5 352.1 L653.9 351.6 L653.3 350.7 L652.7 350.0 L652.1 350.0 L651.5 348.2 L650.9 347.2 L650.3 347.2 L649.7 347.2 L649.1 348.0 L648.5 349.1 L647.9 350.6 L647.3 351.2 L646.7 350.8 L646.1 351.3 L645.5 351.2 L644.9 350.4 L644.3 350.4 L643.7 349.5 L643.1 347.5 L642.5 347.2 L641.9 347.2 L641.3 349.3 L640.7 351.4 L640.1 352.5 L639.5 353.0 L638.9 354.2 L638.3 352.6 L637.7 354.0 L637.1 354.4 L636.5 352.8 L635.9 353.5 L635.3 352.5 L634.7 352.9 L634.1 352.9 L633.5 353.4 L632.9 352.7 L632.3 352.5 L631.7 351.8 L631.1 351.2 L630.5 349.9 L629.9 347.6 L629.3 347.2 L628.7 347.2 L628.1 348.4 L627.5 350.5 L626.9 351.8 L626.3 352.6 L625.7 354.7 L625.1 358.2 L624.5 355.0 L623.9 354.9 L623.3 353.2 L622.7 352.0 L622.1 350.2 L621.5 347.2 L620.9 347.2 L620.3 347.2 L619.7 349.0 L619.1 350.0 L618.5 352.2 L617.9 353.4 L617.3 352.1 L616.7 351.6 L616.1 349.6 L615.5 347.2 L614.9 347.2 L614.3 347.3 L613.7 348.4 L613.1 350.3 L612.5 350.0 L611.9 351.8 L611.3 351.5 L610.7 350.4 L610.1 348.7 L609.5 347.2 L608.9 347.2 L608.3 347.2 L607.7 347.2 L607.1 347.2 L606.5 347.2 L605.9 347.2 L605.3 347.2 L604.7 347.2 L604.1 347.2 L603.5 347.2 L602.9 347.2 L602.3 347.2 L601.7 347.2 L601.1 347.2 L600.5 347.2 L599.9 347.2 L599.3 347.2 L598.7 347.2 L598.1 347.2 L597.5 347.2Z" fill="#4e6886" stroke="#2f4560" stroke-width="0.5" stroke-linejoin="round"/></svg>
<div class="t" style="left:598.5px;top:330.48px;font-size:7.128px;letter-spacing:0;font-weight:bold;-webkit-text-stroke:0.2px;color:#1a2636;transform-origin:0 0;transform:scaleX(0.825);">L.A Coasting Talkbox Left (RnB) Talkbo</div>
<svg style="left:707.7px;top:331.4px" width="6" height="7" viewBox="0 0 6 7"><rect x="0.8" y="2.8" width="4.2" height="3.2" fill="#2a3640"/><path d="M1.7 2.8 v-1 a1.2 1.2 0 0 1 2.4 0 v1" fill="none" stroke="#2a3640" stroke-width="0.8"/></svg>
<div style="left:437px;top:364.8px;width:70px;height:32.1px;background:linear-gradient(#8ba8d2,#7797c6 30%,#6685b8 75%,#5c7cb0);box-shadow:inset 0.8px 0.8px 0 rgba(205,224,250,.5),inset -0.8px -0.8px 0 #4d6c9b;"></div>
<svg style="left:0;top:0" width="800" height="460" viewBox="0 0 800 460"><path d="M438.2 380.8 L438.2 380.3 L438.8 380.3 L439.4 380.3 L440.0 380.3 L440.6 380.3 L441.2 380.3 L441.8 380.3 L442.4 380.3 L443.0 380.3 L443.6 380.3 L444.2 380.3 L444.8 380.3 L445.4 380.3 L446.0 380.3 L446.6 380.3 L447.2 380.3 L447.8 380.3 L448.4 380.3 L449.0 380.3 L449.6 379.1 L450.2 376.6 L450.8 376.2 L451.4 374.0 L452.0 373.4 L452.6 372.8 L453.2 373.2 L453.8 372.6 L454.4 371.7 L455.0 372.7 L455.6 371.2 L456.2 373.9 L456.8 373.6 L457.4 373.4 L458.0 375.5 L458.6 376.8 L459.2 378.0 L459.8 378.9 L460.4 380.3 L461.0 380.3 L461.6 380.3 L462.2 378.9 L462.8 376.8 L463.4 376.0 L464.0 374.8 L464.6 374.6 L465.2 372.5 L465.8 371.5 L466.4 373.3 L467.0 372.5 L467.6 370.4 L468.2 370.2 L468.8 372.1 L469.4 370.5 L470.0 372.6 L470.6 372.7 L471.2 373.0 L471.8 375.2 L472.4 374.9 L473.0 377.0 L473.6 377.8 L474.2 378.0 L474.8 379.7 L475.4 380.3 L476.0 380.3 L476.6 379.7 L477.2 377.8 L477.8 377.7 L478.4 376.2 L479.0 376.6 L479.6 376.3 L480.2 375.7 L480.8 377.3 L481.4 377.8 L482.0 379.0 L482.6 380.2 L483.2 379.1 L483.8 377.2 L484.4 376.5 L485.0 375.6 L485.6 375.3 L486.2 373.9 L486.8 372.6 L487.4 373.7 L488.0 371.6 L488.6 372.1 L489.2 372.8 L489.8 371.7 L490.4 371.1 L491.0 373.6 L491.6 370.9 L492.2 370.9 L492.8 372.7 L493.4 371.2 L494.0 371.5 L494.6 373.2 L495.2 372.9 L495.8 373.5 L496.4 372.4 L497.0 373.0 L497.6 371.8 L498.2 372.1 L498.8 372.5 L499.4 372.6 L500.0 373.3 L500.6 372.7 L501.2 374.7 L501.8 374.6 L502.4 375.8 L503.0 374.9 L503.6 377.1 L504.2 378.2 L504.8 380.3 L505.4 380.3 L505.4 381.3 L504.8 381.3 L504.2 383.6 L503.6 385.3 L503.0 386.4 L502.4 387.2 L501.8 386.4 L501.2 387.0 L500.6 388.6 L500.0 387.2 L499.4 388.9 L498.8 389.4 L498.2 389.2 L497.6 387.6 L497.0 389.7 L496.4 390.0 L495.8 389.4 L495.2 389.3 L494.6 389.1 L494.0 390.7 L493.4 389.1 L492.8 390.4 L492.2 391.0 L491.6 389.3 L491.0 389.4 L490.4 388.2 L489.8 387.9 L489.2 390.0 L488.6 388.0 L488.0 388.9 L487.4 387.8 L486.8 388.9 L486.2 387.2 L485.6 387.4 L485.0 386.8 L484.4 384.6 L483.8 383.8 L483.2 382.3 L482.6 381.4 L482.0 382.7 L481.4 383.3 L480.8 384.7 L480.2 385.3 L479.6 385.4 L479.0 385.6 L478.4 384.7 L477.8 384.1 L477.2 383.7 L476.6 381.9 L476.0 381.3 L475.4 381.3 L474.8 382.0 L474.2 383.0 L473.6 384.3 L473.0 385.2 L472.4 385.5 L471.8 386.3 L471.2 388.6 L470.6 388.3 L470.0 390.1 L469.4 390.2 L468.8 390.6 L468.2 389.3 L467.6 389.2 L467.0 391.9 L466.4 387.9 L465.8 388.0 L465.2 389.3 L464.6 388.1 L464.0 387.7 L463.4 385.8 L462.8 385.1 L462.2 382.9 L461.6 381.3 L461.0 381.3 L460.4 381.3 L459.8 383.3 L459.2 383.6 L458.6 384.6 L458.0 386.2 L457.4 387.7 L456.8 391.5 L456.2 388.7 L455.6 388.7 L455.0 390.0 L454.4 391.0 L453.8 390.2 L453.2 389.6 L452.6 388.0 L452.0 389.4 L451.4 388.3 L450.8 385.4 L450.2 383.9 L449.6 382.2 L449.0 381.3 L448.4 381.3 L447.8 381.3 L447.2 381.3 L446.6 381.3 L446.0 381.3 L445.4 381.3 L444.8 381.3 L444.2 381.3 L443.6 381.3 L443.0 381.3 L442.4 381.3 L441.8 381.3 L441.2 381.3 L440.6 381.3 L440.0 381.3 L439.4 381.3 L438.8 381.3 L438.2 381.3Z" fill="#4e6886" stroke="#2f4560" stroke-width="0.5" stroke-linejoin="round"/></svg>
<svg style="left:499.5px;top:366.6px" width="6" height="7" viewBox="0 0 6 7"><rect x="0.8" y="2.8" width="4.2" height="3.2" fill="#2a3640"/><path d="M1.7 2.8 v-1 a1.2 1.2 0 0 1 2.4 0 v1" fill="none" stroke="#2a3640" stroke-width="0.8"/></svg>
<div style="left:596.3px;top:364.8px;width:118.9px;height:32.1px;background:linear-gradient(#8ba8d2,#7797c6 30%,#6685b8 75%,#5c7cb0);box-shadow:inset 0.8px 0.8px 0 rgba(205,224,250,.5),inset -0.8px -0.8px 0 #4d6c9b;"></div>
<svg style="left:0;top:0" width="800" height="460" viewBox="0 0 800 460"><path d="M597.5 381.6 L597.5 381.0 L598.1 381.0 L598.7 381.0 L599.3 381.0 L599.9 381.0 L600.5 381.0 L601.1 381.0 L601.7 381.0 L602.3 381.0 L602.9 381.0 L603.5 381.0 L604.1 381.0 L604.7 381.0 L605.3 381.0 L605.9 381.0 L606.5 381.0 L607.1 381.0 L607.7 381.0 L608.3 381.0 L608.9 381.0 L609.5 381.0 L610.1 379.7 L610.7 377.7 L611.3 376.9 L611.9 377.3 L612.5 378.2 L613.1 378.1 L613.7 379.4 L614.3 380.9 L614.9 381.0 L615.5 381.0 L616.1 378.2 L616.7 375.7 L617.3 375.8 L617.9 376.3 L618.5 377.0 L619.1 377.1 L619.7 379.4 L620.3 381.0 L620.9 381.0 L621.5 381.0 L622.1 377.8 L622.7 375.0 L623.3 376.0 L623.9 375.6 L624.5 374.3 L625.1 375.0 L625.7 375.5 L626.3 375.7 L626.9 377.0 L627.5 377.2 L628.1 380.0 L628.7 381.0 L629.3 381.0 L629.9 380.5 L630.5 378.0 L631.1 377.7 L631.7 377.0 L632.3 376.7 L632.9 375.5 L633.5 374.9 L634.1 376.6 L634.7 376.5 L635.3 376.9 L635.9 375.4 L636.5 376.8 L637.1 375.5 L637.7 375.2 L638.3 375.1 L638.9 375.8 L639.5 374.2 L640.1 376.5 L640.7 377.8 L641.3 379.5 L641.9 381.0 L642.5 381.0 L643.1 380.9 L643.7 379.2 L644.3 377.5 L644.9 377.7 L645.5 377.1 L646.1 376.8 L646.7 377.5 L647.3 377.9 L647.9 378.7 L648.5 379.7 L649.1 380.3 L649.7 381.0 L650.3 381.0 L650.9 381.0 L651.5 380.1 L652.1 378.5 L652.7 378.6 L653.3 377.7 L653.9 376.2 L654.5 377.1 L655.1 377.0 L655.7 377.1 L656.3 375.9 L656.9 377.3 L657.5 378.3 L658.1 378.4 L658.7 379.1 L659.3 379.9 L659.9 380.6 L660.5 381.0 L661.1 381.0 L661.7 380.7 L662.3 378.1 L662.9 376.5 L663.5 376.9 L664.1 374.0 L664.7 373.9 L665.3 374.4 L665.9 374.7 L666.5 373.7 L667.1 374.3 L667.7 375.0 L668.3 375.9 L668.9 373.7 L669.5 374.0 L670.1 374.5 L670.7 374.6 L671.3 375.0 L671.9 374.7 L672.5 375.6 L673.1 376.4 L673.7 377.9 L674.3 379.8 L674.9 381.0 L675.5 381.0 L676.1 381.0 L676.7 378.6 L677.3 376.9 L677.9 374.7 L678.5 375.4 L679.1 375.9 L679.7 375.7 L680.3 373.6 L680.9 373.8 L681.5 374.4 L682.1 374.1 L682.7 375.4 L683.3 373.9 L683.9 375.4 L684.5 374.8 L685.1 375.2 L685.7 376.6 L686.3 376.7 L686.9 377.7 L687.5 378.5 L688.1 379.1 L688.7 380.8 L689.3 381.0 L689.9 381.0 L690.5 378.6 L691.1 376.5 L691.7 374.3 L692.3 375.4 L692.9 375.6 L693.5 375.6 L694.1 373.2 L694.7 373.5 L695.3 375.0 L695.9 373.4 L696.5 374.5 L697.1 374.6 L697.7 375.3 L698.3 375.3 L698.9 374.3 L699.5 375.6 L700.1 377.8 L700.7 379.0 L701.3 380.1 L701.9 381.0 L702.5 381.0 L703.1 379.9 L703.7 377.8 L704.3 376.7 L704.9 375.2 L705.5 375.0 L706.1 375.5 L706.7 376.1 L707.3 374.1 L707.9 373.2 L708.5 375.0 L709.1 375.2 L709.7 373.5 L710.3 374.2 L710.9 374.4 L711.5 375.1 L712.1 376.3 L712.7 376.0 L713.3 379.6 L713.9 381.0 L713.9 382.2 L713.3 384.2 L712.7 387.2 L712.1 389.2 L711.5 395.1 L710.9 390.7 L710.3 391.1 L709.7 390.7 L709.1 392.7 L708.5 391.2 L707.9 391.2 L707.3 392.4 L706.7 391.1 L706.1 395.6 L705.5 392.1 L704.9 394.1 L704.3 390.5 L703.7 386.8 L703.1 384.4 L702.5 382.2 L701.9 382.2 L701.3 382.8 L700.7 384.5 L700.1 385.6 L699.5 387.8 L698.9 390.2 L698.3 390.0 L697.7 390.4 L697.1 392.2 L696.5 393.3 L695.9 391.5 L695.3 392.2 L694.7 391.3 L694.1 392.6 L693.5 391.8 L692.9 392.3 L692.3 391.7 L691.7 388.4 L691.1 386.7 L690.5 386.2 L689.9 382.2 L689.3 382.2 L688.7 382.4 L688.1 384.0 L687.5 384.8 L686.9 386.2 L686.3 386.9 L685.7 387.2 L685.1 387.9 L684.5 389.1 L683.9 391.6 L683.3 391.7 L682.7 390.9 L682.1 393.8 L681.5 393.7 L680.9 390.5 L680.3 393.0 L679.7 393.6 L679.1 389.6 L678.5 388.8 L677.9 388.4 L677.3 387.6 L676.7 384.5 L676.1 382.2 L675.5 382.2 L674.9 382.2 L674.3 383.5 L673.7 385.3 L673.1 386.2 L672.5 388.3 L671.9 389.7 L671.3 393.2 L670.7 391.1 L670.1 393.0 L669.5 391.8 L668.9 391.1 L668.3 394.0 L667.7 394.7 L667.1 393.7 L666.5 393.9 L665.9 394.5 L665.3 390.6 L664.7 391.7 L664.1 389.5 L663.5 387.3 L662.9 387.7 L662.3 384.8 L661.7 382.6 L661.1 382.2 L660.5 382.2 L659.9 382.5 L659.3 383.6 L658.7 384.1 L658.1 385.2 L657.5 385.5 L656.9 385.9 L656.3 387.3 L655.7 387.1 L655.1 386.9 L654.5 385.8 L653.9 386.2 L653.3 386.0 L652.7 385.7 L652.1 384.0 L651.5 382.8 L650.9 382.2 L650.3 382.2 L649.7 382.2 L649.1 383.2 L648.5 383.6 L647.9 385.7 L647.3 384.8 L646.7 386.3 L646.1 386.4 L645.5 385.5 L644.9 386.5 L644.3 385.2 L643.7 384.5 L643.1 382.4 L642.5 382.2 L641.9 382.2 L641.3 383.7 L640.7 385.6 L640.1 387.3 L639.5 388.5 L638.9 389.7 L638.3 387.9 L637.7 387.7 L637.1 387.5 L636.5 386.8 L635.9 386.7 L635.3 388.2 L634.7 388.8 L634.1 388.7 L633.5 389.0 L632.9 388.6 L632.3 388.5 L631.7 387.1 L631.1 385.5 L630.5 385.1 L629.9 382.7 L629.3 382.2 L628.7 382.2 L628.1 383.5 L627.5 385.2 L626.9 386.7 L626.3 388.3 L625.7 388.8 L625.1 389.4 L624.5 390.8 L623.9 390.8 L623.3 390.1 L622.7 388.2 L622.1 384.8 L621.5 382.2 L620.9 382.2 L620.3 382.2 L619.7 383.7 L619.1 385.3 L618.5 386.9 L617.9 388.7 L617.3 387.0 L616.7 389.1 L616.1 384.5 L615.5 382.2 L614.9 382.2 L614.3 382.3 L613.7 384.1 L613.1 385.0 L612.5 386.0 L611.9 385.8 L611.3 386.2 L610.7 385.4 L610.1 383.7 L609.5 382.2 L608.9 382.2 L608.3 382.2 L607.7 382.2 L607.1 382.2 L606.5 382.2 L605.9 382.2 L605.3 382.2 L604.7 382.2 L604.1 382.2 L603.5 382.2 L602.9 382.2 L602.3 382.2 L601.7 382.2 L601.1 382.2 L600.5 382.2 L599.9 382.2 L599.3 382.2 L598.7 382.2 L598.1 382.2 L597.5 382.2Z" fill="#4e6886" stroke="#2f4560" stroke-width="0.5" stroke-linejoin="round"/></svg>
<div class="t" style="left:598.5px;top:365.68px;font-size:7.128px;letter-spacing:0;font-weight:bold;-webkit-text-stroke:0.2px;color:#1a2636;transform-origin:0 0;transform:scaleX(0.820);">L.A Coasting Talkbox Right (RnB) Talkb</div>
<svg style="left:707.7px;top:366.6px" width="6" height="7" viewBox="0 0 6 7"><rect x="0.8" y="2.8" width="4.2" height="3.2" fill="#2a3640"/><path d="M1.7 2.8 v-1 a1.2 1.2 0 0 1 2.4 0 v1" fill="none" stroke="#2a3640" stroke-width="0.8"/></svg>
<div style="left:291px;top:398px;width:425px;height:33.5px;background:linear-gradient(#a58fb9,#8a72a5 45%,#634a86);box-shadow:inset 0 0 0 0.7px rgba(90,66,125,.8);"></div>
<div class="t" style="left:293.7px;top:399.48px;font-size:7.128px;letter-spacing:0;font-weight:bold;-webkit-text-stroke:0.2px;color:#f4eef8;transform-origin:0 0;transform:scaleX(0.813);">Guitars</div>
<svg style="left:0;top:0" width="800" height="460" viewBox="0 0 800 460"><path d="M266 122.7 H274 V154 H291.0 V138.3 H790" fill="none" stroke="#3a86a4" stroke-width="1.4" stroke-linejoin="miter"/></svg>
<svg style="left:0;top:0" width="800" height="460" viewBox="0 0 800 460"><path d="M266 199 H343.4 L348.4 206.8 H360 L392 199 H663 Q700 203 715 222.6 V199 H790" fill="none" stroke="#3a86a4" stroke-width="1.4" stroke-linejoin="miter"/></svg>
<svg style="left:0;top:0" width="800" height="460" viewBox="0 0 800 460"><path d="M266 241.3 H284.3 L291.4 226.8 H337 L344.4 241.3 H394.3 L397.7 258.2 H450.7 L477.7 226.8 H554.3 V258.2 H610 L637 242 H790" fill="none" stroke="#3a86a4" stroke-width="1.4" stroke-linejoin="miter"/></svg>
<svg style="left:0;top:0" width="800" height="460" viewBox="0 0 800 460"><path d="M266 261 H321 V293 H396.7 V261 H427 V293 H490 V261 H591.4 V293 H715 V261 H790" fill="none" stroke="#3a86a4" stroke-width="1.4" stroke-linejoin="miter"/></svg>
<div style="left:790px;top:20px;width:10px;height:16px;background:#3f6d82;"></div>
<div style="left:791px;top:24px;width:8.5px;height:9px;background:linear-gradient(#aeb9be,#7c8a90);border:1px solid #1f2a30;border-radius:1px;"></div>
<svg style="left:791px;top:24px" width="8.5" height="9" viewBox="0 0 8.5 9"><path d="M2 3.4 h4.5 l-2.25 2.6Z" fill="#1f2a30"/></svg>
<div style="left:790px;top:36px;width:10px;height:57px;background:linear-gradient(90deg,#8e9aa0,#b9c2c6 30%,#c0c8cc);"></div>
<div style="left:790.5px;top:36.5px;width:9.5px;height:9px;background:linear-gradient(#d6dcde,#a9b3b7);border:1px solid #27333a;border-radius:1px;"></div>
<svg style="left:790.5px;top:36.5px" width="9.5" height="9" viewBox="0 0 10 10"><path d="M2.5 6.3 L5 3.6 L7.5 6.3" fill="none" stroke="#141c20" stroke-width="1.3"/></svg>
<div style="left:790.5px;top:45.5px;width:9.5px;height:27px;background:linear-gradient(90deg,#d0d6d9,#9aa5aa);border:1px solid #27333a;border-radius:1px;"></div>
<div style="left:790.5px;top:83.5px;width:9.5px;height:9px;background:linear-gradient(#d6dcde,#a9b3b7);border:1px solid #27333a;border-radius:1px;"></div>
<svg style="left:790.5px;top:83.5px" width="9.5" height="9" viewBox="0 0 10 10"><path d="M2.5 3.7 L5 6.4 L7.5 3.7" fill="none" stroke="#141c20" stroke-width="1.3"/></svg>
<div style="left:790px;top:94px;width:10px;height:355px;background:#5a6970;"></div>
<div style="left:790.5px;top:94.5px;width:9.5px;height:8.5px;background:linear-gradient(#d6dcde,#a9b3b7);border:1px solid #27333a;border-radius:1px;"></div>
<svg style="left:790.5px;top:94.5px" width="9.5" height="8.5" viewBox="0 0 10 10"><path d="M3 7 L7 3" fill="none" stroke="#141c20" stroke-width="1.3"/></svg>
<div style="left:790.5px;top:103.5px;width:9.5px;height:33px;background:#c0c8cc;border-left:1px solid #6a787f;"></div>
<div style="left:795px;top:106px;width:1px;height:28px;background:#5a686f;"></div>
<svg style="left:790.5px;top:125.5px" width="9.5" height="9" viewBox="0 0 9.5 9"><path d="M1 4.5 L8 1 V8Z" fill="#8a969c" stroke="#1f2a30" stroke-width="0.8"/><path d="M4 4.5 L7 3 V6Z" fill="#5a686f"/></svg>
<div style="left:790.5px;top:137px;width:9.5px;height:8px;background:linear-gradient(#d6dcde,#a9b3b7);border:1px solid #27333a;border-radius:1px;"></div>
<svg style="left:790.5px;top:137px" width="9.5" height="8" viewBox="0 0 10 10"><path d="M2.8 3 L5 5.4 L7.2 3 M2.8 7.2 L5 4.8 L7.2 7.2" fill="none" stroke="#141c20" stroke-width="1.3"/></svg>
<div style="left:790.5px;top:145px;width:9.5px;height:244.5px;background:linear-gradient(90deg,#8e9aa0,#bcc5c9 25%,#c3cbcf);"></div>
<div style="left:790.5px;top:276.5px;width:9.5px;height:44.5px;background:linear-gradient(90deg,#8a979d,#5d6b72);border:1px solid #1f2a30;border-radius:1px;"></div>
<div style="left:790.5px;top:389.5px;width:9.5px;height:8px;background:linear-gradient(#d6dcde,#a9b3b7);border:1px solid #27333a;border-radius:1px;"></div>
<svg style="left:790.5px;top:389.5px" width="9.5" height="8" viewBox="0 0 10 10"><path d="M2.5 3.7 L5 6.4 L7.5 3.7" fill="none" stroke="#141c20" stroke-width="1.3"/></svg>
<div style="left:790.5px;top:397.5px;width:9.5px;height:2px;background:#2c3a42;"></div>
<div style="left:790.5px;top:399.5px;width:9.5px;height:7px;background:linear-gradient(#d0d6d9,#a4aeb3);border:1px solid #27333a;"></div>
<svg style="left:790.5px;top:399.5px" width="9.5" height="7" viewBox="0 0 9.5 7"><path d="M3 2.4 h3.6 l-1.8 2.4Z" fill="#141c20"/></svg>
<div style="left:790.5px;top:406.5px;width:9.5px;height:42px;background:#b7c0c4;border-left:1px solid #5a686f;"></div>
<div style="left:795px;top:412px;width:1px;height:28px;background:#3c4950;"></div>
<div style="left:793.6px;top:409.3px;width:3.6px;height:1px;background:#1c262b;"></div>
<div style="left:793.6px;top:444.3px;width:3.6px;height:1px;background:#1c262b;"></div>
<div style="left:794.9px;top:443px;width:1px;height:3.6px;background:#1c262b;"></div>
<svg style="left:790.5px;top:415.5px" width="9.5" height="9" viewBox="0 0 9.5 9"><path d="M1 4.5 L8 1 V8Z" fill="#8a969c" stroke="#1f2a30" stroke-width="0.8"/><path d="M4 4.5 L7 3 V6Z" fill="#5a686f"/></svg>
<div style="left:266px;top:450.5px;width:534px;height:9.5px;background:linear-gradient(#909ca1,#b4bdc1 25%,#c3cbce);"></div>
<svg style="left:266.5px;top:450.5px" width="9" height="9.5" viewBox="0 0 9 9.5"><path d="M5.6 2.2 L2.9 4.8 L5.6 7.4" fill="none" stroke="#141c20" stroke-width="1.2"/></svg>
<div style="left:276.3px;top:451px;width:0.8px;height:9px;background:#8d999e;"></div>
<div style="left:280px;top:451px;width:14.5px;height:9px;background:linear-gradient(#909ca2,#64727a);border:1px solid #2a363c;border-radius:1px;"></div>
<div style="left:728.6px;top:451px;width:0.8px;height:9px;background:#8d999e;"></div>
<svg style="left:729.5px;top:450.5px" width="8.5" height="9.5" viewBox="0 0 8.5 9.5"><path d="M3 2.2 L5.7 4.8 L3 7.4" fill="none" stroke="#141c20" stroke-width="1.2"/></svg>
<div style="left:738px;top:450.5px;width:2px;height:9.5px;background:#2c3a42;"></div>
<div style="left:740px;top:450.5px;width:6.5px;height:9.5px;background:linear-gradient(#d0d6d9,#a4aeb3);border:1px solid #27333a;"></div>
<svg style="left:740px;top:450.5px" width="6.5" height="9.5" viewBox="0 0 6.5 9.5"><path d="M1.6 3.8 h3.4 l-1.7 2.4Z" fill="#141c20"/></svg>
<div style="left:746.5px;top:450.5px;width:43.5px;height:9.5px;background:#b7c0c4;border-top:1px solid #7a878d;"></div>
<div style="left:748.6px;top:455.3px;width:3.6px;height:1px;background:#1c262b;"></div>
<div style="left:753.5px;top:455.3px;width:31px;height:1px;background:#3c4950;"></div>
<svg style="left:762px;top:451px" width="10" height="9" viewBox="0 0 10 9"><path d="M5 1 L9 8 H1Z" fill="#8a969c" stroke="#1f2a30" stroke-width="0.8"/><path d="M5 4 L6.6 7 H3.4Z" fill="#5a686f"/></svg>
<div style="left:785.6px;top:455.3px;width:3.6px;height:1px;background:#1c262b;"></div>
<div style="left:786.9px;top:454px;width:1px;height:3.6px;background:#1c262b;"></div>
<div style="left:790px;top:449.5px;width:10px;height:10.5px;background:#2d3b43;"></div>
</div></body></html>
